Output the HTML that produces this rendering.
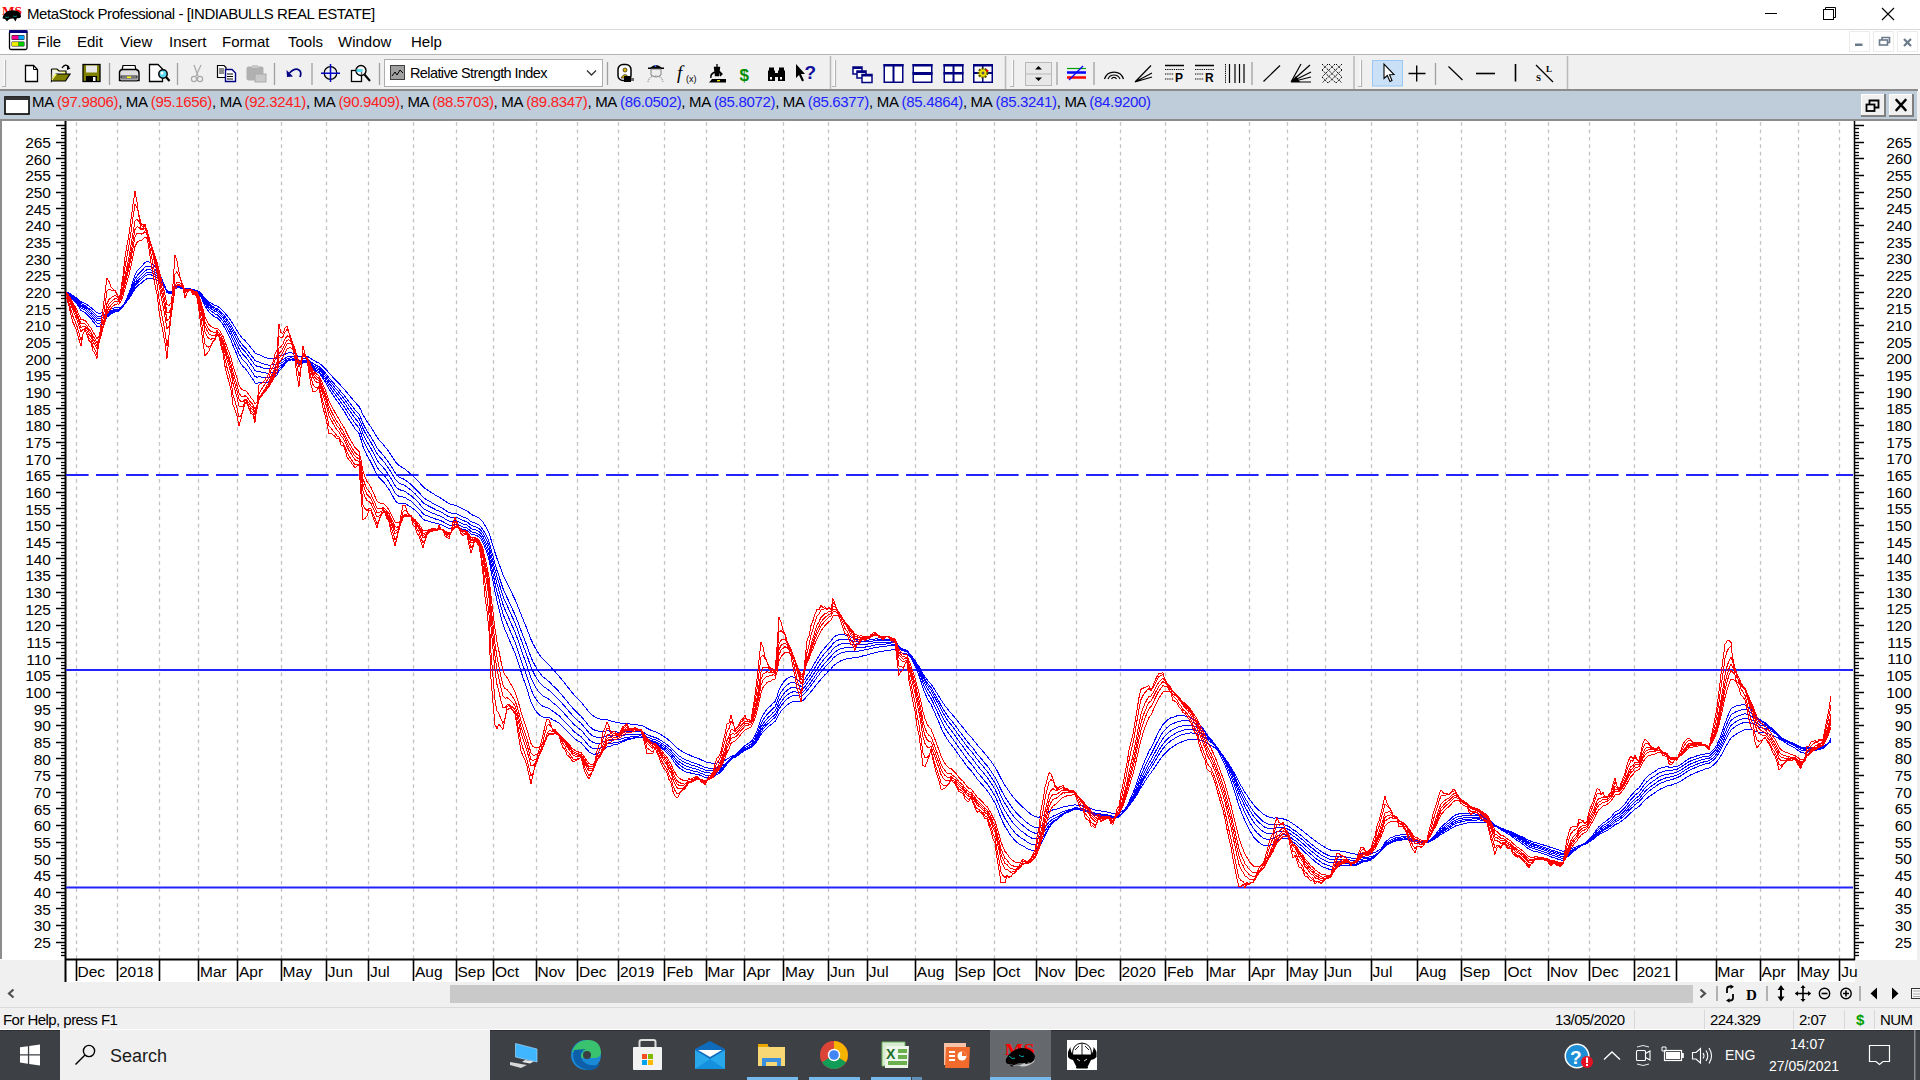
<!DOCTYPE html>
<html><head><meta charset="utf-8"><style>
*{margin:0;padding:0;box-sizing:border-box}
html,body{width:1920px;height:1080px;overflow:hidden;background:#fff;font-family:"Liberation Sans",sans-serif;position:relative}
.a{position:absolute}
svg{position:absolute;left:0;top:0}
.yl{font-size:15.5px;fill:#000;font-family:"Liberation Sans",sans-serif}
.ml{font-size:15.5px;fill:#000;font-family:"Liberation Sans",sans-serif}
.rsi{font-size:14.5px;fill:#000;font-family:"Liberation Sans",sans-serif;letter-spacing:-0.6px}
.menu span{position:absolute;top:33px;font-size:15px;color:#000}
.st{position:absolute;top:1011px;font-size:15px;letter-spacing:-0.55px;color:#000;white-space:nowrap}
</style></head><body>
<div class="a" style="left:0;top:0;width:1920px;height:29px;background:#fff"></div>
<div class="a" style="left:27px;top:5px;font-size:15px;letter-spacing:-0.45px;color:#000;white-space:nowrap">MetaStock Professional - [INDIABULLS REAL ESTATE]</div>
<div class="a" style="left:0;top:29px;width:1920px;height:1px;background:#d9d9d9"></div>
<div class="a" style="left:0;top:30px;width:1920px;height:24px;background:#fff"></div>
<div class="menu">
<span style="left:37px">File</span><span style="left:77px">Edit</span><span style="left:120px">View</span><span style="left:169px">Insert</span><span style="left:222px">Format</span><span style="left:288px">Tools</span><span style="left:338px">Window</span><span style="left:411px">Help</span>
</div>
<div class="a" style="left:0;top:54px;width:1920px;height:1px;background:#b4b4b4"></div>
<div class="a" style="left:0;top:55px;width:1920px;height:34px;background:#f0f0f0"></div>
<div class="a" style="left:0;top:89px;width:1918px;height:2px;background:#8c8c8c"></div>
<div class="a" style="left:0;top:91px;width:1917px;height:28px;background:#bfcddb"></div>
<div class="a" style="left:32px;top:93px;font-size:15px;letter-spacing:-0.325px;color:#000;white-space:nowrap">MA <span style="color:#ff2020">(97.9806)</span>, MA <span style="color:#ff2020">(95.1656)</span>, MA <span style="color:#ff2020">(92.3241)</span>, MA <span style="color:#ff2020">(90.9409)</span>, MA <span style="color:#ff2020">(88.5703)</span>, MA <span style="color:#ff2020">(89.8347)</span>, MA <span style="color:#2020ff">(86.0502)</span>, MA <span style="color:#2020ff">(85.8072)</span>, MA <span style="color:#2020ff">(85.6377)</span>, MA <span style="color:#2020ff">(85.4864)</span>, MA <span style="color:#2020ff">(85.3241)</span>, MA <span style="color:#2020ff">(84.9200)</span></div>
<div class="a" style="left:0;top:119px;width:1917px;height:2px;background:#8c8c8c"></div><div class="a" style="left:1917px;top:91px;width:3px;height:30px;background:#f0f0f0"></div>
<div class="a" style="left:0;top:121px;width:1920px;height:861px;background:#fff"></div>
<div class="a" style="left:0;top:121px;width:2px;height:838px;background:#8c8c8c"></div>
<div class="a" style="left:0;top:960px;width:65px;height:22px;background:#f0f0f0"></div>
<div class="a" style="left:1855px;top:960px;width:65px;height:22px;background:#f0f0f0"></div>
<div class="a" style="left:1917px;top:121px;width:3px;height:839px;background:#f0f0f0"></div>
<div class="a" style="left:0;top:982px;width:1920px;height:25px;background:#f0f0f0"></div>
<div class="a" style="left:450px;top:985px;width:1243px;height:18px;background:#c9c9c9"></div>
<div class="a" style="left:0;top:1007px;width:1920px;height:1px;background:#dadada"></div>
<div class="a" style="left:0;top:1008px;width:1920px;height:22px;background:#f0f0f0"></div>
<div class="st" style="left:3px">For Help, press F1</div>
<div class="st" style="left:1555px">13/05/2020</div>
<div class="st" style="left:1710px">224.329</div>
<div class="st" style="left:1799px">2:07</div>
<div class="st" style="left:1856px;color:#00a000;font-weight:bold;font-size:15px">$</div>
<div class="st" style="left:1880px">NUM</div>
<div class="a" style="left:0;top:1030px;width:1920px;height:50px;background:#3d4045"></div><div class="a" style="left:0;top:1029px;width:1920px;height:1px;background:#fff"></div><div class="a" style="left:0;top:1030px;width:1920px;height:1px;background:#2c2e32"></div>
<div class="a" style="left:60px;top:1030px;width:430px;height:50px;background:#f0f0f0"></div>
<div class="a" style="left:110px;top:1045.5px;font-size:18px;color:#1a1a1a">Search</div>
<div class="a" style="left:1725px;top:1047px;font-size:14px;color:#fff">ENG</div>
<div class="a" style="left:1790px;top:1036px;font-size:14px;color:#fff">14:07</div>
<div class="a" style="left:1769px;top:1058px;font-size:14px;color:#fff">27/05/2021</div>
<svg width="1920" height="1080" viewBox="0 0 1920 1080">
<defs><clipPath id="cp"><rect x="66" y="121" width="1787" height="838"/></clipPath></defs>
<line x1="76.5" y1="122" x2="76.5" y2="959" stroke="#c2c2c2" stroke-width="1.3" stroke-dasharray="3.72 3.72"/><line x1="117.5" y1="122" x2="117.5" y2="959" stroke="#c2c2c2" stroke-width="1.3" stroke-dasharray="3.72 3.72"/><line x1="159.5" y1="122" x2="159.5" y2="959" stroke="#c2c2c2" stroke-width="1.3" stroke-dasharray="3.72 3.72"/><line x1="198.5" y1="122" x2="198.5" y2="959" stroke="#c2c2c2" stroke-width="1.3" stroke-dasharray="3.72 3.72"/><line x1="237.5" y1="122" x2="237.5" y2="959" stroke="#c2c2c2" stroke-width="1.3" stroke-dasharray="3.72 3.72"/><line x1="281.5" y1="122" x2="281.5" y2="959" stroke="#c2c2c2" stroke-width="1.3" stroke-dasharray="3.72 3.72"/><line x1="326.5" y1="122" x2="326.5" y2="959" stroke="#c2c2c2" stroke-width="1.3" stroke-dasharray="3.72 3.72"/><line x1="368.5" y1="122" x2="368.5" y2="959" stroke="#c2c2c2" stroke-width="1.3" stroke-dasharray="3.72 3.72"/><line x1="413.5" y1="122" x2="413.5" y2="959" stroke="#c2c2c2" stroke-width="1.3" stroke-dasharray="3.72 3.72"/><line x1="456.5" y1="122" x2="456.5" y2="959" stroke="#c2c2c2" stroke-width="1.3" stroke-dasharray="3.72 3.72"/><line x1="493.5" y1="122" x2="493.5" y2="959" stroke="#c2c2c2" stroke-width="1.3" stroke-dasharray="3.72 3.72"/><line x1="536.5" y1="122" x2="536.5" y2="959" stroke="#c2c2c2" stroke-width="1.3" stroke-dasharray="3.72 3.72"/><line x1="577.5" y1="122" x2="577.5" y2="959" stroke="#c2c2c2" stroke-width="1.3" stroke-dasharray="3.72 3.72"/><line x1="618.5" y1="122" x2="618.5" y2="959" stroke="#c2c2c2" stroke-width="1.3" stroke-dasharray="3.72 3.72"/><line x1="664.5" y1="122" x2="664.5" y2="959" stroke="#c2c2c2" stroke-width="1.3" stroke-dasharray="3.72 3.72"/><line x1="706.5" y1="122" x2="706.5" y2="959" stroke="#c2c2c2" stroke-width="1.3" stroke-dasharray="3.72 3.72"/><line x1="744.5" y1="122" x2="744.5" y2="959" stroke="#c2c2c2" stroke-width="1.3" stroke-dasharray="3.72 3.72"/><line x1="783.5" y1="122" x2="783.5" y2="959" stroke="#c2c2c2" stroke-width="1.3" stroke-dasharray="3.72 3.72"/><line x1="828.5" y1="122" x2="828.5" y2="959" stroke="#c2c2c2" stroke-width="1.3" stroke-dasharray="3.72 3.72"/><line x1="867.5" y1="122" x2="867.5" y2="959" stroke="#c2c2c2" stroke-width="1.3" stroke-dasharray="3.72 3.72"/><line x1="915.5" y1="122" x2="915.5" y2="959" stroke="#c2c2c2" stroke-width="1.3" stroke-dasharray="3.72 3.72"/><line x1="956.5" y1="122" x2="956.5" y2="959" stroke="#c2c2c2" stroke-width="1.3" stroke-dasharray="3.72 3.72"/><line x1="994.5" y1="122" x2="994.5" y2="959" stroke="#c2c2c2" stroke-width="1.3" stroke-dasharray="3.72 3.72"/><line x1="1036.5" y1="122" x2="1036.5" y2="959" stroke="#c2c2c2" stroke-width="1.3" stroke-dasharray="3.72 3.72"/><line x1="1076.5" y1="122" x2="1076.5" y2="959" stroke="#c2c2c2" stroke-width="1.3" stroke-dasharray="3.72 3.72"/><line x1="1120.5" y1="122" x2="1120.5" y2="959" stroke="#c2c2c2" stroke-width="1.3" stroke-dasharray="3.72 3.72"/><line x1="1165.5" y1="122" x2="1165.5" y2="959" stroke="#c2c2c2" stroke-width="1.3" stroke-dasharray="3.72 3.72"/><line x1="1207.5" y1="122" x2="1207.5" y2="959" stroke="#c2c2c2" stroke-width="1.3" stroke-dasharray="3.72 3.72"/><line x1="1249.5" y1="122" x2="1249.5" y2="959" stroke="#c2c2c2" stroke-width="1.3" stroke-dasharray="3.72 3.72"/><line x1="1287.5" y1="122" x2="1287.5" y2="959" stroke="#c2c2c2" stroke-width="1.3" stroke-dasharray="3.72 3.72"/><line x1="1325.5" y1="122" x2="1325.5" y2="959" stroke="#c2c2c2" stroke-width="1.3" stroke-dasharray="3.72 3.72"/><line x1="1371.5" y1="122" x2="1371.5" y2="959" stroke="#c2c2c2" stroke-width="1.3" stroke-dasharray="3.72 3.72"/><line x1="1417.5" y1="122" x2="1417.5" y2="959" stroke="#c2c2c2" stroke-width="1.3" stroke-dasharray="3.72 3.72"/><line x1="1461.5" y1="122" x2="1461.5" y2="959" stroke="#c2c2c2" stroke-width="1.3" stroke-dasharray="3.72 3.72"/><line x1="1505.5" y1="122" x2="1505.5" y2="959" stroke="#c2c2c2" stroke-width="1.3" stroke-dasharray="3.72 3.72"/><line x1="1548.5" y1="122" x2="1548.5" y2="959" stroke="#c2c2c2" stroke-width="1.3" stroke-dasharray="3.72 3.72"/><line x1="1589.5" y1="122" x2="1589.5" y2="959" stroke="#c2c2c2" stroke-width="1.3" stroke-dasharray="3.72 3.72"/><line x1="1634.5" y1="122" x2="1634.5" y2="959" stroke="#c2c2c2" stroke-width="1.3" stroke-dasharray="3.72 3.72"/><line x1="1676.5" y1="122" x2="1676.5" y2="959" stroke="#c2c2c2" stroke-width="1.3" stroke-dasharray="3.72 3.72"/><line x1="1716.5" y1="122" x2="1716.5" y2="959" stroke="#c2c2c2" stroke-width="1.3" stroke-dasharray="3.72 3.72"/><line x1="1760.5" y1="122" x2="1760.5" y2="959" stroke="#c2c2c2" stroke-width="1.3" stroke-dasharray="3.72 3.72"/><line x1="1798.5" y1="122" x2="1798.5" y2="959" stroke="#c2c2c2" stroke-width="1.3" stroke-dasharray="3.72 3.72"/><line x1="1839.5" y1="122" x2="1839.5" y2="959" stroke="#c2c2c2" stroke-width="1.3" stroke-dasharray="3.72 3.72"/><line x1="61" y1="955.5" x2="65" y2="955.5" stroke="#000" stroke-width="1.3"/><line x1="1854" y1="955.5" x2="1859" y2="955.5" stroke="#000" stroke-width="1.3"/><line x1="61" y1="952.5" x2="65" y2="952.5" stroke="#000" stroke-width="1.3"/><line x1="1854" y1="952.5" x2="1859" y2="952.5" stroke="#000" stroke-width="1.3"/><line x1="61" y1="948.5" x2="65" y2="948.5" stroke="#000" stroke-width="1.3"/><line x1="1854" y1="948.5" x2="1859" y2="948.5" stroke="#000" stroke-width="1.3"/><line x1="61" y1="945.5" x2="65" y2="945.5" stroke="#000" stroke-width="1.3"/><line x1="1854" y1="945.5" x2="1859" y2="945.5" stroke="#000" stroke-width="1.3"/><line x1="56" y1="942.5" x2="65" y2="942.5" stroke="#000" stroke-width="1.5"/><line x1="1854" y1="942.5" x2="1864" y2="942.5" stroke="#000" stroke-width="1.5"/><line x1="61" y1="938.5" x2="65" y2="938.5" stroke="#000" stroke-width="1.3"/><line x1="1854" y1="938.5" x2="1859" y2="938.5" stroke="#000" stroke-width="1.3"/><line x1="61" y1="935.5" x2="65" y2="935.5" stroke="#000" stroke-width="1.3"/><line x1="1854" y1="935.5" x2="1859" y2="935.5" stroke="#000" stroke-width="1.3"/><line x1="61" y1="932.5" x2="65" y2="932.5" stroke="#000" stroke-width="1.3"/><line x1="1854" y1="932.5" x2="1859" y2="932.5" stroke="#000" stroke-width="1.3"/><line x1="61" y1="928.5" x2="65" y2="928.5" stroke="#000" stroke-width="1.3"/><line x1="1854" y1="928.5" x2="1859" y2="928.5" stroke="#000" stroke-width="1.3"/><line x1="56" y1="925.5" x2="65" y2="925.5" stroke="#000" stroke-width="1.5"/><line x1="1854" y1="925.5" x2="1864" y2="925.5" stroke="#000" stroke-width="1.5"/><line x1="61" y1="922.5" x2="65" y2="922.5" stroke="#000" stroke-width="1.3"/><line x1="1854" y1="922.5" x2="1859" y2="922.5" stroke="#000" stroke-width="1.3"/><line x1="61" y1="918.5" x2="65" y2="918.5" stroke="#000" stroke-width="1.3"/><line x1="1854" y1="918.5" x2="1859" y2="918.5" stroke="#000" stroke-width="1.3"/><line x1="61" y1="915.5" x2="65" y2="915.5" stroke="#000" stroke-width="1.3"/><line x1="1854" y1="915.5" x2="1859" y2="915.5" stroke="#000" stroke-width="1.3"/><line x1="61" y1="912.5" x2="65" y2="912.5" stroke="#000" stroke-width="1.3"/><line x1="1854" y1="912.5" x2="1859" y2="912.5" stroke="#000" stroke-width="1.3"/><line x1="56" y1="908.5" x2="65" y2="908.5" stroke="#000" stroke-width="1.5"/><line x1="1854" y1="908.5" x2="1864" y2="908.5" stroke="#000" stroke-width="1.5"/><line x1="61" y1="905.5" x2="65" y2="905.5" stroke="#000" stroke-width="1.3"/><line x1="1854" y1="905.5" x2="1859" y2="905.5" stroke="#000" stroke-width="1.3"/><line x1="61" y1="902.5" x2="65" y2="902.5" stroke="#000" stroke-width="1.3"/><line x1="1854" y1="902.5" x2="1859" y2="902.5" stroke="#000" stroke-width="1.3"/><line x1="61" y1="898.5" x2="65" y2="898.5" stroke="#000" stroke-width="1.3"/><line x1="1854" y1="898.5" x2="1859" y2="898.5" stroke="#000" stroke-width="1.3"/><line x1="61" y1="895.5" x2="65" y2="895.5" stroke="#000" stroke-width="1.3"/><line x1="1854" y1="895.5" x2="1859" y2="895.5" stroke="#000" stroke-width="1.3"/><line x1="56" y1="892.5" x2="65" y2="892.5" stroke="#000" stroke-width="1.5"/><line x1="1854" y1="892.5" x2="1864" y2="892.5" stroke="#000" stroke-width="1.5"/><line x1="61" y1="888.5" x2="65" y2="888.5" stroke="#000" stroke-width="1.3"/><line x1="1854" y1="888.5" x2="1859" y2="888.5" stroke="#000" stroke-width="1.3"/><line x1="61" y1="885.5" x2="65" y2="885.5" stroke="#000" stroke-width="1.3"/><line x1="1854" y1="885.5" x2="1859" y2="885.5" stroke="#000" stroke-width="1.3"/><line x1="61" y1="882.5" x2="65" y2="882.5" stroke="#000" stroke-width="1.3"/><line x1="1854" y1="882.5" x2="1859" y2="882.5" stroke="#000" stroke-width="1.3"/><line x1="61" y1="878.5" x2="65" y2="878.5" stroke="#000" stroke-width="1.3"/><line x1="1854" y1="878.5" x2="1859" y2="878.5" stroke="#000" stroke-width="1.3"/><line x1="56" y1="875.5" x2="65" y2="875.5" stroke="#000" stroke-width="1.5"/><line x1="1854" y1="875.5" x2="1864" y2="875.5" stroke="#000" stroke-width="1.5"/><line x1="61" y1="872.5" x2="65" y2="872.5" stroke="#000" stroke-width="1.3"/><line x1="1854" y1="872.5" x2="1859" y2="872.5" stroke="#000" stroke-width="1.3"/><line x1="61" y1="868.5" x2="65" y2="868.5" stroke="#000" stroke-width="1.3"/><line x1="1854" y1="868.5" x2="1859" y2="868.5" stroke="#000" stroke-width="1.3"/><line x1="61" y1="865.5" x2="65" y2="865.5" stroke="#000" stroke-width="1.3"/><line x1="1854" y1="865.5" x2="1859" y2="865.5" stroke="#000" stroke-width="1.3"/><line x1="61" y1="862.5" x2="65" y2="862.5" stroke="#000" stroke-width="1.3"/><line x1="1854" y1="862.5" x2="1859" y2="862.5" stroke="#000" stroke-width="1.3"/><line x1="56" y1="858.5" x2="65" y2="858.5" stroke="#000" stroke-width="1.5"/><line x1="1854" y1="858.5" x2="1864" y2="858.5" stroke="#000" stroke-width="1.5"/><line x1="61" y1="855.5" x2="65" y2="855.5" stroke="#000" stroke-width="1.3"/><line x1="1854" y1="855.5" x2="1859" y2="855.5" stroke="#000" stroke-width="1.3"/><line x1="61" y1="852.5" x2="65" y2="852.5" stroke="#000" stroke-width="1.3"/><line x1="1854" y1="852.5" x2="1859" y2="852.5" stroke="#000" stroke-width="1.3"/><line x1="61" y1="848.5" x2="65" y2="848.5" stroke="#000" stroke-width="1.3"/><line x1="1854" y1="848.5" x2="1859" y2="848.5" stroke="#000" stroke-width="1.3"/><line x1="61" y1="845.5" x2="65" y2="845.5" stroke="#000" stroke-width="1.3"/><line x1="1854" y1="845.5" x2="1859" y2="845.5" stroke="#000" stroke-width="1.3"/><line x1="56" y1="842.5" x2="65" y2="842.5" stroke="#000" stroke-width="1.5"/><line x1="1854" y1="842.5" x2="1864" y2="842.5" stroke="#000" stroke-width="1.5"/><line x1="61" y1="838.5" x2="65" y2="838.5" stroke="#000" stroke-width="1.3"/><line x1="1854" y1="838.5" x2="1859" y2="838.5" stroke="#000" stroke-width="1.3"/><line x1="61" y1="835.5" x2="65" y2="835.5" stroke="#000" stroke-width="1.3"/><line x1="1854" y1="835.5" x2="1859" y2="835.5" stroke="#000" stroke-width="1.3"/><line x1="61" y1="832.5" x2="65" y2="832.5" stroke="#000" stroke-width="1.3"/><line x1="1854" y1="832.5" x2="1859" y2="832.5" stroke="#000" stroke-width="1.3"/><line x1="61" y1="828.5" x2="65" y2="828.5" stroke="#000" stroke-width="1.3"/><line x1="1854" y1="828.5" x2="1859" y2="828.5" stroke="#000" stroke-width="1.3"/><line x1="56" y1="825.5" x2="65" y2="825.5" stroke="#000" stroke-width="1.5"/><line x1="1854" y1="825.5" x2="1864" y2="825.5" stroke="#000" stroke-width="1.5"/><line x1="61" y1="822.5" x2="65" y2="822.5" stroke="#000" stroke-width="1.3"/><line x1="1854" y1="822.5" x2="1859" y2="822.5" stroke="#000" stroke-width="1.3"/><line x1="61" y1="818.5" x2="65" y2="818.5" stroke="#000" stroke-width="1.3"/><line x1="1854" y1="818.5" x2="1859" y2="818.5" stroke="#000" stroke-width="1.3"/><line x1="61" y1="815.5" x2="65" y2="815.5" stroke="#000" stroke-width="1.3"/><line x1="1854" y1="815.5" x2="1859" y2="815.5" stroke="#000" stroke-width="1.3"/><line x1="61" y1="812.5" x2="65" y2="812.5" stroke="#000" stroke-width="1.3"/><line x1="1854" y1="812.5" x2="1859" y2="812.5" stroke="#000" stroke-width="1.3"/><line x1="56" y1="808.5" x2="65" y2="808.5" stroke="#000" stroke-width="1.5"/><line x1="1854" y1="808.5" x2="1864" y2="808.5" stroke="#000" stroke-width="1.5"/><line x1="61" y1="805.5" x2="65" y2="805.5" stroke="#000" stroke-width="1.3"/><line x1="1854" y1="805.5" x2="1859" y2="805.5" stroke="#000" stroke-width="1.3"/><line x1="61" y1="802.5" x2="65" y2="802.5" stroke="#000" stroke-width="1.3"/><line x1="1854" y1="802.5" x2="1859" y2="802.5" stroke="#000" stroke-width="1.3"/><line x1="61" y1="798.5" x2="65" y2="798.5" stroke="#000" stroke-width="1.3"/><line x1="1854" y1="798.5" x2="1859" y2="798.5" stroke="#000" stroke-width="1.3"/><line x1="61" y1="795.5" x2="65" y2="795.5" stroke="#000" stroke-width="1.3"/><line x1="1854" y1="795.5" x2="1859" y2="795.5" stroke="#000" stroke-width="1.3"/><line x1="56" y1="792.5" x2="65" y2="792.5" stroke="#000" stroke-width="1.5"/><line x1="1854" y1="792.5" x2="1864" y2="792.5" stroke="#000" stroke-width="1.5"/><line x1="61" y1="788.5" x2="65" y2="788.5" stroke="#000" stroke-width="1.3"/><line x1="1854" y1="788.5" x2="1859" y2="788.5" stroke="#000" stroke-width="1.3"/><line x1="61" y1="785.5" x2="65" y2="785.5" stroke="#000" stroke-width="1.3"/><line x1="1854" y1="785.5" x2="1859" y2="785.5" stroke="#000" stroke-width="1.3"/><line x1="61" y1="782.5" x2="65" y2="782.5" stroke="#000" stroke-width="1.3"/><line x1="1854" y1="782.5" x2="1859" y2="782.5" stroke="#000" stroke-width="1.3"/><line x1="61" y1="778.5" x2="65" y2="778.5" stroke="#000" stroke-width="1.3"/><line x1="1854" y1="778.5" x2="1859" y2="778.5" stroke="#000" stroke-width="1.3"/><line x1="56" y1="775.5" x2="65" y2="775.5" stroke="#000" stroke-width="1.5"/><line x1="1854" y1="775.5" x2="1864" y2="775.5" stroke="#000" stroke-width="1.5"/><line x1="61" y1="772.5" x2="65" y2="772.5" stroke="#000" stroke-width="1.3"/><line x1="1854" y1="772.5" x2="1859" y2="772.5" stroke="#000" stroke-width="1.3"/><line x1="61" y1="768.5" x2="65" y2="768.5" stroke="#000" stroke-width="1.3"/><line x1="1854" y1="768.5" x2="1859" y2="768.5" stroke="#000" stroke-width="1.3"/><line x1="61" y1="765.5" x2="65" y2="765.5" stroke="#000" stroke-width="1.3"/><line x1="1854" y1="765.5" x2="1859" y2="765.5" stroke="#000" stroke-width="1.3"/><line x1="61" y1="762.5" x2="65" y2="762.5" stroke="#000" stroke-width="1.3"/><line x1="1854" y1="762.5" x2="1859" y2="762.5" stroke="#000" stroke-width="1.3"/><line x1="56" y1="758.5" x2="65" y2="758.5" stroke="#000" stroke-width="1.5"/><line x1="1854" y1="758.5" x2="1864" y2="758.5" stroke="#000" stroke-width="1.5"/><line x1="61" y1="755.5" x2="65" y2="755.5" stroke="#000" stroke-width="1.3"/><line x1="1854" y1="755.5" x2="1859" y2="755.5" stroke="#000" stroke-width="1.3"/><line x1="61" y1="752.5" x2="65" y2="752.5" stroke="#000" stroke-width="1.3"/><line x1="1854" y1="752.5" x2="1859" y2="752.5" stroke="#000" stroke-width="1.3"/><line x1="61" y1="748.5" x2="65" y2="748.5" stroke="#000" stroke-width="1.3"/><line x1="1854" y1="748.5" x2="1859" y2="748.5" stroke="#000" stroke-width="1.3"/><line x1="61" y1="745.5" x2="65" y2="745.5" stroke="#000" stroke-width="1.3"/><line x1="1854" y1="745.5" x2="1859" y2="745.5" stroke="#000" stroke-width="1.3"/><line x1="56" y1="742.5" x2="65" y2="742.5" stroke="#000" stroke-width="1.5"/><line x1="1854" y1="742.5" x2="1864" y2="742.5" stroke="#000" stroke-width="1.5"/><line x1="61" y1="738.5" x2="65" y2="738.5" stroke="#000" stroke-width="1.3"/><line x1="1854" y1="738.5" x2="1859" y2="738.5" stroke="#000" stroke-width="1.3"/><line x1="61" y1="735.5" x2="65" y2="735.5" stroke="#000" stroke-width="1.3"/><line x1="1854" y1="735.5" x2="1859" y2="735.5" stroke="#000" stroke-width="1.3"/><line x1="61" y1="732.5" x2="65" y2="732.5" stroke="#000" stroke-width="1.3"/><line x1="1854" y1="732.5" x2="1859" y2="732.5" stroke="#000" stroke-width="1.3"/><line x1="61" y1="728.5" x2="65" y2="728.5" stroke="#000" stroke-width="1.3"/><line x1="1854" y1="728.5" x2="1859" y2="728.5" stroke="#000" stroke-width="1.3"/><line x1="56" y1="725.5" x2="65" y2="725.5" stroke="#000" stroke-width="1.5"/><line x1="1854" y1="725.5" x2="1864" y2="725.5" stroke="#000" stroke-width="1.5"/><line x1="61" y1="722.5" x2="65" y2="722.5" stroke="#000" stroke-width="1.3"/><line x1="1854" y1="722.5" x2="1859" y2="722.5" stroke="#000" stroke-width="1.3"/><line x1="61" y1="718.5" x2="65" y2="718.5" stroke="#000" stroke-width="1.3"/><line x1="1854" y1="718.5" x2="1859" y2="718.5" stroke="#000" stroke-width="1.3"/><line x1="61" y1="715.5" x2="65" y2="715.5" stroke="#000" stroke-width="1.3"/><line x1="1854" y1="715.5" x2="1859" y2="715.5" stroke="#000" stroke-width="1.3"/><line x1="61" y1="712.5" x2="65" y2="712.5" stroke="#000" stroke-width="1.3"/><line x1="1854" y1="712.5" x2="1859" y2="712.5" stroke="#000" stroke-width="1.3"/><line x1="56" y1="708.5" x2="65" y2="708.5" stroke="#000" stroke-width="1.5"/><line x1="1854" y1="708.5" x2="1864" y2="708.5" stroke="#000" stroke-width="1.5"/><line x1="61" y1="705.5" x2="65" y2="705.5" stroke="#000" stroke-width="1.3"/><line x1="1854" y1="705.5" x2="1859" y2="705.5" stroke="#000" stroke-width="1.3"/><line x1="61" y1="702.5" x2="65" y2="702.5" stroke="#000" stroke-width="1.3"/><line x1="1854" y1="702.5" x2="1859" y2="702.5" stroke="#000" stroke-width="1.3"/><line x1="61" y1="698.5" x2="65" y2="698.5" stroke="#000" stroke-width="1.3"/><line x1="1854" y1="698.5" x2="1859" y2="698.5" stroke="#000" stroke-width="1.3"/><line x1="61" y1="695.5" x2="65" y2="695.5" stroke="#000" stroke-width="1.3"/><line x1="1854" y1="695.5" x2="1859" y2="695.5" stroke="#000" stroke-width="1.3"/><line x1="56" y1="692.5" x2="65" y2="692.5" stroke="#000" stroke-width="1.5"/><line x1="1854" y1="692.5" x2="1864" y2="692.5" stroke="#000" stroke-width="1.5"/><line x1="61" y1="688.5" x2="65" y2="688.5" stroke="#000" stroke-width="1.3"/><line x1="1854" y1="688.5" x2="1859" y2="688.5" stroke="#000" stroke-width="1.3"/><line x1="61" y1="685.5" x2="65" y2="685.5" stroke="#000" stroke-width="1.3"/><line x1="1854" y1="685.5" x2="1859" y2="685.5" stroke="#000" stroke-width="1.3"/><line x1="61" y1="682.5" x2="65" y2="682.5" stroke="#000" stroke-width="1.3"/><line x1="1854" y1="682.5" x2="1859" y2="682.5" stroke="#000" stroke-width="1.3"/><line x1="61" y1="678.5" x2="65" y2="678.5" stroke="#000" stroke-width="1.3"/><line x1="1854" y1="678.5" x2="1859" y2="678.5" stroke="#000" stroke-width="1.3"/><line x1="56" y1="675.5" x2="65" y2="675.5" stroke="#000" stroke-width="1.5"/><line x1="1854" y1="675.5" x2="1864" y2="675.5" stroke="#000" stroke-width="1.5"/><line x1="61" y1="672.5" x2="65" y2="672.5" stroke="#000" stroke-width="1.3"/><line x1="1854" y1="672.5" x2="1859" y2="672.5" stroke="#000" stroke-width="1.3"/><line x1="61" y1="668.5" x2="65" y2="668.5" stroke="#000" stroke-width="1.3"/><line x1="1854" y1="668.5" x2="1859" y2="668.5" stroke="#000" stroke-width="1.3"/><line x1="61" y1="665.5" x2="65" y2="665.5" stroke="#000" stroke-width="1.3"/><line x1="1854" y1="665.5" x2="1859" y2="665.5" stroke="#000" stroke-width="1.3"/><line x1="61" y1="662.5" x2="65" y2="662.5" stroke="#000" stroke-width="1.3"/><line x1="1854" y1="662.5" x2="1859" y2="662.5" stroke="#000" stroke-width="1.3"/><line x1="56" y1="658.5" x2="65" y2="658.5" stroke="#000" stroke-width="1.5"/><line x1="1854" y1="658.5" x2="1864" y2="658.5" stroke="#000" stroke-width="1.5"/><line x1="61" y1="655.5" x2="65" y2="655.5" stroke="#000" stroke-width="1.3"/><line x1="1854" y1="655.5" x2="1859" y2="655.5" stroke="#000" stroke-width="1.3"/><line x1="61" y1="652.5" x2="65" y2="652.5" stroke="#000" stroke-width="1.3"/><line x1="1854" y1="652.5" x2="1859" y2="652.5" stroke="#000" stroke-width="1.3"/><line x1="61" y1="648.5" x2="65" y2="648.5" stroke="#000" stroke-width="1.3"/><line x1="1854" y1="648.5" x2="1859" y2="648.5" stroke="#000" stroke-width="1.3"/><line x1="61" y1="645.5" x2="65" y2="645.5" stroke="#000" stroke-width="1.3"/><line x1="1854" y1="645.5" x2="1859" y2="645.5" stroke="#000" stroke-width="1.3"/><line x1="56" y1="642.5" x2="65" y2="642.5" stroke="#000" stroke-width="1.5"/><line x1="1854" y1="642.5" x2="1864" y2="642.5" stroke="#000" stroke-width="1.5"/><line x1="61" y1="638.5" x2="65" y2="638.5" stroke="#000" stroke-width="1.3"/><line x1="1854" y1="638.5" x2="1859" y2="638.5" stroke="#000" stroke-width="1.3"/><line x1="61" y1="635.5" x2="65" y2="635.5" stroke="#000" stroke-width="1.3"/><line x1="1854" y1="635.5" x2="1859" y2="635.5" stroke="#000" stroke-width="1.3"/><line x1="61" y1="632.5" x2="65" y2="632.5" stroke="#000" stroke-width="1.3"/><line x1="1854" y1="632.5" x2="1859" y2="632.5" stroke="#000" stroke-width="1.3"/><line x1="61" y1="628.5" x2="65" y2="628.5" stroke="#000" stroke-width="1.3"/><line x1="1854" y1="628.5" x2="1859" y2="628.5" stroke="#000" stroke-width="1.3"/><line x1="56" y1="625.5" x2="65" y2="625.5" stroke="#000" stroke-width="1.5"/><line x1="1854" y1="625.5" x2="1864" y2="625.5" stroke="#000" stroke-width="1.5"/><line x1="61" y1="622.5" x2="65" y2="622.5" stroke="#000" stroke-width="1.3"/><line x1="1854" y1="622.5" x2="1859" y2="622.5" stroke="#000" stroke-width="1.3"/><line x1="61" y1="618.5" x2="65" y2="618.5" stroke="#000" stroke-width="1.3"/><line x1="1854" y1="618.5" x2="1859" y2="618.5" stroke="#000" stroke-width="1.3"/><line x1="61" y1="615.5" x2="65" y2="615.5" stroke="#000" stroke-width="1.3"/><line x1="1854" y1="615.5" x2="1859" y2="615.5" stroke="#000" stroke-width="1.3"/><line x1="61" y1="612.5" x2="65" y2="612.5" stroke="#000" stroke-width="1.3"/><line x1="1854" y1="612.5" x2="1859" y2="612.5" stroke="#000" stroke-width="1.3"/><line x1="56" y1="608.5" x2="65" y2="608.5" stroke="#000" stroke-width="1.5"/><line x1="1854" y1="608.5" x2="1864" y2="608.5" stroke="#000" stroke-width="1.5"/><line x1="61" y1="605.5" x2="65" y2="605.5" stroke="#000" stroke-width="1.3"/><line x1="1854" y1="605.5" x2="1859" y2="605.5" stroke="#000" stroke-width="1.3"/><line x1="61" y1="602.5" x2="65" y2="602.5" stroke="#000" stroke-width="1.3"/><line x1="1854" y1="602.5" x2="1859" y2="602.5" stroke="#000" stroke-width="1.3"/><line x1="61" y1="598.5" x2="65" y2="598.5" stroke="#000" stroke-width="1.3"/><line x1="1854" y1="598.5" x2="1859" y2="598.5" stroke="#000" stroke-width="1.3"/><line x1="61" y1="595.5" x2="65" y2="595.5" stroke="#000" stroke-width="1.3"/><line x1="1854" y1="595.5" x2="1859" y2="595.5" stroke="#000" stroke-width="1.3"/><line x1="56" y1="592.5" x2="65" y2="592.5" stroke="#000" stroke-width="1.5"/><line x1="1854" y1="592.5" x2="1864" y2="592.5" stroke="#000" stroke-width="1.5"/><line x1="61" y1="588.5" x2="65" y2="588.5" stroke="#000" stroke-width="1.3"/><line x1="1854" y1="588.5" x2="1859" y2="588.5" stroke="#000" stroke-width="1.3"/><line x1="61" y1="585.5" x2="65" y2="585.5" stroke="#000" stroke-width="1.3"/><line x1="1854" y1="585.5" x2="1859" y2="585.5" stroke="#000" stroke-width="1.3"/><line x1="61" y1="582.5" x2="65" y2="582.5" stroke="#000" stroke-width="1.3"/><line x1="1854" y1="582.5" x2="1859" y2="582.5" stroke="#000" stroke-width="1.3"/><line x1="61" y1="578.5" x2="65" y2="578.5" stroke="#000" stroke-width="1.3"/><line x1="1854" y1="578.5" x2="1859" y2="578.5" stroke="#000" stroke-width="1.3"/><line x1="56" y1="575.5" x2="65" y2="575.5" stroke="#000" stroke-width="1.5"/><line x1="1854" y1="575.5" x2="1864" y2="575.5" stroke="#000" stroke-width="1.5"/><line x1="61" y1="572.5" x2="65" y2="572.5" stroke="#000" stroke-width="1.3"/><line x1="1854" y1="572.5" x2="1859" y2="572.5" stroke="#000" stroke-width="1.3"/><line x1="61" y1="568.5" x2="65" y2="568.5" stroke="#000" stroke-width="1.3"/><line x1="1854" y1="568.5" x2="1859" y2="568.5" stroke="#000" stroke-width="1.3"/><line x1="61" y1="565.5" x2="65" y2="565.5" stroke="#000" stroke-width="1.3"/><line x1="1854" y1="565.5" x2="1859" y2="565.5" stroke="#000" stroke-width="1.3"/><line x1="61" y1="562.5" x2="65" y2="562.5" stroke="#000" stroke-width="1.3"/><line x1="1854" y1="562.5" x2="1859" y2="562.5" stroke="#000" stroke-width="1.3"/><line x1="56" y1="558.5" x2="65" y2="558.5" stroke="#000" stroke-width="1.5"/><line x1="1854" y1="558.5" x2="1864" y2="558.5" stroke="#000" stroke-width="1.5"/><line x1="61" y1="555.5" x2="65" y2="555.5" stroke="#000" stroke-width="1.3"/><line x1="1854" y1="555.5" x2="1859" y2="555.5" stroke="#000" stroke-width="1.3"/><line x1="61" y1="552.5" x2="65" y2="552.5" stroke="#000" stroke-width="1.3"/><line x1="1854" y1="552.5" x2="1859" y2="552.5" stroke="#000" stroke-width="1.3"/><line x1="61" y1="548.5" x2="65" y2="548.5" stroke="#000" stroke-width="1.3"/><line x1="1854" y1="548.5" x2="1859" y2="548.5" stroke="#000" stroke-width="1.3"/><line x1="61" y1="545.5" x2="65" y2="545.5" stroke="#000" stroke-width="1.3"/><line x1="1854" y1="545.5" x2="1859" y2="545.5" stroke="#000" stroke-width="1.3"/><line x1="56" y1="542.5" x2="65" y2="542.5" stroke="#000" stroke-width="1.5"/><line x1="1854" y1="542.5" x2="1864" y2="542.5" stroke="#000" stroke-width="1.5"/><line x1="61" y1="538.5" x2="65" y2="538.5" stroke="#000" stroke-width="1.3"/><line x1="1854" y1="538.5" x2="1859" y2="538.5" stroke="#000" stroke-width="1.3"/><line x1="61" y1="535.5" x2="65" y2="535.5" stroke="#000" stroke-width="1.3"/><line x1="1854" y1="535.5" x2="1859" y2="535.5" stroke="#000" stroke-width="1.3"/><line x1="61" y1="532.5" x2="65" y2="532.5" stroke="#000" stroke-width="1.3"/><line x1="1854" y1="532.5" x2="1859" y2="532.5" stroke="#000" stroke-width="1.3"/><line x1="61" y1="528.5" x2="65" y2="528.5" stroke="#000" stroke-width="1.3"/><line x1="1854" y1="528.5" x2="1859" y2="528.5" stroke="#000" stroke-width="1.3"/><line x1="56" y1="525.5" x2="65" y2="525.5" stroke="#000" stroke-width="1.5"/><line x1="1854" y1="525.5" x2="1864" y2="525.5" stroke="#000" stroke-width="1.5"/><line x1="61" y1="522.5" x2="65" y2="522.5" stroke="#000" stroke-width="1.3"/><line x1="1854" y1="522.5" x2="1859" y2="522.5" stroke="#000" stroke-width="1.3"/><line x1="61" y1="518.5" x2="65" y2="518.5" stroke="#000" stroke-width="1.3"/><line x1="1854" y1="518.5" x2="1859" y2="518.5" stroke="#000" stroke-width="1.3"/><line x1="61" y1="515.5" x2="65" y2="515.5" stroke="#000" stroke-width="1.3"/><line x1="1854" y1="515.5" x2="1859" y2="515.5" stroke="#000" stroke-width="1.3"/><line x1="61" y1="512.5" x2="65" y2="512.5" stroke="#000" stroke-width="1.3"/><line x1="1854" y1="512.5" x2="1859" y2="512.5" stroke="#000" stroke-width="1.3"/><line x1="56" y1="508.5" x2="65" y2="508.5" stroke="#000" stroke-width="1.5"/><line x1="1854" y1="508.5" x2="1864" y2="508.5" stroke="#000" stroke-width="1.5"/><line x1="61" y1="505.5" x2="65" y2="505.5" stroke="#000" stroke-width="1.3"/><line x1="1854" y1="505.5" x2="1859" y2="505.5" stroke="#000" stroke-width="1.3"/><line x1="61" y1="502.5" x2="65" y2="502.5" stroke="#000" stroke-width="1.3"/><line x1="1854" y1="502.5" x2="1859" y2="502.5" stroke="#000" stroke-width="1.3"/><line x1="61" y1="498.5" x2="65" y2="498.5" stroke="#000" stroke-width="1.3"/><line x1="1854" y1="498.5" x2="1859" y2="498.5" stroke="#000" stroke-width="1.3"/><line x1="61" y1="495.5" x2="65" y2="495.5" stroke="#000" stroke-width="1.3"/><line x1="1854" y1="495.5" x2="1859" y2="495.5" stroke="#000" stroke-width="1.3"/><line x1="56" y1="492.5" x2="65" y2="492.5" stroke="#000" stroke-width="1.5"/><line x1="1854" y1="492.5" x2="1864" y2="492.5" stroke="#000" stroke-width="1.5"/><line x1="61" y1="488.5" x2="65" y2="488.5" stroke="#000" stroke-width="1.3"/><line x1="1854" y1="488.5" x2="1859" y2="488.5" stroke="#000" stroke-width="1.3"/><line x1="61" y1="485.5" x2="65" y2="485.5" stroke="#000" stroke-width="1.3"/><line x1="1854" y1="485.5" x2="1859" y2="485.5" stroke="#000" stroke-width="1.3"/><line x1="61" y1="482.5" x2="65" y2="482.5" stroke="#000" stroke-width="1.3"/><line x1="1854" y1="482.5" x2="1859" y2="482.5" stroke="#000" stroke-width="1.3"/><line x1="61" y1="478.5" x2="65" y2="478.5" stroke="#000" stroke-width="1.3"/><line x1="1854" y1="478.5" x2="1859" y2="478.5" stroke="#000" stroke-width="1.3"/><line x1="56" y1="475.5" x2="65" y2="475.5" stroke="#000" stroke-width="1.5"/><line x1="1854" y1="475.5" x2="1864" y2="475.5" stroke="#000" stroke-width="1.5"/><line x1="61" y1="472.5" x2="65" y2="472.5" stroke="#000" stroke-width="1.3"/><line x1="1854" y1="472.5" x2="1859" y2="472.5" stroke="#000" stroke-width="1.3"/><line x1="61" y1="468.5" x2="65" y2="468.5" stroke="#000" stroke-width="1.3"/><line x1="1854" y1="468.5" x2="1859" y2="468.5" stroke="#000" stroke-width="1.3"/><line x1="61" y1="465.5" x2="65" y2="465.5" stroke="#000" stroke-width="1.3"/><line x1="1854" y1="465.5" x2="1859" y2="465.5" stroke="#000" stroke-width="1.3"/><line x1="61" y1="462.5" x2="65" y2="462.5" stroke="#000" stroke-width="1.3"/><line x1="1854" y1="462.5" x2="1859" y2="462.5" stroke="#000" stroke-width="1.3"/><line x1="56" y1="458.5" x2="65" y2="458.5" stroke="#000" stroke-width="1.5"/><line x1="1854" y1="458.5" x2="1864" y2="458.5" stroke="#000" stroke-width="1.5"/><line x1="61" y1="455.5" x2="65" y2="455.5" stroke="#000" stroke-width="1.3"/><line x1="1854" y1="455.5" x2="1859" y2="455.5" stroke="#000" stroke-width="1.3"/><line x1="61" y1="452.5" x2="65" y2="452.5" stroke="#000" stroke-width="1.3"/><line x1="1854" y1="452.5" x2="1859" y2="452.5" stroke="#000" stroke-width="1.3"/><line x1="61" y1="448.5" x2="65" y2="448.5" stroke="#000" stroke-width="1.3"/><line x1="1854" y1="448.5" x2="1859" y2="448.5" stroke="#000" stroke-width="1.3"/><line x1="61" y1="445.5" x2="65" y2="445.5" stroke="#000" stroke-width="1.3"/><line x1="1854" y1="445.5" x2="1859" y2="445.5" stroke="#000" stroke-width="1.3"/><line x1="56" y1="442.5" x2="65" y2="442.5" stroke="#000" stroke-width="1.5"/><line x1="1854" y1="442.5" x2="1864" y2="442.5" stroke="#000" stroke-width="1.5"/><line x1="61" y1="438.5" x2="65" y2="438.5" stroke="#000" stroke-width="1.3"/><line x1="1854" y1="438.5" x2="1859" y2="438.5" stroke="#000" stroke-width="1.3"/><line x1="61" y1="435.5" x2="65" y2="435.5" stroke="#000" stroke-width="1.3"/><line x1="1854" y1="435.5" x2="1859" y2="435.5" stroke="#000" stroke-width="1.3"/><line x1="61" y1="432.5" x2="65" y2="432.5" stroke="#000" stroke-width="1.3"/><line x1="1854" y1="432.5" x2="1859" y2="432.5" stroke="#000" stroke-width="1.3"/><line x1="61" y1="428.5" x2="65" y2="428.5" stroke="#000" stroke-width="1.3"/><line x1="1854" y1="428.5" x2="1859" y2="428.5" stroke="#000" stroke-width="1.3"/><line x1="56" y1="425.5" x2="65" y2="425.5" stroke="#000" stroke-width="1.5"/><line x1="1854" y1="425.5" x2="1864" y2="425.5" stroke="#000" stroke-width="1.5"/><line x1="61" y1="422.5" x2="65" y2="422.5" stroke="#000" stroke-width="1.3"/><line x1="1854" y1="422.5" x2="1859" y2="422.5" stroke="#000" stroke-width="1.3"/><line x1="61" y1="418.5" x2="65" y2="418.5" stroke="#000" stroke-width="1.3"/><line x1="1854" y1="418.5" x2="1859" y2="418.5" stroke="#000" stroke-width="1.3"/><line x1="61" y1="415.5" x2="65" y2="415.5" stroke="#000" stroke-width="1.3"/><line x1="1854" y1="415.5" x2="1859" y2="415.5" stroke="#000" stroke-width="1.3"/><line x1="61" y1="412.5" x2="65" y2="412.5" stroke="#000" stroke-width="1.3"/><line x1="1854" y1="412.5" x2="1859" y2="412.5" stroke="#000" stroke-width="1.3"/><line x1="56" y1="408.5" x2="65" y2="408.5" stroke="#000" stroke-width="1.5"/><line x1="1854" y1="408.5" x2="1864" y2="408.5" stroke="#000" stroke-width="1.5"/><line x1="61" y1="405.5" x2="65" y2="405.5" stroke="#000" stroke-width="1.3"/><line x1="1854" y1="405.5" x2="1859" y2="405.5" stroke="#000" stroke-width="1.3"/><line x1="61" y1="402.5" x2="65" y2="402.5" stroke="#000" stroke-width="1.3"/><line x1="1854" y1="402.5" x2="1859" y2="402.5" stroke="#000" stroke-width="1.3"/><line x1="61" y1="398.5" x2="65" y2="398.5" stroke="#000" stroke-width="1.3"/><line x1="1854" y1="398.5" x2="1859" y2="398.5" stroke="#000" stroke-width="1.3"/><line x1="61" y1="395.5" x2="65" y2="395.5" stroke="#000" stroke-width="1.3"/><line x1="1854" y1="395.5" x2="1859" y2="395.5" stroke="#000" stroke-width="1.3"/><line x1="56" y1="392.5" x2="65" y2="392.5" stroke="#000" stroke-width="1.5"/><line x1="1854" y1="392.5" x2="1864" y2="392.5" stroke="#000" stroke-width="1.5"/><line x1="61" y1="388.5" x2="65" y2="388.5" stroke="#000" stroke-width="1.3"/><line x1="1854" y1="388.5" x2="1859" y2="388.5" stroke="#000" stroke-width="1.3"/><line x1="61" y1="385.5" x2="65" y2="385.5" stroke="#000" stroke-width="1.3"/><line x1="1854" y1="385.5" x2="1859" y2="385.5" stroke="#000" stroke-width="1.3"/><line x1="61" y1="382.5" x2="65" y2="382.5" stroke="#000" stroke-width="1.3"/><line x1="1854" y1="382.5" x2="1859" y2="382.5" stroke="#000" stroke-width="1.3"/><line x1="61" y1="378.5" x2="65" y2="378.5" stroke="#000" stroke-width="1.3"/><line x1="1854" y1="378.5" x2="1859" y2="378.5" stroke="#000" stroke-width="1.3"/><line x1="56" y1="375.5" x2="65" y2="375.5" stroke="#000" stroke-width="1.5"/><line x1="1854" y1="375.5" x2="1864" y2="375.5" stroke="#000" stroke-width="1.5"/><line x1="61" y1="372.5" x2="65" y2="372.5" stroke="#000" stroke-width="1.3"/><line x1="1854" y1="372.5" x2="1859" y2="372.5" stroke="#000" stroke-width="1.3"/><line x1="61" y1="368.5" x2="65" y2="368.5" stroke="#000" stroke-width="1.3"/><line x1="1854" y1="368.5" x2="1859" y2="368.5" stroke="#000" stroke-width="1.3"/><line x1="61" y1="365.5" x2="65" y2="365.5" stroke="#000" stroke-width="1.3"/><line x1="1854" y1="365.5" x2="1859" y2="365.5" stroke="#000" stroke-width="1.3"/><line x1="61" y1="362.5" x2="65" y2="362.5" stroke="#000" stroke-width="1.3"/><line x1="1854" y1="362.5" x2="1859" y2="362.5" stroke="#000" stroke-width="1.3"/><line x1="56" y1="358.5" x2="65" y2="358.5" stroke="#000" stroke-width="1.5"/><line x1="1854" y1="358.5" x2="1864" y2="358.5" stroke="#000" stroke-width="1.5"/><line x1="61" y1="355.5" x2="65" y2="355.5" stroke="#000" stroke-width="1.3"/><line x1="1854" y1="355.5" x2="1859" y2="355.5" stroke="#000" stroke-width="1.3"/><line x1="61" y1="352.5" x2="65" y2="352.5" stroke="#000" stroke-width="1.3"/><line x1="1854" y1="352.5" x2="1859" y2="352.5" stroke="#000" stroke-width="1.3"/><line x1="61" y1="348.5" x2="65" y2="348.5" stroke="#000" stroke-width="1.3"/><line x1="1854" y1="348.5" x2="1859" y2="348.5" stroke="#000" stroke-width="1.3"/><line x1="61" y1="345.5" x2="65" y2="345.5" stroke="#000" stroke-width="1.3"/><line x1="1854" y1="345.5" x2="1859" y2="345.5" stroke="#000" stroke-width="1.3"/><line x1="56" y1="342.5" x2="65" y2="342.5" stroke="#000" stroke-width="1.5"/><line x1="1854" y1="342.5" x2="1864" y2="342.5" stroke="#000" stroke-width="1.5"/><line x1="61" y1="338.5" x2="65" y2="338.5" stroke="#000" stroke-width="1.3"/><line x1="1854" y1="338.5" x2="1859" y2="338.5" stroke="#000" stroke-width="1.3"/><line x1="61" y1="335.5" x2="65" y2="335.5" stroke="#000" stroke-width="1.3"/><line x1="1854" y1="335.5" x2="1859" y2="335.5" stroke="#000" stroke-width="1.3"/><line x1="61" y1="332.5" x2="65" y2="332.5" stroke="#000" stroke-width="1.3"/><line x1="1854" y1="332.5" x2="1859" y2="332.5" stroke="#000" stroke-width="1.3"/><line x1="61" y1="328.5" x2="65" y2="328.5" stroke="#000" stroke-width="1.3"/><line x1="1854" y1="328.5" x2="1859" y2="328.5" stroke="#000" stroke-width="1.3"/><line x1="56" y1="325.5" x2="65" y2="325.5" stroke="#000" stroke-width="1.5"/><line x1="1854" y1="325.5" x2="1864" y2="325.5" stroke="#000" stroke-width="1.5"/><line x1="61" y1="322.5" x2="65" y2="322.5" stroke="#000" stroke-width="1.3"/><line x1="1854" y1="322.5" x2="1859" y2="322.5" stroke="#000" stroke-width="1.3"/><line x1="61" y1="318.5" x2="65" y2="318.5" stroke="#000" stroke-width="1.3"/><line x1="1854" y1="318.5" x2="1859" y2="318.5" stroke="#000" stroke-width="1.3"/><line x1="61" y1="315.5" x2="65" y2="315.5" stroke="#000" stroke-width="1.3"/><line x1="1854" y1="315.5" x2="1859" y2="315.5" stroke="#000" stroke-width="1.3"/><line x1="61" y1="312.5" x2="65" y2="312.5" stroke="#000" stroke-width="1.3"/><line x1="1854" y1="312.5" x2="1859" y2="312.5" stroke="#000" stroke-width="1.3"/><line x1="56" y1="308.5" x2="65" y2="308.5" stroke="#000" stroke-width="1.5"/><line x1="1854" y1="308.5" x2="1864" y2="308.5" stroke="#000" stroke-width="1.5"/><line x1="61" y1="305.5" x2="65" y2="305.5" stroke="#000" stroke-width="1.3"/><line x1="1854" y1="305.5" x2="1859" y2="305.5" stroke="#000" stroke-width="1.3"/><line x1="61" y1="302.5" x2="65" y2="302.5" stroke="#000" stroke-width="1.3"/><line x1="1854" y1="302.5" x2="1859" y2="302.5" stroke="#000" stroke-width="1.3"/><line x1="61" y1="298.5" x2="65" y2="298.5" stroke="#000" stroke-width="1.3"/><line x1="1854" y1="298.5" x2="1859" y2="298.5" stroke="#000" stroke-width="1.3"/><line x1="61" y1="295.5" x2="65" y2="295.5" stroke="#000" stroke-width="1.3"/><line x1="1854" y1="295.5" x2="1859" y2="295.5" stroke="#000" stroke-width="1.3"/><line x1="56" y1="292.5" x2="65" y2="292.5" stroke="#000" stroke-width="1.5"/><line x1="1854" y1="292.5" x2="1864" y2="292.5" stroke="#000" stroke-width="1.5"/><line x1="61" y1="288.5" x2="65" y2="288.5" stroke="#000" stroke-width="1.3"/><line x1="1854" y1="288.5" x2="1859" y2="288.5" stroke="#000" stroke-width="1.3"/><line x1="61" y1="285.5" x2="65" y2="285.5" stroke="#000" stroke-width="1.3"/><line x1="1854" y1="285.5" x2="1859" y2="285.5" stroke="#000" stroke-width="1.3"/><line x1="61" y1="282.5" x2="65" y2="282.5" stroke="#000" stroke-width="1.3"/><line x1="1854" y1="282.5" x2="1859" y2="282.5" stroke="#000" stroke-width="1.3"/><line x1="61" y1="278.5" x2="65" y2="278.5" stroke="#000" stroke-width="1.3"/><line x1="1854" y1="278.5" x2="1859" y2="278.5" stroke="#000" stroke-width="1.3"/><line x1="56" y1="275.5" x2="65" y2="275.5" stroke="#000" stroke-width="1.5"/><line x1="1854" y1="275.5" x2="1864" y2="275.5" stroke="#000" stroke-width="1.5"/><line x1="61" y1="272.5" x2="65" y2="272.5" stroke="#000" stroke-width="1.3"/><line x1="1854" y1="272.5" x2="1859" y2="272.5" stroke="#000" stroke-width="1.3"/><line x1="61" y1="268.5" x2="65" y2="268.5" stroke="#000" stroke-width="1.3"/><line x1="1854" y1="268.5" x2="1859" y2="268.5" stroke="#000" stroke-width="1.3"/><line x1="61" y1="265.5" x2="65" y2="265.5" stroke="#000" stroke-width="1.3"/><line x1="1854" y1="265.5" x2="1859" y2="265.5" stroke="#000" stroke-width="1.3"/><line x1="61" y1="262.5" x2="65" y2="262.5" stroke="#000" stroke-width="1.3"/><line x1="1854" y1="262.5" x2="1859" y2="262.5" stroke="#000" stroke-width="1.3"/><line x1="56" y1="258.5" x2="65" y2="258.5" stroke="#000" stroke-width="1.5"/><line x1="1854" y1="258.5" x2="1864" y2="258.5" stroke="#000" stroke-width="1.5"/><line x1="61" y1="255.5" x2="65" y2="255.5" stroke="#000" stroke-width="1.3"/><line x1="1854" y1="255.5" x2="1859" y2="255.5" stroke="#000" stroke-width="1.3"/><line x1="61" y1="252.5" x2="65" y2="252.5" stroke="#000" stroke-width="1.3"/><line x1="1854" y1="252.5" x2="1859" y2="252.5" stroke="#000" stroke-width="1.3"/><line x1="61" y1="248.5" x2="65" y2="248.5" stroke="#000" stroke-width="1.3"/><line x1="1854" y1="248.5" x2="1859" y2="248.5" stroke="#000" stroke-width="1.3"/><line x1="61" y1="245.5" x2="65" y2="245.5" stroke="#000" stroke-width="1.3"/><line x1="1854" y1="245.5" x2="1859" y2="245.5" stroke="#000" stroke-width="1.3"/><line x1="56" y1="242.5" x2="65" y2="242.5" stroke="#000" stroke-width="1.5"/><line x1="1854" y1="242.5" x2="1864" y2="242.5" stroke="#000" stroke-width="1.5"/><line x1="61" y1="238.5" x2="65" y2="238.5" stroke="#000" stroke-width="1.3"/><line x1="1854" y1="238.5" x2="1859" y2="238.5" stroke="#000" stroke-width="1.3"/><line x1="61" y1="235.5" x2="65" y2="235.5" stroke="#000" stroke-width="1.3"/><line x1="1854" y1="235.5" x2="1859" y2="235.5" stroke="#000" stroke-width="1.3"/><line x1="61" y1="232.5" x2="65" y2="232.5" stroke="#000" stroke-width="1.3"/><line x1="1854" y1="232.5" x2="1859" y2="232.5" stroke="#000" stroke-width="1.3"/><line x1="61" y1="228.5" x2="65" y2="228.5" stroke="#000" stroke-width="1.3"/><line x1="1854" y1="228.5" x2="1859" y2="228.5" stroke="#000" stroke-width="1.3"/><line x1="56" y1="225.5" x2="65" y2="225.5" stroke="#000" stroke-width="1.5"/><line x1="1854" y1="225.5" x2="1864" y2="225.5" stroke="#000" stroke-width="1.5"/><line x1="61" y1="222.5" x2="65" y2="222.5" stroke="#000" stroke-width="1.3"/><line x1="1854" y1="222.5" x2="1859" y2="222.5" stroke="#000" stroke-width="1.3"/><line x1="61" y1="218.5" x2="65" y2="218.5" stroke="#000" stroke-width="1.3"/><line x1="1854" y1="218.5" x2="1859" y2="218.5" stroke="#000" stroke-width="1.3"/><line x1="61" y1="215.5" x2="65" y2="215.5" stroke="#000" stroke-width="1.3"/><line x1="1854" y1="215.5" x2="1859" y2="215.5" stroke="#000" stroke-width="1.3"/><line x1="61" y1="212.5" x2="65" y2="212.5" stroke="#000" stroke-width="1.3"/><line x1="1854" y1="212.5" x2="1859" y2="212.5" stroke="#000" stroke-width="1.3"/><line x1="56" y1="208.5" x2="65" y2="208.5" stroke="#000" stroke-width="1.5"/><line x1="1854" y1="208.5" x2="1864" y2="208.5" stroke="#000" stroke-width="1.5"/><line x1="61" y1="205.5" x2="65" y2="205.5" stroke="#000" stroke-width="1.3"/><line x1="1854" y1="205.5" x2="1859" y2="205.5" stroke="#000" stroke-width="1.3"/><line x1="61" y1="202.5" x2="65" y2="202.5" stroke="#000" stroke-width="1.3"/><line x1="1854" y1="202.5" x2="1859" y2="202.5" stroke="#000" stroke-width="1.3"/><line x1="61" y1="198.5" x2="65" y2="198.5" stroke="#000" stroke-width="1.3"/><line x1="1854" y1="198.5" x2="1859" y2="198.5" stroke="#000" stroke-width="1.3"/><line x1="61" y1="195.5" x2="65" y2="195.5" stroke="#000" stroke-width="1.3"/><line x1="1854" y1="195.5" x2="1859" y2="195.5" stroke="#000" stroke-width="1.3"/><line x1="56" y1="192.5" x2="65" y2="192.5" stroke="#000" stroke-width="1.5"/><line x1="1854" y1="192.5" x2="1864" y2="192.5" stroke="#000" stroke-width="1.5"/><line x1="61" y1="188.5" x2="65" y2="188.5" stroke="#000" stroke-width="1.3"/><line x1="1854" y1="188.5" x2="1859" y2="188.5" stroke="#000" stroke-width="1.3"/><line x1="61" y1="185.5" x2="65" y2="185.5" stroke="#000" stroke-width="1.3"/><line x1="1854" y1="185.5" x2="1859" y2="185.5" stroke="#000" stroke-width="1.3"/><line x1="61" y1="182.5" x2="65" y2="182.5" stroke="#000" stroke-width="1.3"/><line x1="1854" y1="182.5" x2="1859" y2="182.5" stroke="#000" stroke-width="1.3"/><line x1="61" y1="178.5" x2="65" y2="178.5" stroke="#000" stroke-width="1.3"/><line x1="1854" y1="178.5" x2="1859" y2="178.5" stroke="#000" stroke-width="1.3"/><line x1="56" y1="175.5" x2="65" y2="175.5" stroke="#000" stroke-width="1.5"/><line x1="1854" y1="175.5" x2="1864" y2="175.5" stroke="#000" stroke-width="1.5"/><line x1="61" y1="172.5" x2="65" y2="172.5" stroke="#000" stroke-width="1.3"/><line x1="1854" y1="172.5" x2="1859" y2="172.5" stroke="#000" stroke-width="1.3"/><line x1="61" y1="168.5" x2="65" y2="168.5" stroke="#000" stroke-width="1.3"/><line x1="1854" y1="168.5" x2="1859" y2="168.5" stroke="#000" stroke-width="1.3"/><line x1="61" y1="165.5" x2="65" y2="165.5" stroke="#000" stroke-width="1.3"/><line x1="1854" y1="165.5" x2="1859" y2="165.5" stroke="#000" stroke-width="1.3"/><line x1="61" y1="162.5" x2="65" y2="162.5" stroke="#000" stroke-width="1.3"/><line x1="1854" y1="162.5" x2="1859" y2="162.5" stroke="#000" stroke-width="1.3"/><line x1="56" y1="158.5" x2="65" y2="158.5" stroke="#000" stroke-width="1.5"/><line x1="1854" y1="158.5" x2="1864" y2="158.5" stroke="#000" stroke-width="1.5"/><line x1="61" y1="155.5" x2="65" y2="155.5" stroke="#000" stroke-width="1.3"/><line x1="1854" y1="155.5" x2="1859" y2="155.5" stroke="#000" stroke-width="1.3"/><line x1="61" y1="152.5" x2="65" y2="152.5" stroke="#000" stroke-width="1.3"/><line x1="1854" y1="152.5" x2="1859" y2="152.5" stroke="#000" stroke-width="1.3"/><line x1="61" y1="148.5" x2="65" y2="148.5" stroke="#000" stroke-width="1.3"/><line x1="1854" y1="148.5" x2="1859" y2="148.5" stroke="#000" stroke-width="1.3"/><line x1="61" y1="145.5" x2="65" y2="145.5" stroke="#000" stroke-width="1.3"/><line x1="1854" y1="145.5" x2="1859" y2="145.5" stroke="#000" stroke-width="1.3"/><line x1="56" y1="142.5" x2="65" y2="142.5" stroke="#000" stroke-width="1.5"/><line x1="1854" y1="142.5" x2="1864" y2="142.5" stroke="#000" stroke-width="1.5"/><line x1="61" y1="138.5" x2="65" y2="138.5" stroke="#000" stroke-width="1.3"/><line x1="1854" y1="138.5" x2="1859" y2="138.5" stroke="#000" stroke-width="1.3"/><line x1="61" y1="135.5" x2="65" y2="135.5" stroke="#000" stroke-width="1.3"/><line x1="1854" y1="135.5" x2="1859" y2="135.5" stroke="#000" stroke-width="1.3"/><line x1="61" y1="132.5" x2="65" y2="132.5" stroke="#000" stroke-width="1.3"/><line x1="1854" y1="132.5" x2="1859" y2="132.5" stroke="#000" stroke-width="1.3"/><line x1="61" y1="128.5" x2="65" y2="128.5" stroke="#000" stroke-width="1.3"/><line x1="1854" y1="128.5" x2="1859" y2="128.5" stroke="#000" stroke-width="1.3"/><line x1="56" y1="125.5" x2="65" y2="125.5" stroke="#000" stroke-width="1.5"/><line x1="1854" y1="125.5" x2="1864" y2="125.5" stroke="#000" stroke-width="1.5"/><text x="51" y="947.9" text-anchor="end" class="yl">25</text><text x="1912" y="947.7" text-anchor="end" class="yl">25</text><text x="51" y="931.2" text-anchor="end" class="yl">30</text><text x="1912" y="931.0" text-anchor="end" class="yl">30</text><text x="51" y="914.5" text-anchor="end" class="yl">35</text><text x="1912" y="914.3" text-anchor="end" class="yl">35</text><text x="51" y="897.9" text-anchor="end" class="yl">40</text><text x="1912" y="897.7" text-anchor="end" class="yl">40</text><text x="51" y="881.2" text-anchor="end" class="yl">45</text><text x="1912" y="881.0" text-anchor="end" class="yl">45</text><text x="51" y="864.5" text-anchor="end" class="yl">50</text><text x="1912" y="864.3" text-anchor="end" class="yl">50</text><text x="51" y="847.9" text-anchor="end" class="yl">55</text><text x="1912" y="847.7" text-anchor="end" class="yl">55</text><text x="51" y="831.2" text-anchor="end" class="yl">60</text><text x="1912" y="831.0" text-anchor="end" class="yl">60</text><text x="51" y="814.5" text-anchor="end" class="yl">65</text><text x="1912" y="814.3" text-anchor="end" class="yl">65</text><text x="51" y="797.9" text-anchor="end" class="yl">70</text><text x="1912" y="797.7" text-anchor="end" class="yl">70</text><text x="51" y="781.2" text-anchor="end" class="yl">75</text><text x="1912" y="781.0" text-anchor="end" class="yl">75</text><text x="51" y="764.5" text-anchor="end" class="yl">80</text><text x="1912" y="764.3" text-anchor="end" class="yl">80</text><text x="51" y="747.9" text-anchor="end" class="yl">85</text><text x="1912" y="747.7" text-anchor="end" class="yl">85</text><text x="51" y="731.2" text-anchor="end" class="yl">90</text><text x="1912" y="731.0" text-anchor="end" class="yl">90</text><text x="51" y="714.5" text-anchor="end" class="yl">95</text><text x="1912" y="714.3" text-anchor="end" class="yl">95</text><text x="51" y="697.9" text-anchor="end" class="yl">100</text><text x="1912" y="697.7" text-anchor="end" class="yl">100</text><text x="51" y="681.2" text-anchor="end" class="yl">105</text><text x="1912" y="681.0" text-anchor="end" class="yl">105</text><text x="51" y="664.5" text-anchor="end" class="yl">110</text><text x="1912" y="664.3" text-anchor="end" class="yl">110</text><text x="51" y="647.9" text-anchor="end" class="yl">115</text><text x="1912" y="647.7" text-anchor="end" class="yl">115</text><text x="51" y="631.2" text-anchor="end" class="yl">120</text><text x="1912" y="631.0" text-anchor="end" class="yl">120</text><text x="51" y="614.5" text-anchor="end" class="yl">125</text><text x="1912" y="614.3" text-anchor="end" class="yl">125</text><text x="51" y="597.9" text-anchor="end" class="yl">130</text><text x="1912" y="597.7" text-anchor="end" class="yl">130</text><text x="51" y="581.2" text-anchor="end" class="yl">135</text><text x="1912" y="581.0" text-anchor="end" class="yl">135</text><text x="51" y="564.5" text-anchor="end" class="yl">140</text><text x="1912" y="564.3" text-anchor="end" class="yl">140</text><text x="51" y="547.9" text-anchor="end" class="yl">145</text><text x="1912" y="547.7" text-anchor="end" class="yl">145</text><text x="51" y="531.2" text-anchor="end" class="yl">150</text><text x="1912" y="531.0" text-anchor="end" class="yl">150</text><text x="51" y="514.5" text-anchor="end" class="yl">155</text><text x="1912" y="514.3" text-anchor="end" class="yl">155</text><text x="51" y="497.9" text-anchor="end" class="yl">160</text><text x="1912" y="497.7" text-anchor="end" class="yl">160</text><text x="51" y="481.2" text-anchor="end" class="yl">165</text><text x="1912" y="481.0" text-anchor="end" class="yl">165</text><text x="51" y="464.5" text-anchor="end" class="yl">170</text><text x="1912" y="464.3" text-anchor="end" class="yl">170</text><text x="51" y="447.9" text-anchor="end" class="yl">175</text><text x="1912" y="447.7" text-anchor="end" class="yl">175</text><text x="51" y="431.2" text-anchor="end" class="yl">180</text><text x="1912" y="431.0" text-anchor="end" class="yl">180</text><text x="51" y="414.5" text-anchor="end" class="yl">185</text><text x="1912" y="414.3" text-anchor="end" class="yl">185</text><text x="51" y="397.9" text-anchor="end" class="yl">190</text><text x="1912" y="397.7" text-anchor="end" class="yl">190</text><text x="51" y="381.2" text-anchor="end" class="yl">195</text><text x="1912" y="381.0" text-anchor="end" class="yl">195</text><text x="51" y="364.5" text-anchor="end" class="yl">200</text><text x="1912" y="364.3" text-anchor="end" class="yl">200</text><text x="51" y="347.9" text-anchor="end" class="yl">205</text><text x="1912" y="347.7" text-anchor="end" class="yl">205</text><text x="51" y="331.2" text-anchor="end" class="yl">210</text><text x="1912" y="331.0" text-anchor="end" class="yl">210</text><text x="51" y="314.5" text-anchor="end" class="yl">215</text><text x="1912" y="314.3" text-anchor="end" class="yl">215</text><text x="51" y="297.9" text-anchor="end" class="yl">220</text><text x="1912" y="297.7" text-anchor="end" class="yl">220</text><text x="51" y="281.2" text-anchor="end" class="yl">225</text><text x="1912" y="281.0" text-anchor="end" class="yl">225</text><text x="51" y="264.5" text-anchor="end" class="yl">230</text><text x="1912" y="264.3" text-anchor="end" class="yl">230</text><text x="51" y="247.9" text-anchor="end" class="yl">235</text><text x="1912" y="247.7" text-anchor="end" class="yl">235</text><text x="51" y="231.2" text-anchor="end" class="yl">240</text><text x="1912" y="231.0" text-anchor="end" class="yl">240</text><text x="51" y="214.5" text-anchor="end" class="yl">245</text><text x="1912" y="214.3" text-anchor="end" class="yl">245</text><text x="51" y="197.9" text-anchor="end" class="yl">250</text><text x="1912" y="197.7" text-anchor="end" class="yl">250</text><text x="51" y="181.2" text-anchor="end" class="yl">255</text><text x="1912" y="181.0" text-anchor="end" class="yl">255</text><text x="51" y="164.5" text-anchor="end" class="yl">260</text><text x="1912" y="164.3" text-anchor="end" class="yl">260</text><text x="51" y="147.9" text-anchor="end" class="yl">265</text><text x="1912" y="147.7" text-anchor="end" class="yl">265</text><line x1="65.5" y1="121" x2="65.5" y2="982" stroke="#000" stroke-width="2"/><line x1="1854.5" y1="121" x2="1854.5" y2="960" stroke="#000" stroke-width="1.5"/><line x1="65" y1="959.5" x2="1855" y2="959.5" stroke="#000" stroke-width="2"/><line x1="66" y1="475" x2="1853" y2="475" stroke="#2222ff" stroke-width="2" stroke-dasharray="22.6 7.4"/><line x1="66" y1="670" x2="1853" y2="670" stroke="#2222ff" stroke-width="2"/><line x1="66" y1="887.5" x2="1853" y2="887.5" stroke="#2222ff" stroke-width="2"/><g fill="none" stroke-width="1" shape-rendering="crispEdges" clip-path="url(#cp)"><polyline stroke="#0000ff" points="65,293.3 67,293.9 69,295.4 71,297.4 73,299.7 75,301.9 77,304.3 79,307.3 81,310.4 83,311.3 85,312.4 87,314.3 89,316.6 91,318.6 93,321.4 95,323.9 97,326.6 99,326.5 101,325.5 103,323.6 105,320.8 107,317.3 109,315.4 111,314.1 113,312.8 115,311.7 117,311.1 119,311.0 121,309.0 123,306.2 125,302.0 127,297.8 129,293.2 131,287.7 133,281.5 135,275.0 137,271.3 139,268.8 141,267.2 143,264.9 145,262.4 147,261.5 149,261.8 151,263.0 153,264.5 155,266.8 157,269.3 159,273.2 161,277.4 163,281.7 165,286.6 167,292.4 169,293.9 171,293.4 173,291.4 175,287.4 177,286.2 179,286.3 181,286.7 183,287.4 185,289.0 187,289.1 189,289.2 191,289.5 193,290.4 195,290.7 197,291.6 199,293.8 201,297.3 203,301.4 205,306.0 207,309.0 209,311.8 211,313.8 213,315.5 215,317.1 217,317.6 219,319.4 221,321.8 223,324.6 225,328.3 227,332.1 229,335.9 231,340.1 233,345.4 235,350.1 237,354.9 239,360.3 241,363.8 243,366.5 245,368.1 247,370.7 249,373.8 251,376.8 253,379.5 255,383.0 257,383.5 259,382.5 261,382.6 263,382.8 265,382.6 267,382.2 269,381.6 271,380.3 273,379.1 275,377.2 277,375.3 279,370.6 281,368.9 283,366.8 285,364.2 287,361.8 289,360.5 291,359.9 293,360.1 295,360.8 297,363.1 299,365.5 301,364.6 303,362.2 305,362.4 307,362.8 309,364.4 311,366.7 313,369.0 315,370.6 317,372.0 319,373.0 321,375.5 323,378.4 325,381.4 327,384.9 329,388.9 331,391.9 333,395.0 335,398.0 337,400.9 339,403.6 341,406.8 343,409.5 345,412.6 347,416.1 349,419.4 351,422.4 353,425.6 355,428.7 357,431.1 359,433.5 361,439.4 363,446.5 365,451.2 367,455.5 369,458.8 371,462.4 373,466.5 375,470.6 377,474.9 379,477.6 381,479.7 383,481.4 385,483.8 387,486.7 389,489.4 391,493.0 393,496.5 395,500.3 397,502.4 399,503.6 401,503.7 403,503.3 405,503.6 407,504.7 409,505.9 411,506.8 413,508.7 415,510.2 417,512.2 419,514.1 421,516.6 423,519.2 425,520.2 427,520.8 429,521.4 431,522.0 433,522.6 435,523.1 437,523.9 439,523.9 441,524.7 443,525.4 445,526.6 447,527.6 449,528.5 451,528.5 453,527.7 455,526.9 457,527.1 459,527.8 461,528.7 463,529.4 465,529.8 467,530.3 469,532.2 471,534.2 473,534.8 475,534.9 477,535.8 479,536.8 481,539.2 483,542.7 485,547.8 487,553.0 489,559.4 491,570.5 493,580.7 495,591.6 497,600.9 499,608.7 501,616.8 503,624.4 505,630.0 507,634.3 509,639.1 511,643.8 513,648.5 515,653.2 517,658.9 519,665.1 521,671.5 523,677.6 525,683.3 527,689.2 529,695.6 531,702.0 533,706.3 535,709.7 537,712.5 539,714.6 541,716.2 543,717.1 545,717.3 547,717.1 549,717.5 551,718.6 553,719.9 555,720.7 557,722.1 559,723.2 561,725.1 563,727.1 565,728.8 567,731.1 569,733.0 571,735.0 573,737.1 575,738.8 577,740.3 579,741.6 581,742.6 583,744.8 585,747.2 587,749.5 589,751.8 591,753.2 593,754.1 595,754.2 597,753.5 599,752.8 601,752.2 603,750.4 605,748.9 607,747.0 609,746.1 611,746.0 613,745.0 615,744.5 617,744.2 619,743.6 621,742.7 623,741.7 625,740.7 627,739.7 629,739.6 631,739.1 633,738.6 635,738.0 637,737.6 639,737.5 641,737.2 643,737.8 645,739.0 647,740.7 649,741.6 651,742.7 653,743.5 655,743.6 657,744.7 659,746.0 661,747.6 663,749.4 665,751.0 667,752.8 669,755.1 671,757.3 673,760.3 675,763.1 677,765.7 679,767.6 681,769.1 683,770.4 685,771.7 687,772.2 689,772.5 691,773.2 693,773.6 695,774.0 697,774.3 699,774.8 701,775.8 703,776.4 705,777.3 707,777.4 709,777.2 711,777.2 713,776.9 715,775.6 717,774.4 719,773.3 721,771.8 723,769.4 725,766.9 727,763.6 729,761.2 731,757.8 733,756.2 735,755.2 737,753.4 739,751.6 741,749.5 743,747.6 745,745.5 747,744.3 749,742.9 751,741.8 753,739.0 755,735.5 757,731.1 759,725.4 761,719.1 763,715.0 765,712.0 767,709.3 769,707.2 771,705.4 773,703.2 775,701.7 777,696.7 779,689.8 781,685.9 783,683.0 785,680.3 787,678.7 789,677.4 791,676.7 793,677.0 795,677.7 797,679.3 799,680.9 801,682.9 803,681.6 805,679.1 807,675.6 809,672.9 811,669.3 813,666.1 815,662.5 817,658.9 819,656.0 821,652.6 823,650.1 825,647.4 827,645.3 829,642.9 831,641.1 833,637.8 835,636.2 837,635.3 839,634.6 841,634.3 843,634.5 845,635.0 847,635.2 849,636.0 851,637.1 853,637.9 855,639.2 857,639.3 859,639.8 861,639.7 863,639.7 865,640.0 867,640.0 869,640.0 871,639.6 873,639.3 875,639.0 877,638.9 879,639.3 881,639.4 883,639.7 885,639.6 887,639.6 889,639.7 891,640.1 893,640.5 895,640.9 897,643.4 899,646.7 901,648.2 903,649.7 905,650.4 907,651.1 909,654.6 911,657.7 913,661.5 915,665.5 917,670.5 919,675.5 921,681.5 923,688.1 925,693.4 927,697.8 929,701.4 931,704.2 933,708.7 935,713.3 937,717.9 939,722.5 941,727.5 943,731.7 945,735.5 947,738.8 949,741.7 951,743.9 953,746.8 955,749.5 957,752.4 959,755.3 961,758.0 963,760.5 965,763.5 967,766.3 969,768.7 971,770.6 973,773.2 975,775.9 977,778.7 979,781.0 981,783.3 983,785.6 985,788.2 987,790.3 989,793.2 991,796.2 993,799.7 995,803.0 997,807.7 999,812.7 1001,818.2 1003,822.5 1005,826.6 1007,829.6 1009,832.9 1011,835.9 1013,838.3 1015,840.6 1017,842.3 1019,844.0 1021,845.1 1023,845.9 1025,847.2 1027,848.5 1029,849.3 1031,850.0 1033,850.2 1035,850.1 1037,848.6 1039,846.9 1041,843.6 1043,840.4 1045,836.3 1047,832.4 1049,828.3 1051,825.1 1053,822.5 1055,820.9 1057,819.3 1059,817.3 1061,815.5 1063,813.6 1065,812.6 1067,811.2 1069,810.4 1071,809.5 1073,808.3 1075,807.7 1077,807.9 1079,808.1 1081,808.7 1083,809.0 1085,810.2 1087,811.1 1089,812.0 1091,813.4 1093,814.4 1095,815.6 1097,815.8 1099,815.6 1101,816.6 1103,816.9 1105,817.2 1107,817.2 1109,817.5 1111,818.5 1113,819.1 1115,818.6 1117,817.7 1119,816.9 1121,814.8 1123,812.4 1125,809.4 1127,805.9 1129,801.7 1131,797.5 1133,793.1 1135,788.0 1137,782.3 1139,776.3 1141,770.3 1143,765.1 1145,760.3 1147,755.7 1149,751.3 1151,747.9 1153,743.8 1155,739.6 1157,735.4 1159,731.4 1161,727.9 1163,724.4 1165,722.4 1167,720.4 1169,718.9 1171,717.7 1173,717.3 1175,716.4 1177,715.9 1179,715.8 1181,715.6 1183,715.8 1185,716.0 1187,716.3 1189,716.9 1191,717.7 1193,719.0 1195,720.3 1197,721.6 1199,723.9 1201,726.2 1203,728.6 1205,731.1 1207,734.4 1209,737.0 1211,739.5 1213,742.5 1215,745.6 1217,749.1 1219,752.9 1221,756.8 1223,760.8 1225,765.3 1227,770.3 1229,775.6 1231,780.9 1233,786.9 1235,793.0 1237,799.4 1239,805.8 1241,811.2 1243,816.0 1245,821.0 1247,824.9 1249,829.1 1251,832.6 1253,836.0 1255,838.7 1257,840.7 1259,842.3 1261,843.8 1263,845.2 1265,845.8 1267,845.9 1269,845.4 1271,844.7 1273,843.9 1275,842.1 1277,840.3 1279,839.7 1281,838.9 1283,838.0 1285,838.1 1287,838.3 1289,839.0 1291,840.5 1293,842.4 1295,843.2 1297,844.9 1299,847.0 1301,848.5 1303,850.3 1305,852.5 1307,854.2 1309,856.2 1311,858.1 1313,859.5 1315,861.6 1317,863.0 1319,864.4 1321,865.9 1323,867.0 1325,867.7 1327,868.5 1329,869.2 1331,869.5 1333,868.9 1335,868.2 1337,867.0 1339,866.3 1341,865.9 1343,865.5 1345,865.2 1347,865.2 1349,865.4 1351,865.8 1353,865.6 1355,865.5 1357,865.0 1359,864.0 1361,862.8 1363,862.0 1365,861.6 1367,861.3 1369,860.6 1371,860.0 1373,858.4 1375,856.9 1377,854.4 1379,852.1 1381,849.3 1383,846.0 1385,842.5 1387,840.6 1389,838.9 1391,837.5 1393,836.9 1395,835.9 1397,835.0 1399,835.2 1401,834.8 1403,834.5 1405,834.6 1407,835.1 1409,836.0 1411,837.2 1413,838.5 1415,839.7 1417,840.0 1419,840.6 1421,841.3 1423,841.7 1425,841.6 1427,841.6 1429,840.6 1431,839.2 1433,837.2 1435,835.0 1437,832.7 1439,830.0 1441,827.3 1443,825.5 1445,823.6 1447,821.9 1449,820.4 1451,818.6 1453,816.7 1455,815.2 1457,814.4 1459,813.9 1461,813.7 1463,813.5 1465,813.2 1467,813.0 1469,813.5 1471,813.9 1473,813.9 1475,814.0 1477,814.2 1479,814.5 1481,815.2 1483,815.8 1485,816.4 1487,817.1 1489,818.8 1491,820.8 1493,823.2 1495,825.9 1497,827.1 1499,828.4 1501,830.0 1503,830.7 1505,831.8 1507,833.3 1509,834.5 1511,835.7 1513,837.4 1515,838.8 1517,840.3 1519,841.5 1521,842.9 1523,844.4 1525,845.9 1527,847.6 1529,849.2 1531,850.1 1533,851.0 1535,851.2 1537,851.7 1539,852.6 1541,853.1 1543,853.7 1545,854.4 1547,855.0 1549,855.9 1551,856.9 1553,857.3 1555,858.0 1557,858.8 1559,859.5 1561,860.1 1563,860.3 1565,859.1 1567,857.3 1569,855.4 1571,853.4 1573,851.9 1575,850.5 1577,849.0 1579,846.9 1581,845.4 1583,844.0 1585,843.1 1587,841.7 1589,839.4 1591,837.1 1593,834.8 1595,831.9 1597,828.9 1599,826.6 1601,824.9 1603,823.0 1605,821.8 1607,820.5 1609,818.7 1611,817.1 1613,814.6 1615,812.0 1617,811.0 1619,810.1 1621,808.2 1623,806.1 1625,803.9 1627,801.0 1629,798.2 1631,795.4 1633,793.5 1635,790.9 1637,789.4 1639,787.9 1641,785.1 1643,782.0 1645,779.2 1647,777.0 1649,775.2 1651,773.9 1653,772.5 1655,771.4 1657,770.0 1659,768.5 1661,768.0 1663,767.6 1665,767.1 1667,766.7 1669,767.1 1671,767.2 1673,767.1 1675,766.5 1677,766.3 1679,765.4 1681,764.3 1683,762.8 1685,761.4 1687,760.0 1689,758.7 1691,757.8 1693,757.3 1695,756.6 1697,755.8 1699,755.2 1701,754.6 1703,754.5 1705,754.0 1707,753.9 1709,754.0 1711,752.3 1713,750.3 1715,747.8 1717,744.7 1719,740.3 1721,735.2 1723,729.6 1725,723.3 1727,718.0 1729,713.2 1731,708.9 1733,707.5 1735,706.4 1737,705.7 1739,705.0 1741,705.0 1743,704.9 1745,704.9 1747,705.9 1749,707.7 1751,709.6 1753,711.3 1755,714.3 1757,716.9 1759,718.8 1761,720.4 1763,721.6 1765,722.7 1767,724.3 1769,726.0 1771,727.8 1773,730.0 1775,732.0 1777,734.5 1779,737.5 1781,739.6 1783,741.2 1785,742.6 1787,743.8 1789,744.8 1791,746.2 1793,747.1 1795,748.1 1797,749.5 1799,751.0 1801,752.5 1803,752.9 1805,753.1 1807,752.1 1809,751.9 1811,751.2 1813,750.8 1815,750.2 1817,750.0 1819,749.3 1821,749.0 1823,748.5 1825,746.7 1827,744.5 1829,741.7 1831,738.2"/><polyline stroke="#0000ff" points="65,293.0 67,293.5 69,294.8 71,296.6 73,298.6 75,300.5 77,302.7 79,305.4 81,308.1 83,309.0 85,310.1 87,311.9 89,314.0 91,315.9 93,318.4 95,320.7 97,323.3 99,323.3 101,322.7 103,321.2 105,318.9 107,316.0 109,314.4 111,313.4 113,312.3 115,311.3 117,310.9 119,310.8 121,309.1 123,306.7 125,303.0 127,299.3 129,295.3 131,290.4 133,285.0 135,279.2 137,275.7 139,273.4 141,271.7 143,269.5 145,267.0 147,266.0 149,266.0 151,266.8 153,267.9 155,269.7 157,271.7 159,275.0 161,278.4 163,282.1 165,286.3 167,291.3 169,292.7 171,292.3 173,290.6 175,287.2 177,286.2 179,286.3 181,286.6 183,287.3 185,288.6 187,288.7 189,288.8 191,289.2 193,289.9 195,290.2 197,291.0 199,293.0 201,296.0 203,299.6 205,303.6 207,306.4 209,308.9 211,310.8 213,312.4 215,313.9 217,314.6 219,316.3 221,318.6 223,321.1 225,324.5 227,328.0 229,331.5 231,335.3 233,340.2 235,344.5 237,349.0 239,353.9 241,357.3 243,360.0 245,361.8 247,364.3 249,367.3 251,370.3 253,373.0 255,376.4 257,377.2 259,376.6 261,377.1 263,377.5 265,377.7 267,377.6 269,377.3 271,376.4 273,375.6 275,374.2 277,372.8 279,368.8 281,367.4 283,365.7 285,363.6 287,361.5 289,360.4 291,359.9 293,360.1 295,360.7 297,362.6 299,364.7 301,364.1 303,362.0 305,362.1 307,362.5 309,363.9 311,365.9 313,367.9 315,369.4 317,370.7 319,371.6 321,373.8 323,376.4 325,379.1 327,382.2 329,385.8 331,388.6 333,391.4 335,394.2 337,397.0 339,399.5 341,402.5 343,405.0 345,407.9 347,411.2 349,414.3 351,417.2 353,420.2 355,423.2 357,425.6 359,427.9 361,433.4 363,439.8 365,444.3 367,448.3 369,451.6 371,455.0 373,459.0 375,463.0 377,467.1 379,469.8 381,472.1 383,474.0 385,476.5 387,479.3 389,482.0 391,485.6 393,489.0 395,492.7 397,494.9 399,496.4 401,496.9 403,496.9 405,497.5 407,498.8 409,500.1 411,501.2 413,503.2 415,504.8 417,506.8 419,508.8 421,511.2 423,513.7 425,514.9 427,515.7 429,516.5 431,517.3 433,518.1 435,518.8 437,519.7 439,520.0 441,520.8 443,521.6 445,522.9 447,523.9 449,525.0 451,525.2 453,524.7 455,524.1 457,524.4 459,525.2 461,526.1 463,526.9 465,527.4 467,527.9 469,529.6 471,531.6 473,532.3 475,532.4 477,533.4 479,534.3 481,536.6 483,539.7 485,544.3 487,549.0 489,554.7 491,564.5 493,573.6 495,583.4 497,591.9 499,599.1 501,606.6 503,613.7 505,619.1 507,623.5 509,628.1 511,632.8 513,637.5 515,642.1 517,647.6 519,653.6 521,659.8 523,665.6 525,671.3 527,677.0 529,683.2 531,689.4 533,693.8 535,697.4 537,700.5 539,703.0 541,705.0 543,706.4 545,707.1 547,707.6 549,708.5 551,709.9 553,711.5 555,712.6 557,714.3 559,715.7 561,717.7 563,719.8 565,721.8 567,724.1 569,726.1 571,728.2 573,730.4 575,732.3 577,733.9 579,735.4 581,736.6 583,738.8 585,741.3 587,743.6 589,745.9 591,747.4 593,748.5 595,748.9 597,748.6 599,748.2 601,748.0 603,746.6 605,745.6 607,744.1 609,743.5 611,743.6 613,742.9 615,742.5 617,742.4 619,742.0 621,741.3 623,740.5 625,739.7 627,738.9 629,738.8 631,738.5 633,738.0 635,737.6 637,737.3 639,737.2 641,737.0 643,737.5 645,738.5 647,740.0 649,740.9 651,741.8 653,742.5 655,742.7 657,743.7 659,744.8 661,746.3 663,747.9 665,749.4 667,751.0 669,753.1 671,755.1 673,757.8 675,760.3 677,762.7 679,764.5 681,766.0 683,767.3 685,768.6 687,769.2 689,769.6 691,770.4 693,770.9 695,771.4 697,771.8 699,772.4 701,773.3 703,774.0 705,775.0 707,775.2 709,775.1 711,775.2 713,775.1 715,774.1 717,773.1 719,772.2 721,771.0 723,769.0 725,766.8 727,764.0 729,761.9 731,759.0 733,757.5 735,756.5 737,755.0 739,753.3 741,751.4 743,749.6 745,747.7 747,746.6 749,745.3 751,744.1 753,741.6 755,738.5 757,734.5 759,729.4 761,723.8 763,720.0 765,717.1 767,714.5 769,712.5 771,710.6 773,708.4 775,706.8 777,702.2 779,696.0 781,692.3 783,689.4 785,686.7 787,685.0 789,683.6 791,682.6 793,682.5 795,682.8 797,683.9 799,685.0 801,686.5 803,685.2 805,682.8 807,679.6 809,677.1 811,673.8 813,670.7 815,667.4 817,664.1 819,661.2 821,658.0 823,655.5 825,652.9 827,650.8 829,648.4 831,646.6 833,643.5 835,641.8 837,640.6 839,639.8 841,639.2 843,639.1 845,639.3 847,639.2 849,639.7 851,640.4 853,640.9 855,641.9 857,641.8 859,642.1 861,641.9 863,641.8 865,642.0 867,641.8 869,641.7 871,641.3 873,641.0 875,640.5 877,640.4 879,640.6 881,640.7 883,640.9 885,640.7 887,640.6 889,640.7 891,641.0 893,641.3 895,641.5 897,643.7 899,646.5 901,647.8 903,649.2 905,649.8 907,650.4 909,653.4 911,656.2 913,659.6 915,663.1 917,667.6 919,672.0 921,677.3 923,683.3 925,688.1 927,692.2 929,695.6 931,698.4 933,702.5 935,706.8 937,711.2 939,715.5 941,720.2 943,724.2 945,727.9 947,731.2 949,734.1 951,736.4 953,739.3 955,742.0 957,744.9 959,747.9 961,750.6 963,753.2 965,756.2 967,759.0 969,761.5 971,763.5 973,766.1 975,768.8 977,771.7 979,774.0 981,776.4 983,778.8 985,781.4 987,783.6 989,786.5 991,789.4 993,792.8 995,796.0 997,800.4 999,805.1 1001,810.3 1003,814.5 1005,818.4 1007,821.4 1009,824.8 1011,827.8 1013,830.3 1015,832.8 1017,834.7 1019,836.5 1021,837.9 1023,839.0 1025,840.5 1027,842.0 1029,843.0 1031,844.0 1033,844.5 1035,844.7 1037,843.8 1039,842.6 1041,839.9 1043,837.4 1045,834.0 1047,830.8 1049,827.3 1051,824.6 1053,822.5 1055,821.1 1057,819.7 1059,817.9 1061,816.3 1063,814.6 1065,813.7 1067,812.5 1069,811.7 1071,810.8 1073,809.7 1075,809.2 1077,809.2 1079,809.4 1081,809.8 1083,810.0 1085,810.9 1087,811.7 1089,812.4 1091,813.7 1093,814.5 1095,815.5 1097,815.7 1099,815.5 1101,816.3 1103,816.7 1105,816.9 1107,817.0 1109,817.2 1111,818.1 1113,818.6 1115,818.2 1117,817.5 1119,816.8 1121,815.0 1123,812.9 1125,810.3 1127,807.3 1129,803.5 1131,799.8 1133,795.9 1135,791.4 1137,786.3 1139,780.8 1141,775.5 1143,770.7 1145,766.2 1147,761.9 1149,757.8 1151,754.5 1153,750.6 1155,746.6 1157,742.6 1159,738.8 1161,735.3 1163,731.9 1165,729.8 1167,727.7 1169,726.0 1171,724.5 1173,723.8 1175,722.7 1177,721.9 1179,721.4 1181,721.0 1183,720.9 1185,720.7 1187,720.8 1189,721.0 1191,721.5 1193,722.4 1195,723.3 1197,724.3 1199,726.1 1201,727.9 1203,730.0 1205,732.0 1207,734.8 1209,737.0 1211,739.2 1213,741.8 1215,744.5 1217,747.6 1219,750.9 1221,754.4 1223,758.0 1225,762.0 1227,766.5 1229,771.3 1231,776.1 1233,781.5 1235,787.1 1237,792.9 1239,798.8 1241,803.8 1243,808.3 1245,813.1 1247,816.9 1249,821.0 1251,824.4 1253,827.8 1255,830.5 1257,832.8 1259,834.6 1261,836.3 1263,837.9 1265,838.8 1267,839.3 1269,839.3 1271,839.0 1273,838.6 1275,837.4 1277,836.1 1279,835.8 1281,835.3 1283,834.7 1285,835.0 1287,835.3 1289,836.1 1291,837.6 1293,839.4 1295,840.3 1297,841.8 1299,843.8 1301,845.3 1303,847.0 1305,849.1 1307,850.8 1309,852.7 1311,854.5 1313,855.9 1315,857.9 1317,859.3 1319,860.7 1321,862.2 1323,863.4 1325,864.2 1327,865.1 1329,865.8 1331,866.3 1333,866.0 1335,865.5 1337,864.6 1339,864.2 1341,864.0 1343,863.7 1345,863.5 1347,863.7 1349,863.9 1351,864.4 1353,864.2 1355,864.3 1357,863.9 1359,863.0 1361,862.1 1363,861.4 1365,861.1 1367,860.9 1369,860.3 1371,859.8 1373,858.4 1375,857.1 1377,854.9 1379,853.0 1381,850.5 1383,847.6 1385,844.5 1387,842.7 1389,841.1 1391,839.8 1393,839.2 1395,838.2 1397,837.3 1399,837.4 1401,836.9 1403,836.5 1405,836.5 1407,836.8 1409,837.5 1411,838.4 1413,839.5 1415,840.5 1417,840.7 1419,841.2 1421,841.8 1423,842.1 1425,842.0 1427,841.9 1429,841.0 1431,839.8 1433,838.0 1435,836.2 1437,834.1 1439,831.7 1441,829.2 1443,827.6 1445,825.9 1447,824.2 1449,822.8 1451,821.1 1453,819.4 1455,817.9 1457,817.1 1459,816.5 1461,816.2 1463,815.8 1465,815.5 1467,815.2 1469,815.5 1471,815.8 1473,815.7 1475,815.6 1477,815.7 1479,815.9 1481,816.4 1483,816.9 1485,817.3 1487,817.8 1489,819.3 1491,821.0 1493,823.1 1495,825.4 1497,826.4 1499,827.6 1501,829.0 1503,829.7 1505,830.7 1507,832.0 1509,833.2 1511,834.2 1513,835.8 1515,837.1 1517,838.5 1519,839.6 1521,841.0 1523,842.3 1525,843.7 1527,845.3 1529,846.8 1531,847.7 1533,848.6 1535,848.9 1537,849.5 1539,850.4 1541,851.0 1543,851.6 1545,852.3 1547,852.9 1549,853.8 1551,854.8 1553,855.3 1555,855.9 1557,856.7 1559,857.5 1561,858.1 1563,858.4 1565,857.5 1567,856.0 1569,854.4 1571,852.8 1573,851.5 1575,850.3 1577,849.1 1579,847.3 1581,845.9 1583,844.7 1585,843.9 1587,842.6 1589,840.6 1591,838.6 1593,836.5 1595,833.9 1597,831.2 1599,829.1 1601,827.5 1603,825.7 1605,824.5 1607,823.2 1609,821.6 1611,820.0 1613,817.7 1615,815.3 1617,814.3 1619,813.3 1621,811.5 1623,809.5 1625,807.4 1627,804.8 1629,802.1 1631,799.5 1633,797.6 1635,795.1 1637,793.6 1639,792.1 1641,789.5 1643,786.6 1645,783.9 1647,781.7 1649,779.9 1651,778.5 1653,777.0 1655,775.8 1657,774.4 1659,772.9 1661,772.2 1663,771.7 1665,771.0 1667,770.4 1669,770.5 1671,770.5 1673,770.1 1675,769.4 1677,769.2 1679,768.2 1681,767.1 1683,765.7 1685,764.3 1687,762.9 1689,761.7 1691,760.7 1693,760.1 1695,759.3 1697,758.5 1699,757.9 1701,757.1 1703,756.9 1705,756.3 1707,756.2 1709,756.1 1711,754.5 1713,752.7 1715,750.4 1717,747.6 1719,743.7 1721,739.1 1723,734.0 1725,728.4 1727,723.5 1729,719.0 1731,715.0 1733,713.5 1735,712.2 1737,711.3 1739,710.4 1741,710.1 1743,709.7 1745,709.4 1747,710.1 1749,711.4 1751,712.8 1753,714.1 1755,716.5 1757,718.7 1759,720.2 1761,721.5 1763,722.4 1765,723.4 1767,724.7 1769,726.1 1771,727.7 1773,729.6 1775,731.3 1777,733.6 1779,736.2 1781,738.0 1783,739.5 1785,740.8 1787,741.9 1789,742.9 1791,744.2 1793,745.1 1795,746.1 1797,747.4 1799,748.8 1801,750.2 1803,750.7 1805,751.0 1807,750.3 1809,750.2 1811,749.7 1813,749.4 1815,749.0 1817,748.9 1819,748.4 1821,748.1 1823,747.7 1825,746.3 1827,744.4 1829,742.0 1831,738.9"/><polyline stroke="#0000ff" points="65,292.7 67,293.2 69,294.4 71,295.9 73,297.7 75,299.5 77,301.5 79,303.8 81,306.4 83,307.2 85,308.3 87,309.9 89,311.9 91,313.6 93,316.0 95,318.1 97,320.5 99,320.6 101,320.2 103,319.0 105,317.1 107,314.6 109,313.3 111,312.5 113,311.6 115,310.8 117,310.4 119,310.3 121,308.9 123,306.8 125,303.6 127,300.3 129,296.7 131,292.4 133,287.5 135,282.3 137,279.1 139,276.9 141,275.2 143,273.1 145,270.8 147,269.7 149,269.5 151,270.0 153,270.9 155,272.3 157,273.9 159,276.7 161,279.6 163,282.8 165,286.4 167,290.8 169,292.0 171,291.7 173,290.3 175,287.3 177,286.5 179,286.5 181,286.8 183,287.3 185,288.5 187,288.6 189,288.7 191,289.0 193,289.7 195,290.0 197,290.7 199,292.4 201,295.1 203,298.3 205,301.9 207,304.4 209,306.8 211,308.5 213,310.0 215,311.5 217,312.1 219,313.8 221,315.9 223,318.3 225,321.4 227,324.6 229,327.8 231,331.4 233,335.8 235,339.8 237,344.0 239,348.6 241,351.8 243,354.4 245,356.3 247,358.8 249,361.7 251,364.6 253,367.2 255,370.5 257,371.4 259,371.3 261,371.9 263,372.6 265,372.9 267,373.1 269,373.1 271,372.5 273,372.0 275,370.9 277,369.8 279,366.5 281,365.4 283,364.0 285,362.2 287,360.4 289,359.5 291,359.1 293,359.3 295,359.9 297,361.6 299,363.5 301,363.0 303,361.2 305,361.4 307,361.8 309,363.0 311,364.8 313,366.6 315,368.0 317,369.2 319,370.0 321,372.1 323,374.5 325,376.9 327,379.8 329,383.1 331,385.6 333,388.2 335,390.8 337,393.4 339,395.8 341,398.6 343,401.0 345,403.8 347,406.9 349,409.8 351,412.6 353,415.5 355,418.3 357,420.6 359,422.9 361,427.9 363,433.9 365,438.1 367,441.9 369,445.1 371,448.4 373,452.3 375,456.1 377,460.0 379,462.7 381,465.1 383,467.1 385,469.6 387,472.4 389,475.2 391,478.6 393,482.0 395,485.6 397,487.9 399,489.5 401,490.2 403,490.6 405,491.5 407,492.9 409,494.3 411,495.6 413,497.6 415,499.2 417,501.3 419,503.3 421,505.7 423,508.2 425,509.5 427,510.5 429,511.4 431,512.4 433,513.3 435,514.1 437,515.2 439,515.6 441,516.6 443,517.5 445,518.8 447,519.9 449,521.0 451,521.4 453,521.1 455,520.8 457,521.3 459,522.1 461,523.0 463,523.9 465,524.5 467,525.1 469,526.7 471,528.6 473,529.3 475,529.6 477,530.6 479,531.6 481,533.6 483,536.5 485,540.7 487,545.0 489,550.3 491,559.0 493,567.3 495,576.2 497,584.0 499,590.7 501,597.7 503,604.4 505,609.6 507,613.9 509,618.5 511,623.1 513,627.6 515,632.1 517,637.5 519,643.2 521,649.2 523,654.8 525,660.3 527,665.9 529,671.8 531,677.8 533,682.3 535,686.0 537,689.3 539,692.0 541,694.3 543,696.1 545,697.2 547,698.1 549,699.3 551,701.0 553,702.9 555,704.3 557,706.1 559,707.8 561,710.0 563,712.2 565,714.3 567,716.6 569,718.8 571,721.0 573,723.3 575,725.3 577,727.0 579,728.7 581,730.1 583,732.3 585,734.8 587,737.1 589,739.5 591,741.1 593,742.4 595,743.0 597,743.0 599,743.0 601,743.0 603,742.1 605,741.4 607,740.3 609,740.0 611,740.2 613,739.7 615,739.6 617,739.6 619,739.4 621,738.9 623,738.3 625,737.8 627,737.1 629,737.2 631,736.9 633,736.6 635,736.3 637,736.1 639,736.0 641,735.9 643,736.4 645,737.4 647,738.7 649,739.6 651,740.4 653,741.2 655,741.4 657,742.3 659,743.4 661,744.7 663,746.2 665,747.6 667,749.1 669,751.1 671,752.9 673,755.4 675,757.7 677,760.0 679,761.7 681,763.1 683,764.4 685,765.6 687,766.3 689,766.9 691,767.7 693,768.3 695,768.8 697,769.3 699,769.9 701,770.9 703,771.6 705,772.5 707,772.8 709,772.9 711,773.1 713,773.1 715,772.3 717,771.5 719,770.8 721,769.8 723,768.1 725,766.3 727,763.8 729,762.0 731,759.4 733,758.1 735,757.2 737,755.8 739,754.3 741,752.6 743,751.0 745,749.2 747,748.2 749,746.9 751,745.9 753,743.5 755,740.7 757,737.1 759,732.5 761,727.4 763,723.9 765,721.2 767,718.7 769,716.7 771,714.8 773,712.7 775,711.1 777,706.8 779,701.2 781,697.7 783,694.9 785,692.3 787,690.5 789,688.9 791,687.8 793,687.5 795,687.5 797,688.3 799,689.0 801,690.1 803,688.8 805,686.6 807,683.5 809,681.1 811,678.0 813,675.1 815,672.0 817,668.8 819,666.1 821,663.1 823,660.6 825,658.1 827,656.0 829,653.7 831,651.8 833,648.8 835,647.0 837,645.8 839,644.8 841,644.1 843,643.7 845,643.6 847,643.4 849,643.6 851,644.0 853,644.3 855,645.0 857,644.8 859,644.9 861,644.5 863,644.3 865,644.4 867,644.1 869,643.9 871,643.4 873,643.0 875,642.6 877,642.4 879,642.5 881,642.4 883,642.5 885,642.3 887,642.1 889,642.1 891,642.3 893,642.5 895,642.7 897,644.5 899,646.9 901,648.1 903,649.2 905,649.8 907,650.3 909,653.0 911,655.4 913,658.4 915,661.6 917,665.6 919,669.6 921,674.4 923,679.7 925,684.2 927,687.9 929,691.1 931,693.8 933,697.6 935,701.6 937,705.7 939,709.8 941,714.2 943,718.0 945,721.6 947,724.7 949,727.6 951,730.0 953,732.9 955,735.5 957,738.4 959,741.3 961,744.0 963,746.6 965,749.6 967,752.3 969,754.9 971,756.9 973,759.6 975,762.3 977,765.1 979,767.5 981,769.9 983,772.3 985,774.9 987,777.1 989,780.0 991,782.9 993,786.2 995,789.3 997,793.5 999,798.0 1001,802.9 1003,806.9 1005,810.7 1007,813.8 1009,817.1 1011,820.1 1013,822.7 1015,825.2 1017,827.2 1019,829.2 1021,830.8 1023,832.1 1025,833.7 1027,835.4 1029,836.6 1031,837.8 1033,838.5 1035,839.0 1037,838.5 1039,837.7 1041,835.6 1043,833.6 1045,830.8 1047,828.1 1049,825.2 1051,822.9 1053,821.1 1055,820.0 1057,818.8 1059,817.3 1061,815.9 1063,814.5 1065,813.7 1067,812.6 1069,811.9 1071,811.1 1073,810.1 1075,809.6 1077,809.6 1079,809.8 1081,810.1 1083,810.2 1085,811.1 1087,811.8 1089,812.4 1091,813.5 1093,814.2 1095,815.1 1097,815.3 1099,815.2 1101,815.9 1103,816.2 1105,816.5 1107,816.5 1109,816.8 1111,817.5 1113,818.0 1115,817.7 1117,817.1 1119,816.5 1121,814.9 1123,813.1 1125,810.8 1127,808.1 1129,804.8 1131,801.5 1133,798.0 1135,793.9 1137,789.3 1139,784.4 1141,779.5 1143,775.1 1145,770.9 1147,766.9 1149,763.1 1151,759.9 1153,756.2 1155,752.5 1157,748.7 1159,745.0 1161,741.7 1163,738.4 1165,736.2 1167,734.0 1169,732.2 1171,730.6 1173,729.7 1175,728.5 1177,727.5 1179,726.8 1181,726.1 1183,725.8 1185,725.4 1187,725.2 1189,725.2 1191,725.4 1193,726.0 1195,726.7 1197,727.4 1199,728.8 1201,730.3 1203,731.9 1205,733.6 1207,736.0 1209,737.9 1211,739.8 1213,742.0 1215,744.4 1217,747.1 1219,750.0 1221,753.1 1223,756.3 1225,760.0 1227,764.0 1229,768.3 1231,772.7 1233,777.6 1235,782.7 1237,788.1 1239,793.4 1241,798.1 1243,802.3 1245,806.8 1247,810.5 1249,814.4 1251,817.7 1253,821.0 1255,823.7 1257,826.0 1259,828.0 1261,829.8 1263,831.5 1265,832.6 1267,833.4 1269,833.6 1271,833.6 1273,833.5 1275,832.7 1277,831.8 1279,831.8 1281,831.5 1283,831.2 1285,831.6 1287,832.1 1289,832.9 1291,834.4 1293,836.1 1295,837.0 1297,838.6 1299,840.5 1301,841.9 1303,843.6 1305,845.6 1307,847.2 1309,849.1 1311,850.8 1313,852.3 1315,854.2 1317,855.6 1319,857.1 1321,858.6 1323,859.7 1325,860.6 1327,861.6 1329,862.4 1331,863.0 1333,862.9 1335,862.6 1337,862.0 1339,861.7 1341,861.7 1343,861.6 1345,861.5 1347,861.7 1349,862.0 1351,862.5 1353,862.5 1355,862.6 1357,862.3 1359,861.7 1361,860.9 1363,860.4 1365,860.1 1367,860.0 1369,859.6 1371,859.1 1373,858.0 1375,856.8 1377,854.9 1379,853.2 1381,851.0 1383,848.5 1385,845.7 1387,844.1 1389,842.6 1391,841.4 1393,840.7 1395,839.8 1397,838.9 1399,838.9 1401,838.4 1403,838.0 1405,837.9 1407,838.1 1409,838.7 1411,839.4 1413,840.3 1415,841.2 1417,841.3 1419,841.7 1421,842.2 1423,842.4 1425,842.3 1427,842.3 1429,841.5 1431,840.4 1433,838.8 1435,837.1 1437,835.3 1439,833.1 1441,830.9 1443,829.3 1445,827.7 1447,826.2 1449,824.9 1451,823.3 1453,821.7 1455,820.3 1457,819.4 1459,818.8 1461,818.4 1463,818.0 1465,817.6 1467,817.2 1469,817.4 1471,817.5 1473,817.3 1475,817.2 1477,817.2 1479,817.3 1481,817.7 1483,818.0 1485,818.4 1487,818.8 1489,820.0 1491,821.5 1493,823.3 1495,825.3 1497,826.2 1499,827.3 1501,828.5 1503,829.1 1505,830.0 1507,831.2 1509,832.3 1511,833.2 1513,834.6 1515,835.9 1517,837.2 1519,838.2 1521,839.5 1523,840.7 1525,842.0 1527,843.5 1529,844.9 1531,845.8 1533,846.7 1535,847.1 1537,847.7 1539,848.5 1541,849.1 1543,849.7 1545,850.5 1547,851.1 1549,852.0 1551,852.9 1553,853.5 1555,854.1 1557,854.9 1559,855.6 1561,856.3 1563,856.6 1565,855.9 1567,854.7 1569,853.4 1571,852.0 1573,850.9 1575,849.9 1577,848.8 1579,847.2 1581,846.1 1583,845.0 1585,844.3 1587,843.1 1589,841.3 1591,839.5 1593,837.6 1595,835.3 1597,832.9 1599,830.9 1601,829.5 1603,827.8 1605,826.6 1607,825.4 1609,823.9 1611,822.3 1613,820.2 1615,818.0 1617,817.0 1619,816.0 1621,814.2 1623,812.4 1625,810.4 1627,807.9 1629,805.4 1631,803.0 1633,801.1 1635,798.8 1637,797.3 1639,795.8 1641,793.3 1643,790.6 1645,788.0 1647,785.9 1649,784.1 1651,782.7 1653,781.2 1655,779.9 1657,778.4 1659,777.0 1661,776.1 1663,775.5 1665,774.7 1667,774.0 1669,774.0 1671,773.7 1673,773.3 1675,772.5 1677,772.1 1679,771.1 1681,770.0 1683,768.6 1685,767.3 1687,765.9 1689,764.7 1691,763.7 1693,763.0 1695,762.2 1697,761.3 1699,760.6 1701,759.9 1703,759.5 1705,758.9 1707,758.6 1709,758.4 1711,756.9 1713,755.2 1715,753.1 1717,750.5 1719,746.9 1721,742.7 1723,738.1 1725,732.9 1727,728.4 1729,724.3 1731,720.5 1733,718.9 1735,717.5 1737,716.4 1739,715.4 1741,714.9 1743,714.3 1745,713.8 1747,714.2 1749,715.1 1751,716.2 1753,717.2 1755,719.1 1757,720.9 1759,722.1 1761,723.2 1763,723.9 1765,724.7 1767,725.7 1769,727.0 1771,728.3 1773,729.9 1775,731.5 1777,733.4 1779,735.7 1781,737.4 1783,738.7 1785,739.8 1787,740.9 1789,741.8 1791,743.0 1793,743.9 1795,744.8 1797,746.0 1799,747.3 1801,748.6 1803,749.1 1805,749.4 1807,748.9 1809,748.9 1811,748.5 1813,748.3 1815,748.0 1817,747.9 1819,747.5 1821,747.4 1823,747.0 1825,745.8 1827,744.2 1829,742.1 1831,739.4"/><polyline stroke="#0000ff" points="65,292.5 67,293.0 69,294.0 71,295.4 73,297.0 75,298.6 77,300.4 79,302.6 81,304.9 83,305.7 85,306.7 87,308.3 89,310.1 91,311.7 93,313.9 95,315.9 97,318.1 99,318.3 101,318.1 103,317.1 105,315.5 107,313.3 109,312.2 111,311.5 113,310.7 115,310.1 117,309.8 119,309.7 121,308.5 123,306.6 125,303.8 127,300.8 129,297.6 131,293.7 133,289.3 135,284.6 137,281.6 139,279.5 141,278.0 143,275.9 145,273.8 147,272.6 149,272.4 151,272.7 153,273.3 155,274.5 157,275.8 159,278.2 161,280.8 163,283.5 165,286.8 167,290.7 169,291.8 171,291.5 173,290.2 175,287.6 177,286.8 179,286.8 181,287.1 183,287.6 185,288.6 187,288.7 189,288.8 191,289.0 193,289.6 195,289.9 197,290.5 199,292.1 201,294.4 203,297.3 205,300.6 207,302.9 209,305.1 211,306.7 213,308.1 215,309.5 217,310.2 219,311.7 221,313.7 223,315.9 225,318.8 227,321.8 229,324.8 231,328.1 233,332.2 235,335.9 237,339.8 239,344.1 241,347.1 243,349.7 245,351.5 247,353.9 249,356.8 251,359.6 253,362.1 255,365.2 257,366.3 259,366.4 261,367.2 263,368.0 265,368.5 267,368.8 269,369.0 271,368.7 273,368.4 275,367.5 277,366.7 279,363.9 281,363.0 283,361.9 285,360.4 287,358.9 289,358.2 291,357.9 293,358.1 295,358.7 297,360.3 299,362.0 301,361.6 303,360.1 305,360.3 307,360.7 309,361.8 311,363.5 313,365.2 315,366.5 317,367.6 319,368.4 321,370.3 323,372.5 325,374.7 327,377.4 329,380.4 331,382.8 333,385.3 335,387.7 337,390.2 339,392.4 341,395.1 343,397.4 345,400.0 347,402.9 349,405.7 351,408.4 353,411.1 355,413.8 357,416.1 359,418.4 361,423.0 363,428.5 365,432.5 367,436.1 369,439.2 371,442.5 373,446.2 375,449.8 377,453.6 379,456.3 381,458.7 383,460.7 385,463.3 387,466.1 389,468.8 391,472.1 393,475.4 395,478.9 397,481.2 399,482.9 401,483.9 403,484.5 405,485.6 407,487.0 409,488.6 411,490.0 413,492.0 415,493.7 417,495.8 419,497.8 421,500.2 423,502.6 425,504.1 427,505.2 429,506.3 431,507.3 433,508.3 435,509.3 437,510.5 439,511.0 441,512.1 443,513.1 445,514.5 447,515.7 449,516.8 451,517.3 453,517.3 455,517.1 457,517.7 459,518.6 461,519.6 463,520.5 465,521.2 467,521.9 469,523.5 471,525.2 473,526.1 475,526.5 477,527.5 479,528.5 481,530.5 483,533.2 485,537.0 487,541.0 489,545.9 491,553.9 493,561.5 495,569.7 497,576.9 499,583.2 501,589.8 503,596.1 505,601.1 507,605.3 509,609.7 511,614.2 513,618.6 515,623.1 517,628.2 519,633.8 521,639.5 523,644.9 525,650.2 527,655.6 529,661.4 531,667.2 533,671.6 535,675.4 537,678.8 539,681.7 541,684.2 543,686.2 545,687.6 547,688.8 549,690.3 551,692.2 553,694.3 555,695.9 557,697.9 559,699.7 561,702.0 563,704.4 565,706.5 567,709.0 569,711.3 571,713.6 573,715.9 575,718.0 577,719.9 579,721.7 581,723.2 583,725.5 585,728.0 587,730.4 589,732.8 591,734.5 593,736.0 595,736.8 597,737.1 599,737.3 601,737.6 603,737.0 605,736.6 607,735.8 609,735.7 611,736.1 613,735.9 615,735.9 617,736.1 619,736.0 621,735.8 623,735.4 625,735.0 627,734.6 629,734.7 631,734.6 633,734.4 635,734.2 637,734.1 639,734.2 641,734.1 643,734.7 645,735.6 647,736.9 649,737.7 651,738.6 653,739.3 655,739.6 657,740.5 659,741.5 661,742.8 663,744.2 665,745.5 667,747.0 669,748.8 671,750.5 673,752.9 675,755.0 677,757.2 679,758.8 681,760.2 683,761.5 685,762.7 687,763.5 689,764.0 691,764.9 693,765.5 695,766.1 697,766.7 699,767.4 701,768.3 703,769.1 705,770.0 707,770.4 709,770.6 711,770.9 713,770.9 715,770.3 717,769.7 719,769.2 721,768.4 723,766.9 725,765.3 727,763.2 729,761.5 731,759.3 733,758.1 735,757.3 737,756.1 739,754.7 741,753.1 743,751.7 745,750.1 747,749.2 749,748.0 751,747.0 753,744.9 755,742.3 757,739.0 759,734.8 761,730.2 763,726.9 765,724.4 767,722.1 769,720.1 771,718.3 773,716.3 775,714.7 777,710.7 779,705.5 781,702.2 783,699.5 785,697.0 787,695.2 789,693.6 791,692.4 793,691.9 795,691.7 797,692.2 799,692.7 801,693.6 803,692.2 805,690.1 807,687.2 809,684.9 811,682.0 813,679.2 815,676.3 817,673.3 819,670.6 821,667.7 823,665.4 825,662.9 827,660.8 829,658.5 831,656.6 833,653.8 835,652.0 837,650.6 839,649.5 841,648.7 843,648.2 845,647.9 847,647.5 849,647.5 851,647.7 853,647.8 855,648.3 857,647.9 859,647.9 861,647.5 863,647.2 865,647.1 867,646.7 869,646.4 871,645.9 873,645.4 875,644.9 877,644.6 879,644.6 881,644.5 883,644.5 885,644.2 887,643.9 889,643.8 891,644.0 893,644.1 895,644.1 897,645.7 899,647.8 901,648.8 903,649.8 905,650.3 907,650.7 909,653.1 911,655.3 913,657.9 915,660.8 917,664.4 919,668.0 921,672.3 923,677.2 925,681.3 927,684.7 929,687.7 931,690.2 933,693.8 935,697.6 937,701.4 939,705.2 941,709.3 943,712.9 945,716.3 947,719.4 949,722.2 951,724.5 953,727.3 955,729.9 957,732.7 959,735.6 961,738.2 963,740.8 965,743.7 967,746.4 969,748.9 971,751.0 973,753.6 975,756.3 977,759.1 979,761.5 981,763.9 983,766.3 985,768.9 987,771.1 989,773.9 991,776.8 993,780.0 995,783.0 997,787.1 999,791.3 1001,796.0 1003,799.8 1005,803.6 1007,806.6 1009,809.9 1011,812.8 1013,815.5 1015,818.0 1017,820.2 1019,822.2 1021,823.9 1023,825.4 1025,827.2 1027,828.9 1029,830.3 1031,831.6 1033,832.5 1035,833.2 1037,833.0 1039,832.5 1041,830.9 1043,829.3 1045,827.0 1047,824.8 1049,822.3 1051,820.4 1053,818.9 1055,818.0 1057,817.0 1059,815.8 1061,814.6 1063,813.4 1065,812.7 1067,811.8 1069,811.2 1071,810.6 1073,809.7 1075,809.3 1077,809.3 1079,809.4 1081,809.7 1083,809.9 1085,810.6 1087,811.3 1089,811.8 1091,812.8 1093,813.5 1095,814.3 1097,814.6 1099,814.5 1101,815.2 1103,815.5 1105,815.7 1107,815.8 1109,816.0 1111,816.8 1113,817.3 1115,817.0 1117,816.5 1119,816.0 1121,814.6 1123,813.0 1125,811.0 1127,808.5 1129,805.6 1131,802.6 1133,799.4 1135,795.7 1137,791.5 1139,787.0 1141,782.6 1143,778.5 1145,774.7 1147,770.9 1149,767.3 1151,764.3 1153,760.9 1155,757.3 1157,753.7 1159,750.2 1161,747.0 1163,743.9 1165,741.6 1167,739.5 1169,737.6 1171,736.0 1173,734.9 1175,733.6 1177,732.5 1179,731.7 1181,730.9 1183,730.4 1185,729.8 1187,729.5 1189,729.3 1191,729.3 1193,729.6 1195,730.0 1197,730.5 1199,731.6 1201,732.9 1203,734.2 1205,735.7 1207,737.7 1209,739.3 1211,740.9 1213,742.8 1215,744.9 1217,747.3 1219,749.9 1221,752.7 1223,755.6 1225,758.8 1227,762.5 1229,766.4 1231,770.4 1233,774.8 1235,779.5 1237,784.4 1239,789.4 1241,793.7 1243,797.7 1245,801.9 1247,805.4 1249,809.0 1251,812.3 1253,815.4 1255,818.1 1257,820.4 1259,822.4 1261,824.2 1263,826.0 1265,827.3 1267,828.1 1269,828.6 1271,828.8 1273,828.9 1275,828.4 1277,827.8 1279,827.9 1281,827.9 1283,827.7 1285,828.3 1287,828.8 1289,829.7 1291,831.1 1293,832.8 1295,833.8 1297,835.3 1299,837.1 1301,838.6 1303,840.2 1305,842.2 1307,843.8 1309,845.6 1311,847.3 1313,848.7 1315,850.6 1317,852.0 1319,853.4 1321,854.9 1323,856.1 1325,857.1 1327,858.1 1329,859.0 1331,859.7 1333,859.7 1335,859.6 1337,859.2 1339,859.1 1341,859.1 1343,859.1 1345,859.2 1347,859.5 1349,859.8 1351,860.4 1353,860.4 1355,860.6 1357,860.5 1359,860.0 1361,859.4 1363,859.0 1365,858.8 1367,858.8 1369,858.4 1371,858.1 1373,857.1 1375,856.1 1377,854.5 1379,852.9 1381,851.0 1383,848.7 1385,846.2 1387,844.8 1389,843.4 1391,842.3 1393,841.7 1395,840.8 1397,840.0 1399,839.9 1401,839.5 1403,839.1 1405,838.9 1407,839.1 1409,839.5 1411,840.1 1413,840.9 1415,841.6 1417,841.7 1419,842.1 1421,842.5 1423,842.7 1425,842.6 1427,842.5 1429,841.8 1431,840.8 1433,839.4 1435,837.9 1437,836.2 1439,834.2 1441,832.2 1443,830.7 1445,829.3 1447,827.8 1449,826.6 1451,825.1 1453,823.6 1455,822.2 1457,821.4 1459,820.8 1461,820.3 1463,819.9 1465,819.4 1467,819.0 1469,819.1 1471,819.1 1473,818.9 1475,818.7 1477,818.6 1479,818.7 1481,819.0 1483,819.2 1485,819.5 1487,819.8 1489,820.8 1491,822.1 1493,823.7 1495,825.4 1497,826.3 1499,827.2 1501,828.3 1503,828.9 1505,829.7 1507,830.8 1509,831.7 1511,832.6 1513,833.9 1515,835.0 1517,836.2 1519,837.2 1521,838.3 1523,839.5 1525,840.7 1527,842.1 1529,843.4 1531,844.3 1533,845.1 1535,845.5 1537,846.1 1539,846.9 1541,847.6 1543,848.2 1545,848.9 1547,849.5 1549,850.4 1551,851.3 1553,851.8 1555,852.5 1557,853.3 1559,854.0 1561,854.6 1563,855.0 1565,854.5 1567,853.4 1569,852.3 1571,851.1 1573,850.2 1575,849.3 1577,848.4 1579,847.0 1581,846.0 1583,845.0 1585,844.4 1587,843.4 1589,841.7 1591,840.1 1593,838.4 1595,836.3 1597,834.1 1599,832.3 1601,830.9 1603,829.4 1605,828.3 1607,827.1 1609,825.6 1611,824.2 1613,822.3 1615,820.2 1617,819.2 1619,818.2 1621,816.5 1623,814.8 1625,812.9 1627,810.6 1629,808.3 1631,805.9 1633,804.2 1635,802.0 1637,800.5 1639,799.0 1641,796.6 1643,794.1 1645,791.6 1647,789.6 1649,787.9 1651,786.4 1653,784.9 1655,783.6 1657,782.1 1659,780.7 1661,779.8 1663,779.0 1665,778.2 1667,777.4 1669,777.2 1671,776.9 1673,776.3 1675,775.5 1677,775.0 1679,774.0 1681,772.9 1683,771.5 1685,770.2 1687,768.9 1689,767.6 1691,766.6 1693,765.9 1695,765.0 1697,764.2 1699,763.4 1701,762.6 1703,762.2 1705,761.5 1707,761.2 1709,760.9 1711,759.4 1713,757.8 1715,755.8 1717,753.3 1719,750.0 1721,746.2 1723,741.9 1725,737.1 1727,732.9 1729,729.0 1731,725.5 1733,723.8 1735,722.3 1737,721.2 1739,720.0 1741,719.4 1743,718.7 1745,718.1 1747,718.2 1749,718.9 1751,719.7 1753,720.4 1755,722.0 1757,723.5 1759,724.4 1761,725.3 1763,725.8 1765,726.4 1767,727.3 1769,728.3 1771,729.5 1773,730.9 1775,732.2 1777,733.9 1779,735.9 1781,737.4 1783,738.5 1785,739.6 1787,740.5 1789,741.4 1791,742.5 1793,743.3 1795,744.1 1797,745.2 1799,746.4 1801,747.6 1803,748.1 1805,748.4 1807,748.0 1809,748.0 1811,747.7 1813,747.6 1815,747.3 1817,747.3 1819,747.0 1821,746.8 1823,746.6 1825,745.5 1827,744.1 1829,742.2 1831,739.8"/><polyline stroke="#0000ff" points="65,292.4 67,292.8 69,293.7 71,295.0 73,296.5 75,297.9 77,299.6 79,301.6 81,303.7 83,304.5 85,305.4 87,306.9 89,308.6 91,310.1 93,312.1 95,314.0 97,316.0 99,316.4 101,316.2 103,315.4 105,314.0 107,312.1 109,311.2 111,310.6 113,309.9 115,309.3 117,309.1 119,309.1 121,308.0 123,306.3 125,303.8 127,301.1 129,298.2 131,294.7 133,290.6 135,286.3 137,283.6 139,281.6 141,280.1 143,278.2 145,276.2 147,275.1 149,274.7 151,274.9 153,275.4 155,276.4 157,277.5 159,279.6 161,281.9 163,284.3 165,287.2 167,290.7 169,291.7 171,291.4 173,290.3 175,287.9 177,287.2 179,287.2 181,287.4 183,287.8 185,288.7 187,288.8 189,288.9 191,289.1 193,289.6 195,289.9 197,290.4 199,291.9 201,294.0 203,296.6 205,299.6 207,301.7 209,303.7 211,305.3 213,306.6 215,307.9 217,308.6 219,310.0 221,311.9 223,313.9 225,316.6 227,319.4 229,322.2 231,325.3 233,329.1 235,332.6 237,336.2 239,340.2 241,343.1 243,345.5 245,347.4 247,349.7 249,352.5 251,355.1 253,357.6 255,360.6 257,361.8 259,362.0 261,362.9 263,363.8 265,364.4 267,364.9 269,365.2 271,365.0 273,364.9 275,364.3 277,363.7 279,361.3 281,360.6 283,359.7 285,358.4 287,357.1 289,356.5 291,356.3 293,356.6 295,357.2 297,358.7 299,360.3 301,360.0 303,358.7 305,358.9 307,359.3 309,360.4 311,362.0 313,363.5 315,364.8 317,365.8 319,366.7 321,368.4 323,370.5 325,372.6 327,375.1 329,377.9 331,380.2 333,382.5 335,384.8 337,387.1 339,389.3 341,391.8 343,394.0 345,396.5 347,399.3 349,401.9 351,404.5 353,407.1 355,409.7 357,411.9 359,414.1 361,418.5 363,423.6 365,427.4 367,430.9 369,433.9 371,437.0 373,440.5 375,444.1 377,447.7 379,450.4 381,452.7 383,454.8 385,457.4 387,460.1 389,462.8 391,466.0 393,469.2 395,472.6 397,475.0 399,476.8 401,477.9 403,478.7 405,479.8 407,481.4 409,483.0 411,484.5 413,486.5 415,488.3 417,490.4 419,492.4 421,494.7 423,497.2 425,498.7 427,499.9 429,501.1 431,502.2 433,503.4 435,504.4 437,505.7 439,506.4 441,507.5 443,508.6 445,510.0 447,511.3 449,512.5 451,513.1 453,513.2 455,513.3 457,513.9 459,514.9 461,515.9 463,516.9 465,517.6 467,518.4 469,520.0 471,521.7 473,522.6 475,523.1 477,524.1 479,525.2 481,527.1 483,529.7 485,533.3 487,537.0 489,541.6 491,549.0 493,556.1 495,563.6 497,570.4 499,576.3 501,582.5 503,588.5 505,593.3 507,597.4 509,601.7 511,606.0 513,610.4 515,614.7 517,619.7 519,625.0 521,630.5 523,635.8 525,640.9 527,646.2 529,651.7 531,657.3 533,661.7 535,665.5 537,669.0 539,671.9 541,674.6 543,676.8 545,678.4 547,679.9 549,681.6 551,683.6 553,685.8 555,687.6 557,689.7 559,691.7 561,694.1 563,696.5 565,698.8 567,701.3 569,703.7 571,706.0 573,708.5 575,710.6 577,712.6 579,714.5 581,716.2 583,718.5 585,721.1 587,723.5 589,725.9 591,727.7 593,729.3 595,730.3 597,730.8 599,731.3 601,731.8 603,731.5 605,731.3 607,730.8 609,730.9 611,731.5 613,731.4 615,731.6 617,732.0 619,732.1 621,732.0 623,731.8 625,731.6 627,731.3 629,731.6 631,731.6 633,731.6 635,731.5 637,731.5 639,731.7 641,731.7 643,732.3 645,733.2 647,734.5 649,735.3 651,736.2 653,736.9 655,737.3 657,738.2 659,739.2 661,740.5 663,741.8 665,743.1 667,744.5 669,746.3 671,747.9 673,750.1 675,752.2 677,754.2 679,755.8 681,757.2 683,758.5 685,759.7 687,760.5 689,761.1 691,762.0 693,762.7 695,763.4 697,764.0 699,764.7 701,765.7 703,766.4 705,767.4 707,767.8 709,768.1 711,768.5 713,768.6 715,768.2 717,767.7 719,767.3 721,766.6 723,765.4 725,764.0 727,762.1 729,760.7 731,758.7 733,757.7 735,757.0 737,755.8 739,754.6 741,753.2 743,751.9 745,750.5 747,749.6 749,748.5 751,747.6 753,745.7 755,743.3 757,740.3 759,736.5 761,732.3 763,729.2 765,726.8 767,724.6 769,722.8 771,721.0 773,719.1 775,717.6 777,713.9 779,709.0 781,705.9 783,703.4 785,700.9 787,699.1 789,697.6 791,696.3 793,695.7 795,695.4 797,695.7 799,696.0 801,696.7 803,695.3 805,693.3 807,690.6 809,688.3 811,685.6 813,683.0 815,680.1 817,677.3 819,674.7 821,672.0 823,669.7 825,667.3 827,665.2 829,663.0 831,661.1 833,658.3 835,656.5 837,655.2 839,654.0 841,653.0 843,652.4 845,652.0 847,651.5 849,651.4 851,651.4 853,651.3 855,651.6 857,651.2 859,651.0 861,650.5 863,650.1 865,649.9 867,649.4 869,649.1 871,648.5 873,648.0 875,647.4 877,647.1 879,647.0 881,646.7 883,646.7 885,646.3 887,646.0 889,645.8 891,645.9 893,645.9 895,645.9 897,647.2 899,649.1 901,649.9 903,650.8 905,651.2 907,651.5 909,653.6 911,655.6 913,658.0 915,660.5 917,663.8 919,667.1 921,671.0 923,675.5 925,679.2 927,682.4 929,685.2 931,687.6 933,690.9 935,694.4 937,697.9 939,701.6 941,705.4 943,708.8 945,712.0 947,715.0 949,717.7 951,719.9 953,722.6 955,725.2 957,727.9 959,730.7 961,733.2 963,735.8 965,738.6 967,741.2 969,743.7 971,745.8 973,748.3 975,751.0 977,753.7 979,756.0 981,758.4 983,760.8 985,763.4 987,765.6 989,768.3 991,771.1 993,774.3 995,777.2 997,781.1 999,785.2 1001,789.6 1003,793.3 1005,797.0 1007,799.9 1009,803.2 1011,806.1 1013,808.7 1015,811.3 1017,813.5 1019,815.6 1021,817.4 1023,819.0 1025,820.8 1027,822.7 1029,824.2 1031,825.6 1033,826.6 1035,827.5 1037,827.5 1039,827.3 1041,826.1 1043,824.8 1045,822.9 1047,821.1 1049,819.0 1051,817.4 1053,816.2 1055,815.4 1057,814.7 1059,813.6 1061,812.7 1063,811.6 1065,811.1 1067,810.3 1069,809.8 1071,809.3 1073,808.6 1075,808.3 1077,808.3 1079,808.5 1081,808.8 1083,809.0 1085,809.7 1087,810.3 1089,810.8 1091,811.8 1093,812.4 1095,813.2 1097,813.5 1099,813.4 1101,814.1 1103,814.4 1105,814.7 1107,814.8 1109,815.1 1111,815.8 1113,816.2 1115,816.0 1117,815.6 1119,815.2 1121,814.0 1123,812.5 1125,810.7 1127,808.6 1129,805.9 1131,803.2 1133,800.3 1135,796.9 1137,793.1 1139,789.0 1141,784.9 1143,781.1 1145,777.6 1147,774.1 1149,770.7 1151,767.9 1153,764.6 1155,761.2 1157,757.8 1159,754.5 1161,751.5 1163,748.4 1165,746.3 1167,744.2 1169,742.3 1171,740.6 1173,739.5 1175,738.1 1177,736.9 1179,736.0 1181,735.1 1183,734.5 1185,733.9 1187,733.4 1189,733.1 1191,732.9 1193,733.1 1195,733.3 1197,733.6 1199,734.5 1201,735.5 1203,736.6 1205,737.8 1207,739.5 1209,740.9 1211,742.3 1213,744.0 1215,745.8 1217,748.0 1219,750.3 1221,752.8 1223,755.4 1225,758.3 1227,761.7 1229,765.2 1231,768.8 1233,772.9 1235,777.2 1237,781.7 1239,786.3 1241,790.3 1243,794.1 1245,798.0 1247,801.3 1249,804.7 1251,807.8 1253,810.8 1255,813.5 1257,815.7 1259,817.7 1261,819.5 1263,821.3 1265,822.6 1267,823.6 1269,824.2 1271,824.6 1273,824.8 1275,824.5 1277,824.1 1279,824.4 1281,824.5 1283,824.5 1285,825.1 1287,825.7 1289,826.7 1291,828.1 1293,829.7 1295,830.7 1297,832.2 1299,834.0 1301,835.4 1303,837.0 1305,838.9 1307,840.4 1309,842.2 1311,843.9 1313,845.3 1315,847.1 1317,848.5 1319,850.0 1321,851.4 1323,852.7 1325,853.7 1327,854.7 1329,855.7 1331,856.4 1333,856.6 1335,856.6 1337,856.3 1339,856.3 1341,856.5 1343,856.6 1345,856.8 1347,857.1 1349,857.5 1351,858.1 1353,858.2 1355,858.5 1357,858.5 1359,858.1 1361,857.6 1363,857.3 1365,857.2 1367,857.3 1369,857.0 1371,856.7 1373,855.9 1375,855.1 1377,853.6 1379,852.3 1381,850.6 1383,848.5 1385,846.3 1387,845.0 1389,843.8 1391,842.7 1393,842.1 1395,841.4 1397,840.6 1399,840.5 1401,840.1 1403,839.7 1405,839.5 1407,839.6 1409,840.0 1411,840.6 1413,841.2 1415,841.9 1417,842.0 1419,842.2 1421,842.6 1423,842.8 1425,842.7 1427,842.7 1429,842.0 1431,841.1 1433,839.8 1435,838.4 1437,836.8 1439,835.0 1441,833.2 1443,831.8 1445,830.5 1447,829.1 1449,827.9 1451,826.6 1453,825.1 1455,823.9 1457,823.1 1459,822.4 1461,821.9 1463,821.5 1465,821.0 1467,820.6 1469,820.6 1471,820.6 1473,820.3 1475,820.1 1477,820.0 1479,819.9 1481,820.1 1483,820.3 1485,820.5 1487,820.8 1489,821.6 1491,822.8 1493,824.2 1495,825.7 1497,826.5 1499,827.3 1501,828.3 1503,828.8 1505,829.5 1507,830.5 1509,831.4 1511,832.2 1513,833.4 1515,834.4 1517,835.5 1519,836.4 1521,837.5 1523,838.6 1525,839.7 1527,841.0 1529,842.2 1531,843.1 1533,843.9 1535,844.3 1537,844.9 1539,845.7 1541,846.3 1543,846.9 1545,847.6 1547,848.2 1549,849.0 1551,849.9 1553,850.4 1555,851.1 1557,851.8 1559,852.5 1561,853.2 1563,853.6 1565,853.1 1567,852.3 1569,851.3 1571,850.3 1573,849.5 1575,848.7 1577,847.9 1579,846.6 1581,845.7 1583,844.9 1585,844.3 1587,843.4 1589,841.9 1591,840.4 1593,838.9 1595,837.0 1597,835.0 1599,833.3 1601,832.0 1603,830.6 1605,829.5 1607,828.4 1609,827.1 1611,825.7 1613,823.9 1615,822.0 1617,821.0 1619,820.0 1621,818.5 1623,816.8 1625,815.0 1627,812.9 1629,810.7 1631,808.5 1633,806.8 1635,804.7 1637,803.2 1639,801.8 1641,799.6 1643,797.1 1645,794.8 1647,792.9 1649,791.2 1651,789.7 1653,788.2 1655,787.0 1657,785.5 1659,784.0 1661,783.1 1663,782.3 1665,781.4 1667,780.5 1669,780.3 1671,779.8 1673,779.2 1675,778.4 1677,777.8 1679,776.8 1681,775.7 1683,774.4 1685,773.0 1687,771.7 1689,770.5 1691,769.5 1693,768.7 1695,767.8 1697,766.9 1699,766.1 1701,765.3 1703,764.8 1705,764.1 1707,763.7 1709,763.3 1711,761.9 1713,760.4 1715,758.4 1717,756.1 1719,753.0 1721,749.4 1723,745.4 1725,741.0 1727,737.1 1729,733.4 1731,730.0 1733,728.3 1735,726.8 1737,725.6 1739,724.4 1741,723.7 1743,722.8 1745,722.1 1747,722.1 1749,722.5 1751,723.1 1753,723.6 1755,724.9 1757,726.2 1759,726.9 1761,727.6 1763,728.0 1765,728.4 1767,729.2 1769,730.0 1771,731.0 1773,732.2 1775,733.3 1777,734.8 1779,736.6 1781,737.9 1783,738.9 1785,739.9 1787,740.7 1789,741.4 1791,742.4 1793,743.1 1795,743.9 1797,744.9 1799,746.0 1801,747.1 1803,747.6 1805,747.9 1807,747.5 1809,747.6 1811,747.3 1813,747.2 1815,747.0 1817,747.0 1819,746.7 1821,746.6 1823,746.4 1825,745.4 1827,744.1 1829,742.4 1831,740.2"/><polyline stroke="#0000ff" points="65,292.1 67,292.5 69,293.2 71,294.3 73,295.6 75,296.9 77,298.3 79,300.0 81,301.8 83,302.5 85,303.4 87,304.6 89,306.1 91,307.5 93,309.3 95,310.9 97,312.8 99,313.1 101,313.1 103,312.5 105,311.5 107,310.0 109,309.2 111,308.8 113,308.3 115,307.9 117,307.7 119,307.8 121,306.9 123,305.5 125,303.4 127,301.2 129,298.8 131,295.8 133,292.4 135,288.7 137,286.4 139,284.6 141,283.3 143,281.6 145,279.8 147,278.7 149,278.3 151,278.4 153,278.7 155,279.4 157,280.2 159,281.9 161,283.7 163,285.7 165,288.0 167,290.9 169,291.7 171,291.6 173,290.6 175,288.6 177,288.0 179,287.9 181,288.1 183,288.4 185,289.2 187,289.2 189,289.3 191,289.4 193,289.9 195,290.1 197,290.5 199,291.7 201,293.5 203,295.7 205,298.2 207,300.1 209,301.8 211,303.1 213,304.3 215,305.5 217,306.1 219,307.4 221,309.1 223,310.9 225,313.2 227,315.6 229,318.1 231,320.8 233,324.1 235,327.2 237,330.4 239,334.0 241,336.6 243,338.8 245,340.6 247,342.8 249,345.3 251,347.8 253,350.1 255,352.8 257,354.1 259,354.5 261,355.5 263,356.5 265,357.3 267,357.9 269,358.4 271,358.4 273,358.6 275,358.3 277,358.0 279,356.1 281,355.7 283,355.1 285,354.2 287,353.3 289,352.9 291,352.9 293,353.2 295,353.8 297,355.1 299,356.6 301,356.5 303,355.5 305,355.8 307,356.2 309,357.3 311,358.7 313,360.1 315,361.2 317,362.2 319,363.0 321,364.6 323,366.5 325,368.4 327,370.6 329,373.1 331,375.1 333,377.3 335,379.4 337,381.5 339,383.5 341,385.8 343,387.8 345,390.1 347,392.6 349,395.0 351,397.4 353,399.8 355,402.2 357,404.4 359,406.4 361,410.3 363,414.9 365,418.3 367,421.6 369,424.4 371,427.3 373,430.6 375,433.8 377,437.2 379,439.8 381,442.1 383,444.2 385,446.7 387,449.3 389,451.9 391,455.0 393,458.0 395,461.2 397,463.6 399,465.4 401,466.7 403,467.8 405,469.1 407,470.8 409,472.5 411,474.0 413,476.1 415,477.9 417,480.0 419,482.0 421,484.3 423,486.7 425,488.3 427,489.6 429,491.0 431,492.3 433,493.5 435,494.8 437,496.1 439,497.0 441,498.3 443,499.5 445,501.0 447,502.3 449,503.6 451,504.4 453,504.8 455,505.1 457,506.0 459,507.0 461,508.1 463,509.2 465,510.1 467,511.0 469,512.5 471,514.2 473,515.2 475,515.9 477,517.0 479,518.1 481,519.9 483,522.3 485,525.6 487,529.0 489,533.0 491,539.5 493,545.7 495,552.4 497,558.4 499,563.8 501,569.3 503,574.8 505,579.2 507,583.1 509,587.2 511,591.3 513,595.4 515,599.5 517,604.2 519,609.1 521,614.2 523,619.2 525,624.0 527,629.0 529,634.2 531,639.4 533,643.7 535,647.5 537,650.9 539,654.0 541,656.8 543,659.2 545,661.2 547,663.0 549,664.9 551,667.2 553,669.6 555,671.6 557,673.9 559,676.1 561,678.6 563,681.1 565,683.5 567,686.1 569,688.6 571,691.1 573,693.6 575,695.9 577,698.0 579,700.1 581,702.0 583,704.4 585,707.0 587,709.5 589,711.9 591,713.9 593,715.7 595,717.0 597,717.9 599,718.7 601,719.5 603,719.6 605,719.9 607,719.9 609,720.3 611,721.1 613,721.4 615,721.9 617,722.5 619,722.9 621,723.2 623,723.3 625,723.4 627,723.4 629,723.9 631,724.2 633,724.4 635,724.6 637,724.8 639,725.2 641,725.4 643,726.1 645,727.1 647,728.3 649,729.2 651,730.2 653,731.0 655,731.5 657,732.4 659,733.5 661,734.7 663,736.0 665,737.3 667,738.7 669,740.3 671,741.9 673,743.9 675,745.9 677,747.8 679,749.3 681,750.7 683,751.9 685,753.2 687,754.1 689,754.8 691,755.8 693,756.6 695,757.3 697,758.0 699,758.8 701,759.8 703,760.6 705,761.6 707,762.2 709,762.6 711,763.1 713,763.4 715,763.2 717,763.0 719,762.8 721,762.4 723,761.5 725,760.4 727,759.0 729,757.9 731,756.3 733,755.5 735,755.0 737,754.1 739,753.2 741,752.0 743,751.0 745,749.8 747,749.1 749,748.2 751,747.5 753,745.9 755,743.9 757,741.4 759,738.1 761,734.5 763,731.9 765,729.8 767,727.9 769,726.2 771,724.7 773,722.9 775,721.5 777,718.3 779,714.1 781,711.3 783,709.0 785,706.8 787,705.1 789,703.6 791,702.4 793,701.7 795,701.2 797,701.3 799,701.3 801,701.7 803,700.4 805,698.5 807,696.1 809,694.1 811,691.6 813,689.2 815,686.6 817,684.0 819,681.7 821,679.1 823,677.0 825,674.7 827,672.8 829,670.6 831,668.8 833,666.3 835,664.5 837,663.1 839,661.8 841,660.8 843,660.0 845,659.4 847,658.7 849,658.4 851,658.2 853,657.9 855,657.9 857,657.4 859,657.0 861,656.4 863,655.9 865,655.5 867,655.0 869,654.5 871,653.8 873,653.2 875,652.6 877,652.1 879,651.8 881,651.5 883,651.3 885,650.8 887,650.4 889,650.1 891,650.0 893,649.9 895,649.8 897,650.8 899,652.2 901,652.8 903,653.4 905,653.7 907,653.9 909,655.6 911,657.1 913,659.1 915,661.2 917,663.9 919,666.6 921,669.9 923,673.7 925,676.9 927,679.6 929,682.0 931,684.1 933,687.0 935,690.1 937,693.2 939,696.4 941,699.8 943,702.8 945,705.7 947,708.3 949,710.8 951,712.9 953,715.4 955,717.8 957,720.3 959,722.9 961,725.3 963,727.6 965,730.2 967,732.7 969,735.1 971,737.1 973,739.5 975,742.0 977,744.6 979,746.9 981,749.1 983,751.4 985,753.9 987,756.1 989,758.7 991,761.3 993,764.3 995,767.1 997,770.6 999,774.4 1001,778.4 1003,781.9 1005,785.4 1007,788.2 1009,791.3 1011,794.1 1013,796.7 1015,799.3 1017,801.5 1019,803.7 1021,805.6 1023,807.3 1025,809.2 1027,811.1 1029,812.7 1031,814.3 1033,815.6 1035,816.6 1037,817.0 1039,817.2 1041,816.5 1043,815.7 1045,814.5 1047,813.2 1049,811.7 1051,810.6 1053,809.8 1055,809.4 1057,809.0 1059,808.3 1061,807.6 1063,807.0 1065,806.7 1067,806.2 1069,805.9 1071,805.6 1073,805.1 1075,804.9 1077,805.1 1079,805.3 1081,805.7 1083,805.9 1085,806.6 1087,807.3 1089,807.8 1091,808.7 1093,809.3 1095,810.1 1097,810.4 1099,810.5 1101,811.1 1103,811.5 1105,811.8 1107,812.0 1109,812.3 1111,813.0 1113,813.5 1115,813.4 1117,813.1 1119,812.9 1121,811.9 1123,810.8 1125,809.3 1127,807.6 1129,805.4 1131,803.1 1133,800.7 1135,797.8 1137,794.6 1139,791.1 1141,787.6 1143,784.4 1145,781.3 1147,778.3 1149,775.3 1151,772.8 1153,769.9 1155,766.9 1157,763.9 1159,760.9 1161,758.2 1163,755.4 1165,753.4 1167,751.4 1169,749.6 1171,747.9 1173,746.7 1175,745.4 1177,744.1 1179,743.1 1181,742.2 1183,741.4 1185,740.6 1187,740.0 1189,739.5 1191,739.2 1193,739.1 1195,739.1 1197,739.2 1199,739.8 1201,740.4 1203,741.2 1205,742.0 1207,743.3 1209,744.4 1211,745.4 1213,746.7 1215,748.2 1217,749.9 1219,751.8 1221,753.8 1223,755.9 1225,758.4 1227,761.2 1229,764.1 1231,767.2 1233,770.7 1235,774.4 1237,778.2 1239,782.1 1241,785.7 1243,788.9 1245,792.4 1247,795.3 1249,798.4 1251,801.2 1253,803.9 1255,806.3 1257,808.5 1259,810.3 1261,812.1 1263,813.9 1265,815.2 1267,816.3 1269,817.0 1271,817.5 1273,818.0 1275,818.0 1277,817.9 1279,818.3 1281,818.6 1283,818.8 1285,819.5 1287,820.2 1289,821.1 1291,822.5 1293,824.0 1295,825.1 1297,826.5 1299,828.1 1301,829.5 1303,831.1 1305,832.8 1307,834.3 1309,836.0 1311,837.6 1313,839.0 1315,840.7 1317,842.1 1319,843.5 1321,845.0 1323,846.2 1325,847.3 1327,848.4 1329,849.3 1331,850.2 1333,850.5 1335,850.7 1337,850.7 1339,850.9 1341,851.2 1343,851.5 1345,851.8 1347,852.2 1349,852.7 1351,853.4 1353,853.6 1355,854.0 1357,854.1 1359,854.0 1361,853.7 1363,853.6 1365,853.6 1367,853.8 1369,853.7 1371,853.6 1373,853.0 1375,852.4 1377,851.3 1379,850.2 1381,848.8 1383,847.2 1385,845.3 1387,844.3 1389,843.3 1391,842.4 1393,842.0 1395,841.3 1397,840.7 1399,840.6 1401,840.2 1403,839.9 1405,839.8 1407,839.8 1409,840.2 1411,840.6 1413,841.2 1415,841.7 1417,841.8 1419,842.0 1421,842.3 1423,842.5 1425,842.4 1427,842.4 1429,841.8 1431,841.1 1433,840.0 1435,838.8 1437,837.5 1439,836.0 1441,834.4 1443,833.3 1445,832.1 1447,830.9 1449,829.8 1451,828.6 1453,827.4 1455,826.2 1457,825.5 1459,824.9 1461,824.4 1463,823.9 1465,823.5 1467,823.0 1469,822.9 1471,822.8 1473,822.5 1475,822.3 1477,822.1 1479,822.0 1481,822.1 1483,822.2 1485,822.3 1487,822.5 1489,823.1 1491,824.0 1493,825.1 1495,826.4 1497,827.0 1499,827.7 1501,828.5 1503,829.0 1505,829.5 1507,830.4 1509,831.1 1511,831.8 1513,832.8 1515,833.7 1517,834.6 1519,835.4 1521,836.3 1523,837.3 1525,838.3 1527,839.4 1529,840.5 1531,841.2 1533,842.0 1535,842.4 1537,842.9 1539,843.6 1541,844.2 1543,844.8 1545,845.5 1547,846.0 1549,846.8 1551,847.6 1553,848.1 1555,848.7 1557,849.5 1559,850.1 1561,850.7 1563,851.2 1565,850.9 1567,850.2 1569,849.5 1571,848.7 1573,848.0 1575,847.4 1577,846.8 1579,845.8 1581,845.1 1583,844.4 1585,843.9 1587,843.2 1589,842.0 1591,840.7 1593,839.4 1595,837.8 1597,836.1 1599,834.7 1601,833.6 1603,832.3 1605,831.4 1607,830.4 1609,829.2 1611,828.0 1613,826.4 1615,824.7 1617,823.8 1619,822.9 1621,821.5 1623,820.0 1625,818.4 1627,816.5 1629,814.5 1631,812.6 1633,811.0 1635,809.2 1637,807.8 1639,806.4 1641,804.4 1643,802.2 1645,800.1 1647,798.3 1649,796.7 1651,795.3 1653,793.9 1655,792.6 1657,791.2 1659,789.8 1661,788.8 1663,788.0 1665,787.0 1667,786.1 1669,785.7 1671,785.2 1673,784.5 1675,783.6 1677,783.0 1679,782.0 1681,780.9 1683,779.6 1685,778.3 1687,777.0 1689,775.8 1691,774.8 1693,774.0 1695,773.1 1697,772.2 1699,771.3 1701,770.4 1703,769.9 1705,769.1 1707,768.6 1709,768.2 1711,766.8 1713,765.4 1715,763.6 1717,761.5 1719,758.7 1721,755.5 1723,752.0 1725,748.1 1727,744.5 1729,741.2 1731,738.1 1733,736.4 1735,734.9 1737,733.7 1739,732.4 1741,731.5 1743,730.6 1745,729.7 1747,729.4 1749,729.6 1751,729.8 1753,730.0 1755,730.9 1757,731.7 1759,732.2 1761,732.6 1763,732.8 1765,733.0 1767,733.4 1769,734.0 1771,734.7 1773,735.5 1775,736.4 1777,737.5 1779,738.9 1781,740.0 1783,740.7 1785,741.5 1787,742.1 1789,742.7 1791,743.5 1793,744.0 1795,744.6 1797,745.5 1799,746.4 1801,747.2 1803,747.6 1805,747.9 1807,747.6 1809,747.6 1811,747.4 1813,747.3 1815,747.1 1817,747.1 1819,746.9 1821,746.8 1823,746.6 1825,745.8 1827,744.7 1829,743.3 1831,741.4"/><polyline stroke="#ff0000" points="65,298.0 67,298.9 69,306.1 71,314.7 73,322.4 75,326.6 77,331.8 79,339.5 81,345.9 83,333.7 85,329.6 87,334.4 89,340.6 91,342.5 93,350.8 95,353.7 97,358.7 99,339.7 101,324.6 103,308.7 105,292.7 107,277.8 109,281.5 111,287.1 113,288.9 115,290.6 117,295.2 119,300.8 121,289.2 123,275.8 125,257.0 127,245.2 129,234.5 131,219.6 133,204.2 135,191.3 137,202.4 139,216.5 141,228.4 143,228.5 145,225.5 147,235.4 149,249.4 151,263.3 153,273.6 155,285.4 157,293.8 159,310.8 161,322.6 163,331.7 165,343.3 167,358.5 169,335.5 171,309.2 173,284.1 175,255.2 177,261.1 179,272.4 181,281.1 183,288.2 185,298.3 187,293.0 189,290.4 191,291.0 193,295.1 195,294.1 197,297.5 199,310.5 201,327.2 203,342.7 205,355.9 207,353.4 209,351.2 211,345.7 213,340.8 215,339.0 217,330.5 219,336.6 221,345.6 223,353.3 225,366.5 227,375.3 229,381.6 231,389.5 233,404.7 235,409.6 237,416.0 239,425.6 241,418.7 243,410.3 245,399.7 247,402.3 249,409.1 251,413.4 253,414.4 255,422.6 257,405.2 259,385.1 261,383.2 263,382.6 265,379.9 267,376.7 269,373.4 271,365.4 273,362.3 275,354.3 277,350.1 279,324.4 281,332.8 283,333.4 285,328.3 287,326.1 289,332.6 291,340.5 293,350.1 295,359.2 297,375.9 299,386.5 301,368.0 303,345.7 305,354.0 307,359.9 309,372.5 311,384.7 313,391.6 315,391.9 317,390.2 319,387.0 321,397.9 323,408.2 325,414.7 327,423.5 329,433.9 331,433.2 333,434.8 335,436.6 337,439.0 339,438.8 341,445.0 343,445.0 345,449.7 347,456.7 349,460.3 351,462.3 353,465.2 355,467.8 357,465.9 359,465.2 361,493.9 363,520.1 365,518.4 367,516.1 369,510.4 371,510.4 373,517.2 375,522.3 377,527.8 379,520.6 381,514.1 383,508.6 385,512.3 387,518.5 389,522.1 391,532.1 393,538.4 395,545.6 397,537.7 399,527.5 401,514.9 403,505.0 405,505.1 407,511.0 409,515.4 411,516.3 413,524.7 415,526.9 417,532.9 419,535.8 421,542.2 423,548.1 425,540.6 427,533.3 429,530.4 431,528.8 433,528.4 435,528.1 437,530.5 439,525.6 441,529.2 443,530.6 445,535.8 447,537.4 449,538.6 451,531.9 453,522.5 455,516.9 457,522.3 459,528.4 461,533.6 463,535.6 465,534.1 467,534.1 469,545.0 471,553.1 473,547.0 475,539.7 477,543.3 479,545.4 481,558.3 483,574.1 485,596.6 487,611.1 489,630.5 491,679.0 493,702.6 495,724.7 497,728.5 499,723.9 501,727.2 503,729.4 505,719.0 507,706.5 509,705.7 511,707.6 513,710.6 515,714.1 517,726.4 519,739.3 521,750.7 523,756.3 525,760.2 527,766.0 529,775.3 531,783.7 533,775.1 535,765.0 537,757.8 539,749.7 541,743.3 543,735.3 545,725.9 547,718.9 549,719.6 551,725.4 553,730.6 555,729.9 557,734.3 559,735.9 561,742.6 563,747.5 565,749.6 567,754.9 569,756.5 571,758.8 573,761.9 575,761.1 577,759.6 579,759.1 581,756.6 583,764.8 585,772.3 587,776.0 589,779.0 591,774.6 593,769.6 595,760.9 597,750.7 599,745.1 601,742.7 603,731.9 605,728.4 607,722.3 609,726.4 611,734.0 613,730.8 615,732.2 617,734.6 619,733.3 621,730.2 623,726.6 625,725.5 627,723.6 629,729.2 631,729.4 633,728.3 635,727.7 637,728.2 639,730.3 641,730.4 643,737.0 645,744.8 647,753.6 649,753.0 651,753.9 653,752.9 655,747.7 657,752.6 659,757.2 661,762.7 663,767.3 665,769.7 667,772.6 669,779.4 671,782.5 673,791.5 675,795.9 677,798.3 679,795.2 681,791.6 683,788.9 685,788.0 687,782.6 689,778.2 691,779.4 693,778.1 695,777.2 697,776.3 699,778.1 701,782.2 703,782.1 705,785.2 707,780.4 709,775.8 711,775.2 713,772.1 715,763.3 717,758.3 719,756.4 721,751.6 723,741.9 725,734.2 727,724.1 729,723.1 731,714.7 733,722.5 735,729.6 737,727.5 739,724.6 741,720.1 743,718.7 745,715.5 747,720.1 749,719.6 751,721.0 753,708.1 755,695.5 757,679.6 759,659.9 761,642.5 763,646.9 765,656.6 767,662.0 769,668.0 771,671.7 773,670.2 775,673.5 777,647.0 779,617.4 781,622.0 783,629.7 785,633.8 787,643.4 789,649.5 791,656.3 793,667.0 795,676.2 797,688.2 799,694.0 801,701.8 803,681.0 805,660.1 807,640.8 809,635.8 811,625.5 813,620.5 815,614.1 817,609.3 819,609.5 821,605.4 823,607.6 825,606.7 827,609.2 829,607.2 831,609.9 833,598.6 835,604.1 837,611.3 839,616.7 841,621.8 843,627.9 845,633.6 847,634.4 849,639.8 851,644.5 853,645.8 855,650.4 857,643.9 859,644.3 861,639.4 863,638.4 865,640.1 867,637.9 869,638.0 871,634.4 873,633.2 875,631.8 877,633.7 879,637.4 881,637.9 883,639.7 885,637.1 887,636.6 889,637.6 891,640.5 893,642.0 895,642.4 897,659.9 899,675.4 901,671.4 903,670.2 905,663.9 907,660.5 909,681.4 911,690.9 913,702.4 915,711.0 917,725.9 919,735.3 921,750.2 923,765.7 925,766.5 927,762.2 929,756.6 931,749.5 933,759.7 935,768.4 937,775.2 939,781.1 941,789.0 943,789.1 945,788.2 947,786.2 949,783.5 951,777.8 953,782.2 955,783.4 957,787.4 959,791.4 961,792.4 963,793.3 965,798.7 967,801.0 969,801.2 971,797.6 973,802.7 975,807.6 977,812.1 979,811.7 981,812.5 983,814.4 985,818.9 987,818.1 989,825.5 991,830.9 993,839.3 995,843.2 997,858.1 999,869.9 1001,882.5 1003,882.4 1005,882.6 1007,876.2 1009,877.5 1011,876.4 1013,873.2 1015,872.6 1017,868.2 1019,866.5 1021,862.2 1023,858.9 1025,860.7 1027,862.8 1029,860.1 1031,858.5 1033,854.3 1035,849.8 1037,837.5 1039,828.2 1041,810.4 1043,800.5 1045,787.5 1047,780.0 1049,772.6 1051,774.1 1053,778.6 1055,786.4 1057,789.7 1059,787.5 1061,786.6 1063,785.1 1065,790.2 1067,789.1 1069,792.0 1071,792.9 1073,790.2 1075,793.7 1077,800.2 1079,804.5 1081,809.0 1083,809.6 1085,817.2 1087,819.7 1089,820.3 1091,826.1 1093,825.9 1095,827.6 1097,822.1 1099,815.9 1101,821.4 1103,820.4 1105,819.2 1107,817.1 1109,817.7 1111,823.8 1113,824.2 1115,816.3 1117,809.0 1119,806.1 1121,793.3 1123,784.1 1125,773.5 1127,763.0 1129,750.2 1131,741.7 1133,734.5 1135,722.5 1137,709.7 1139,697.5 1141,689.3 1143,688.2 1145,687.4 1147,686.6 1149,685.6 1151,690.5 1153,686.1 1155,680.8 1157,676.4 1159,673.1 1161,673.5 1163,672.6 1165,681.3 1167,685.3 1169,689.6 1171,693.0 1173,700.7 1175,701.1 1177,703.2 1179,706.9 1181,708.7 1183,712.4 1185,713.6 1187,716.0 1189,719.3 1191,722.7 1193,728.6 1195,732.4 1197,735.4 1199,744.2 1201,750.5 1203,755.9 1205,759.9 1207,769.2 1209,770.9 1211,771.8 1213,777.3 1215,782.5 1217,789.6 1219,797.3 1221,803.6 1223,810.0 1225,818.8 1227,829.5 1229,839.3 1231,847.0 1233,858.6 1235,869.2 1237,879.2 1239,887.1 1241,886.5 1243,884.6 1245,887.6 1247,883.5 1249,885.2 1251,882.6 1253,882.1 1255,878.5 1257,873.1 1259,867.8 1261,865.0 1263,863.6 1265,857.7 1267,851.0 1269,843.3 1271,837.0 1273,833.0 1275,823.4 1277,817.6 1279,822.4 1281,823.3 1283,822.4 1285,829.7 1287,833.6 1289,840.2 1291,849.7 1293,858.3 1295,855.5 1297,860.6 1299,867.2 1301,867.2 1303,870.5 1305,876.3 1307,876.0 1309,878.9 1311,880.6 1313,879.0 1315,883.9 1317,881.9 1319,882.1 1321,883.4 1323,881.6 1325,878.2 1327,877.8 1329,876.7 1331,874.1 1333,865.8 1335,860.1 1337,853.5 1339,853.4 1341,855.5 1343,856.0 1345,856.7 1347,859.7 1349,862.0 1351,865.9 1353,862.2 1355,862.2 1357,858.3 1359,852.1 1361,847.6 1363,847.1 1365,850.0 1367,852.4 1369,849.8 1371,848.6 1373,840.7 1375,836.1 1377,825.6 1379,821.0 1381,813.0 1383,804.6 1385,796.3 1387,803.2 1389,807.2 1391,810.5 1393,817.9 1395,818.5 1397,818.5 1399,827.1 1401,826.5 1403,826.9 1405,829.8 1407,834.5 1409,840.7 1411,845.8 1413,850.0 1415,852.5 1417,846.9 1419,846.5 1421,847.5 1423,846.0 1425,841.6 1427,840.1 1429,831.1 1431,823.8 1433,814.2 1435,807.8 1437,801.9 1439,794.9 1441,789.7 1443,792.9 1445,793.3 1447,793.6 1449,794.4 1451,792.1 1453,789.6 1455,789.7 1457,795.1 1459,799.3 1461,803.4 1463,805.1 1465,806.2 1467,806.3 1469,812.1 1471,814.5 1473,812.7 1475,812.5 1477,812.9 1479,814.7 1481,818.4 1483,820.0 1485,821.3 1487,822.3 1489,831.3 1491,839.4 1493,847.2 1495,854.4 1497,847.8 1499,846.4 1501,848.3 1503,843.3 1505,843.5 1507,847.7 1509,848.8 1511,849.0 1513,854.0 1515,855.4 1517,857.2 1519,856.3 1521,858.7 1523,860.4 1525,862.8 1527,865.6 1529,867.7 1531,864.1 1533,862.4 1535,856.9 1537,856.8 1539,859.1 1541,858.8 1543,858.6 1545,860.6 1547,860.0 1549,863.5 1551,865.8 1553,863.2 1555,863.5 1557,865.4 1559,866.1 1561,866.0 1563,863.3 1565,851.2 1567,839.6 1569,832.0 1571,827.1 1573,826.9 1575,826.9 1577,826.1 1579,819.6 1581,820.1 1583,820.2 1585,823.9 1587,821.0 1589,812.2 1591,806.5 1593,802.0 1595,795.0 1597,788.6 1599,789.3 1601,793.4 1603,792.6 1605,796.9 1607,797.6 1609,794.3 1611,791.9 1613,784.1 1615,777.7 1617,785.7 1619,790.0 1621,783.5 1623,778.4 1625,773.4 1627,765.0 1629,759.6 1631,755.7 1633,759.2 1635,754.8 1637,759.5 1639,761.4 1641,751.7 1643,742.9 1645,739.1 1647,740.7 1649,743.6 1651,747.5 1653,748.0 1655,750.3 1657,748.3 1659,746.7 1661,751.8 1663,755.7 1665,756.0 1667,756.7 1669,763.6 1671,764.9 1673,763.2 1675,758.9 1677,760.2 1679,754.2 1681,750.0 1683,744.2 1685,741.1 1687,738.8 1689,738.1 1691,739.8 1693,743.1 1695,743.2 1697,742.6 1699,743.2 1701,742.5 1703,746.2 1705,744.9 1707,747.9 1709,749.8 1711,737.0 1713,728.3 1715,718.2 1717,707.1 1719,690.9 1721,674.5 1723,659.6 1725,644.4 1727,641.0 1729,640.7 1731,642.4 1733,663.0 1735,675.4 1737,684.2 1739,687.8 1741,695.3 1743,697.3 1745,699.7 1747,708.8 1749,719.7 1751,727.1 1753,730.2 1755,742.0 1757,747.4 1759,745.3 1761,742.8 1763,739.2 1765,737.6 1767,740.7 1769,744.1 1771,748.1 1773,753.1 1775,755.7 1777,762.0 1779,769.8 1781,768.4 1783,764.6 1785,762.2 1787,760.1 1789,758.5 1791,761.3 1793,759.3 1795,759.2 1797,763.3 1799,766.3 1801,768.4 1803,762.4 1805,757.6 1807,746.5 1809,746.2 1811,742.0 1813,741.6 1815,740.4 1817,742.2 1819,739.4 1821,740.1 1823,739.0 1825,728.8 1827,719.1 1829,708.7 1831,696.2"/><polyline stroke="#ff0000" points="65,296.2 67,297.4 69,302.7 71,309.6 73,316.4 75,321.2 77,326.5 79,333.4 81,339.7 83,333.6 85,330.9 87,333.6 89,338.1 91,340.2 93,346.5 95,349.9 97,354.4 99,343.2 101,332.0 103,318.9 105,304.9 107,290.9 109,289.0 111,290.2 113,290.4 115,291.0 117,294.0 119,298.1 121,291.3 123,281.6 125,267.2 127,255.9 129,245.2 131,231.7 133,217.4 135,204.4 137,207.5 139,215.2 141,223.6 143,225.2 145,224.3 147,231.3 149,242.0 151,253.8 153,263.8 155,274.9 157,284.0 159,298.6 161,310.5 163,320.6 165,332.1 167,346.0 169,334.8 171,317.5 173,298.0 175,274.1 177,271.7 179,275.7 181,280.4 183,285.4 185,293.0 187,291.3 189,290.1 191,290.6 193,293.5 195,293.3 197,295.8 199,305.1 201,318.0 203,331.4 205,344.0 207,346.3 209,347.2 211,344.9 213,341.9 215,340.3 217,334.2 219,337.0 221,342.9 223,348.9 225,359.2 227,367.5 229,374.3 231,382.0 233,394.6 235,401.3 237,408.3 239,417.3 241,415.4 243,410.9 245,403.7 247,404.0 249,408.0 251,411.2 253,412.6 255,418.7 257,408.4 259,393.9 261,389.7 263,387.1 265,383.8 267,380.4 269,377.0 271,370.4 273,366.7 275,359.9 277,355.2 279,336.4 281,338.0 283,336.6 285,332.2 287,329.4 289,332.6 291,337.9 293,345.1 295,352.9 297,366.1 299,376.4 301,367.5 303,352.8 305,355.9 307,359.2 309,367.8 311,377.5 313,384.6 315,387.1 317,387.6 319,386.3 321,393.8 323,402.1 325,408.4 327,416.4 329,425.7 331,428.0 333,430.8 335,433.3 337,436.0 339,436.8 341,441.6 343,442.7 345,446.7 347,452.3 349,456.2 351,458.9 353,462.0 355,464.8 357,464.5 359,464.5 361,483.9 363,504.7 365,508.7 367,510.4 369,508.5 371,509.1 373,514.1 375,518.5 377,523.4 379,520.1 381,516.0 383,511.7 385,513.1 387,517.0 389,519.9 391,527.3 393,533.1 395,539.7 397,536.4 399,530.0 401,520.8 403,512.2 405,509.9 407,512.2 409,514.8 411,515.5 413,521.4 415,524.0 417,529.0 419,532.2 421,537.7 423,543.1 425,539.7 427,535.2 429,532.6 431,530.8 433,529.9 435,529.2 437,530.4 439,527.2 441,529.0 443,530.1 445,533.7 447,535.5 449,536.9 451,533.0 453,526.4 455,521.4 457,523.4 459,527.1 461,531.0 463,533.2 465,533.0 467,533.4 469,540.9 471,547.7 473,545.4 475,541.0 477,543.0 479,544.5 481,553.4 483,565.6 485,583.4 487,597.5 489,614.9 491,652.5 493,677.0 495,700.3 497,710.9 499,713.7 501,719.3 503,723.4 505,718.5 507,710.3 509,708.5 511,708.8 513,710.4 515,712.8 517,721.4 519,731.7 521,741.8 523,748.5 525,753.7 527,759.7 529,768.0 531,776.1 533,772.8 535,766.8 537,761.5 539,754.8 541,748.8 543,741.7 545,733.3 547,726.2 549,724.2 551,726.6 553,729.6 555,729.5 557,732.6 559,734.2 561,739.3 563,743.6 565,746.3 567,750.9 569,753.3 571,755.9 573,758.9 575,759.4 577,759.0 579,758.8 581,757.3 583,762.5 585,768.3 587,772.1 589,775.4 591,773.6 593,770.6 595,764.5 597,756.5 599,750.8 601,747.3 603,738.6 605,734.0 607,728.1 609,728.9 611,733.1 613,731.3 615,732.0 617,733.7 619,733.1 621,731.1 623,728.4 625,727.1 627,725.3 629,728.5 631,728.8 633,728.3 635,727.9 637,728.2 639,729.6 641,729.9 643,734.5 645,740.5 647,747.8 649,749.3 651,751.1 653,751.4 655,748.5 657,751.4 659,754.9 661,759.3 663,763.5 665,766.4 667,769.4 669,775.0 671,778.5 673,785.9 675,790.6 677,794.0 679,793.4 681,791.6 683,789.8 685,788.9 687,785.0 689,781.2 691,781.0 693,779.6 695,778.5 697,777.5 699,778.3 701,781.0 703,781.3 705,783.7 707,781.0 709,777.7 711,776.7 713,774.1 715,767.6 717,762.8 719,760.1 721,755.6 723,747.8 725,740.7 727,731.8 729,728.6 731,721.1 733,724.2 735,728.3 737,727.4 739,725.5 741,722.2 743,720.6 745,717.8 747,720.1 749,719.7 751,720.6 753,712.1 755,702.4 757,689.5 759,673.0 761,657.1 763,655.2 765,658.8 767,661.7 769,665.8 771,669.0 773,668.9 775,671.5 777,654.6 779,632.3 781,630.4 783,632.7 785,634.4 787,640.6 789,645.6 791,651.5 793,660.2 795,668.6 797,679.1 799,686.0 801,693.9 803,682.7 805,668.2 807,652.6 809,645.3 811,635.3 813,628.7 815,621.7 817,616.0 819,613.9 821,609.7 823,609.7 825,608.4 827,609.5 829,608.1 831,609.6 833,602.1 835,604.7 837,609.2 839,613.6 841,618.0 843,623.3 845,628.6 847,630.9 849,635.6 851,640.2 853,642.4 855,646.6 857,643.5 859,644.0 861,640.8 863,639.6 865,640.3 867,638.8 869,638.6 871,636.0 873,634.7 875,633.3 877,634.1 879,636.4 881,637.1 883,638.6 885,637.2 887,636.8 889,637.4 891,639.4 893,640.8 895,641.4 897,653.4 899,665.9 901,666.4 903,667.3 905,664.1 907,661.7 909,675.3 911,683.7 913,693.7 915,702.3 917,715.2 919,725.0 921,738.4 923,752.7 925,757.5 927,757.6 929,755.4 931,751.1 933,757.3 935,763.9 937,770.0 939,775.6 941,782.7 943,784.9 945,785.7 947,785.2 949,783.7 951,779.9 953,782.1 955,782.9 957,785.7 959,789.0 961,790.4 963,791.7 965,795.8 967,798.3 969,799.4 971,797.6 973,801.0 975,804.8 977,808.7 979,809.6 981,810.9 983,812.6 985,816.2 987,816.6 989,822.0 991,826.8 993,833.8 995,838.2 997,849.8 999,860.4 1001,872.0 1003,875.4 1005,877.9 1007,875.2 1009,876.4 1011,876.0 1013,874.0 1015,873.3 1017,870.1 1019,868.4 1021,864.9 1023,861.8 1025,862.0 1027,863.0 1029,861.1 1031,859.7 1033,856.5 1035,852.8 1037,843.5 1039,835.4 1041,821.1 1043,810.9 1045,798.8 1047,790.0 1049,781.8 1051,779.7 1053,780.8 1055,785.3 1057,787.8 1059,787.0 1061,786.6 1063,785.6 1065,788.8 1067,788.6 1069,790.7 1071,791.7 1073,790.3 1075,792.6 1077,797.3 1079,801.1 1081,805.3 1083,806.9 1085,812.9 1087,816.0 1089,817.6 1091,822.4 1093,823.5 1095,825.5 1097,822.5 1099,818.2 1101,821.1 1103,820.6 1105,819.7 1107,818.1 1109,818.2 1111,822.1 1113,822.9 1115,818.1 1117,812.6 1119,809.5 1121,799.8 1123,791.5 1125,782.0 1127,772.1 1129,760.6 1131,751.4 1133,743.4 1135,732.4 1137,720.6 1139,708.8 1141,699.6 1143,695.4 1145,692.5 1147,690.3 1149,688.4 1151,690.7 1153,687.7 1155,683.7 1157,679.8 1159,676.4 1161,675.6 1163,674.3 1165,679.5 1167,682.8 1169,686.5 1171,689.8 1173,696.0 1175,697.8 1177,700.3 1179,703.8 1181,706.0 1183,709.4 1185,711.2 1187,713.6 1189,716.6 1191,719.7 1193,724.7 1195,728.5 1197,731.8 1199,738.8 1201,744.8 1203,750.3 1205,754.9 1207,762.8 1209,766.0 1211,768.2 1213,773.1 1215,778.0 1217,784.2 1219,791.1 1221,797.4 1223,803.7 1225,811.7 1227,821.2 1229,830.5 1231,838.6 1233,849.1 1235,859.3 1237,869.3 1239,877.8 1241,880.6 1243,881.2 1245,884.4 1247,882.7 1249,884.1 1251,882.8 1253,882.4 1255,879.9 1257,875.8 1259,871.4 1261,868.3 1263,866.2 1265,861.5 1267,855.7 1269,849.0 1271,842.9 1273,838.3 1275,830.1 1277,824.0 1279,825.1 1281,824.8 1283,823.7 1285,828.1 1287,831.3 1289,836.5 1291,844.0 1293,851.6 1295,852.0 1297,856.5 1299,862.3 1301,864.0 1303,867.2 1305,872.2 1307,873.3 1309,876.2 1311,878.2 1313,877.9 1315,881.6 1317,881.0 1319,881.4 1321,882.5 1323,881.6 1325,879.4 1327,878.7 1329,877.7 1331,875.6 1333,869.6 1335,864.5 1337,858.6 1339,856.9 1341,857.1 1343,856.9 1345,857.1 1347,858.9 1349,860.7 1351,863.7 1353,862.0 1355,862.1 1357,859.5 1359,855.0 1361,851.0 1363,849.5 1365,850.6 1367,852.1 1369,850.5 1371,849.4 1373,843.9 1375,839.7 1377,831.5 1379,826.5 1381,819.3 1383,811.6 1385,803.7 1387,805.9 1389,807.6 1391,809.7 1393,814.9 1395,816.3 1397,817.0 1399,823.3 1401,824.2 1403,825.2 1405,827.7 1407,831.5 1409,836.6 1411,841.4 1413,845.7 1415,848.8 1417,846.3 1419,846.2 1421,847.0 1423,846.1 1425,843.1 1427,841.6 1429,835.2 1431,828.9 1433,820.8 1435,814.3 1437,808.3 1439,801.4 1441,795.8 1443,795.9 1445,795.2 1447,794.7 1449,794.9 1451,793.2 1453,791.2 1455,790.7 1457,794.0 1459,797.2 1461,800.6 1463,802.7 1465,804.2 1467,804.9 1469,809.3 1471,811.8 1473,811.5 1475,811.8 1477,812.3 1479,813.7 1481,816.5 1483,818.2 1485,819.7 1487,820.9 1489,827.3 1491,834.1 1493,841.1 1495,847.9 1497,845.7 1499,845.5 1501,847.0 1503,844.1 1505,844.0 1507,846.6 1509,847.7 1511,848.2 1513,851.8 1515,853.5 1517,855.3 1519,855.3 1521,857.3 1523,858.9 1525,861.0 1527,863.4 1529,865.5 1531,863.9 1533,862.8 1535,859.0 1537,858.2 1539,859.3 1541,859.1 1543,858.8 1545,860.1 1547,859.9 1549,862.2 1551,864.2 1553,863.0 1555,863.3 1557,864.6 1559,865.3 1561,865.5 1563,863.9 1565,855.6 1567,846.4 1569,839.1 1571,833.5 1573,831.2 1575,829.7 1577,828.3 1579,823.2 1581,822.3 1583,821.6 1585,823.6 1587,821.8 1589,815.6 1591,810.7 1593,806.3 1595,800.2 1597,794.2 1599,792.8 1601,794.4 1603,793.5 1605,796.1 1607,796.8 1609,794.9 1611,793.1 1613,787.5 1615,782.1 1617,786.0 1619,788.8 1621,784.8 1623,781.0 1625,776.8 1627,770.1 1629,764.8 1631,760.5 1633,761.2 1635,757.6 1637,759.8 1639,761.0 1641,754.7 1643,747.8 1645,743.7 1647,743.2 1649,744.3 1651,746.7 1653,747.3 1655,749.1 1657,748.2 1659,747.1 1661,750.4 1663,753.4 1665,754.4 1667,755.4 1669,760.4 1671,762.4 1673,762.0 1675,759.6 1677,760.2 1679,756.2 1681,752.7 1683,748.0 1685,744.6 1687,741.9 1689,740.4 1691,740.8 1693,742.6 1695,742.9 1697,742.6 1699,743.0 1701,742.6 1703,745.0 1705,744.6 1707,746.7 1709,748.3 1711,740.3 1713,733.4 1715,725.0 1717,715.3 1719,701.8 1721,687.2 1723,673.1 1725,658.4 1727,651.5 1729,647.8 1731,646.6 1733,658.9 1735,668.5 1737,676.7 1739,681.6 1741,688.7 1743,692.2 1745,695.5 1747,702.9 1749,712.2 1751,719.6 1753,724.2 1755,734.0 1757,740.3 1759,741.2 1761,740.9 1763,739.2 1765,738.1 1767,740.0 1769,742.5 1771,745.7 1773,749.9 1775,752.7 1777,757.9 1779,764.5 1781,765.3 1783,763.8 1785,762.5 1787,761.0 1789,759.6 1791,761.1 1793,759.9 1795,759.6 1797,762.2 1799,764.5 1801,766.5 1803,763.2 1805,759.7 1807,751.6 1809,749.7 1811,745.8 1813,744.2 1815,742.6 1817,743.1 1819,740.9 1821,740.9 1823,739.9 1825,732.8 1827,725.0 1829,716.1 1831,705.3"/><polyline stroke="#ff0000" points="65,294.4 67,295.6 69,299.5 71,304.8 73,310.4 75,315.0 77,319.9 79,325.9 81,331.8 83,329.5 85,328.6 87,330.9 89,334.5 91,336.7 93,341.7 95,345.0 97,349.1 99,342.8 101,335.4 103,326.0 105,315.0 107,303.5 109,299.4 111,297.9 113,296.3 115,295.4 117,296.4 119,298.6 121,293.9 123,286.9 125,276.1 127,266.6 129,257.1 131,245.5 133,232.9 135,220.8 137,219.2 139,221.7 141,225.8 143,226.4 145,225.6 147,230.0 149,237.4 151,246.3 153,254.6 155,264.1 157,272.5 159,284.8 161,295.8 163,305.8 165,316.7 167,329.4 169,325.7 171,316.2 173,303.4 175,286.3 177,282.0 179,282.4 181,284.0 183,286.5 185,291.4 187,290.6 189,290.0 191,290.3 193,292.3 195,292.5 197,294.3 199,300.8 201,310.4 203,321.0 205,331.7 207,336.0 209,338.9 211,339.2 213,338.4 215,338.2 217,334.6 219,336.4 221,340.4 223,345.0 225,352.7 227,359.7 229,365.9 231,372.9 233,383.4 235,390.3 237,397.4 239,405.8 241,407.1 243,406.0 245,402.2 247,402.8 249,405.7 251,408.4 253,409.9 255,414.6 257,408.6 259,398.9 261,395.0 263,392.1 265,388.8 267,385.4 269,382.0 271,376.5 273,372.7 275,366.8 277,362.2 279,348.1 281,346.5 283,343.7 285,339.2 287,335.8 289,336.5 291,339.2 293,343.7 295,349.2 297,358.8 299,367.3 301,363.4 303,354.5 305,356.2 307,358.3 309,364.3 311,371.5 313,377.5 315,380.8 317,382.5 319,382.8 321,388.6 323,395.2 325,401.0 327,407.9 329,416.0 331,419.7 333,423.4 335,426.7 337,430.0 339,431.9 341,436.2 343,438.1 345,441.8 347,446.6 349,450.5 351,453.5 353,456.8 355,459.8 357,460.7 359,461.6 361,475.1 363,491.0 365,496.7 367,500.5 369,501.4 371,503.4 373,508.0 375,512.3 377,517.0 379,516.2 381,514.3 383,511.8 385,512.7 387,515.4 389,517.7 391,523.1 393,527.9 395,533.5 397,532.6 399,529.2 401,523.2 403,517.0 405,514.4 407,514.9 409,516.0 411,516.3 413,520.0 415,522.0 417,525.8 419,528.7 421,533.1 423,537.7 425,536.7 427,534.3 429,532.8 431,531.6 433,530.8 435,530.1 437,530.7 439,528.5 441,529.5 443,530.0 445,532.5 447,533.9 449,535.2 451,533.0 453,528.6 455,524.7 457,525.4 459,527.4 461,529.9 463,531.6 465,531.9 467,532.4 469,537.6 471,542.9 473,542.4 475,540.2 477,541.7 479,543.0 481,549.3 483,558.3 485,571.8 487,583.8 489,598.4 491,627.1 493,649.1 495,670.8 497,684.5 499,692.2 501,700.7 503,707.6 505,707.8 507,704.8 509,704.8 511,705.8 513,707.5 515,709.8 517,716.2 519,724.2 521,732.6 523,739.1 525,744.7 527,750.7 529,758.2 531,765.8 533,765.9 535,763.4 537,760.6 539,756.4 541,752.0 543,746.5 545,739.9 547,733.7 549,730.7 551,730.8 553,731.9 555,731.3 557,733.0 559,734.0 561,737.4 563,740.7 565,743.1 567,746.9 569,749.4 571,752.0 573,754.9 575,756.1 577,756.5 579,757.0 581,756.4 583,760.0 585,764.4 587,767.8 589,771.0 591,770.8 593,769.4 595,765.6 597,760.0 599,755.4 601,752.1 603,745.2 605,740.7 607,735.2 609,734.2 611,735.8 613,734.0 615,733.9 617,734.6 619,734.0 621,732.5 623,730.4 625,729.1 627,727.4 629,729.1 631,729.2 633,728.7 635,728.4 637,728.4 639,729.3 641,729.6 643,732.7 645,737.1 647,742.8 649,744.9 651,747.1 653,748.2 655,746.9 657,749.2 659,752.0 661,755.6 663,759.3 665,762.1 667,765.1 669,769.8 671,773.3 673,779.4 675,784.0 677,787.7 679,788.7 681,788.5 683,788.0 685,787.8 687,785.5 689,782.8 691,782.4 693,781.1 695,780.0 697,779.0 699,779.2 701,780.8 703,781.1 705,782.7 707,781.1 709,778.9 711,778.0 713,776.0 715,771.2 717,767.2 719,764.4 721,760.5 723,754.2 725,748.1 727,740.5 729,736.4 731,729.7 733,729.8 735,731.3 737,730.1 739,728.2 741,725.4 743,723.6 745,721.1 747,721.9 749,721.3 751,721.5 753,715.7 755,708.4 757,698.4 759,685.5 761,672.1 763,667.5 765,667.2 767,667.2 769,668.8 771,670.2 773,669.9 775,671.4 777,660.1 779,644.1 781,640.2 783,639.5 785,639.2 787,642.3 789,645.2 791,649.2 793,655.6 795,662.2 797,670.6 799,677.1 801,684.3 803,679.0 805,670.1 807,659.3 809,653.0 811,644.6 813,638.1 815,631.4 817,625.4 819,621.9 821,617.3 823,615.7 825,613.4 827,613.0 829,611.3 831,611.6 833,606.2 835,607.0 837,609.5 839,612.3 841,615.6 843,619.7 845,624.0 847,626.5 849,630.7 851,634.8 853,637.5 855,641.4 857,640.5 859,641.4 861,639.9 863,639.3 865,639.9 867,639.0 869,638.8 871,637.0 873,635.9 875,634.7 877,634.9 879,636.3 881,636.8 883,637.8 885,637.1 887,636.8 889,637.2 891,638.6 893,639.7 895,640.4 897,648.6 899,658.0 901,660.1 903,662.1 905,661.1 907,660.2 909,669.6 911,676.4 913,684.7 915,692.5 917,703.2 919,712.4 921,724.1 923,736.8 925,743.6 927,746.8 929,747.7 931,746.5 933,751.7 935,757.3 937,762.8 939,768.2 941,774.6 943,777.8 945,779.9 947,780.9 949,780.9 951,778.9 953,780.6 955,781.5 957,783.7 959,786.3 961,787.9 963,789.3 965,792.6 967,795.0 969,796.4 971,795.9 973,798.5 975,801.6 977,804.9 979,806.3 981,807.9 983,809.8 985,812.8 987,813.8 989,818.0 991,822.1 993,827.8 995,832.1 997,841.2 999,850.2 1001,860.2 1003,865.1 1005,869.0 1007,869.2 1009,871.3 1011,872.2 1013,871.7 1015,871.8 1017,870.0 1019,868.8 1021,866.4 1023,864.0 1025,863.7 1027,863.9 1029,862.5 1031,861.3 1033,858.8 1035,855.8 1037,849.0 1039,842.3 1041,831.2 1043,822.2 1045,811.6 1047,802.9 1049,794.5 1051,790.3 1053,788.7 1055,790.0 1057,790.6 1059,789.4 1061,788.6 1063,787.5 1065,789.2 1067,789.0 1069,790.3 1071,791.1 1073,790.3 1075,791.8 1077,795.1 1079,798.2 1081,801.6 1083,803.5 1085,808.2 1087,811.3 1089,813.5 1091,817.6 1093,819.4 1095,821.6 1097,820.5 1099,818.1 1101,820.1 1103,819.9 1105,819.5 1107,818.5 1109,818.4 1111,821.0 1113,821.8 1115,818.8 1117,815.0 1119,812.4 1121,805.3 1123,798.5 1125,790.6 1127,782.1 1129,772.2 1131,763.5 1133,755.5 1135,745.5 1137,734.7 1139,723.7 1141,714.3 1143,708.2 1145,703.4 1147,699.5 1149,696.2 1151,696.0 1153,692.8 1155,689.0 1157,685.2 1159,681.8 1161,680.0 1163,678.2 1165,680.8 1167,682.7 1169,685.2 1171,687.7 1173,692.3 1175,694.3 1177,696.8 1179,699.8 1181,702.2 1183,705.3 1185,707.4 1187,709.8 1189,712.7 1191,715.6 1193,719.9 1195,723.5 1197,726.8 1199,732.6 1201,738.0 1203,743.2 1205,747.8 1207,754.6 1209,758.6 1211,761.7 1213,766.4 1215,771.1 1217,776.8 1219,783.1 1221,789.0 1223,795.1 1225,802.3 1227,810.7 1229,819.3 1231,827.1 1233,836.7 1235,846.3 1237,855.8 1239,864.5 1241,869.3 1243,872.2 1245,876.3 1247,877.0 1249,879.2 1251,879.4 1253,879.9 1255,878.8 1257,876.3 1259,873.3 1261,870.8 1263,868.9 1265,865.1 1267,860.4 1269,854.9 1271,849.6 1273,845.0 1275,838.1 1277,832.2 1279,831.1 1281,829.6 1283,827.8 1285,829.8 1287,831.6 1289,834.9 1291,840.3 1293,846.2 1295,847.7 1297,851.7 1299,856.6 1301,859.0 1303,862.3 1305,866.6 1307,868.6 1309,871.6 1311,874.0 1313,874.7 1315,877.9 1317,878.3 1319,879.2 1321,880.4 1323,880.3 1325,879.1 1327,878.7 1329,878.0 1331,876.6 1333,872.3 1335,868.4 1337,863.6 1339,861.3 1341,860.5 1343,859.6 1345,859.1 1347,859.9 1349,860.9 1351,862.8 1353,861.9 1355,862.0 1357,860.3 1359,857.1 1361,854.0 1363,852.3 1365,852.4 1367,853.0 1369,851.7 1371,850.8 1373,846.8 1375,843.4 1377,837.1 1379,832.5 1381,826.4 1383,819.7 1385,812.6 1387,812.1 1389,811.9 1391,812.3 1393,815.2 1395,816.0 1397,816.6 1399,820.9 1401,822.0 1403,823.1 1405,825.3 1407,828.3 1409,832.5 1411,836.6 1413,840.5 1415,843.7 1417,843.2 1419,843.8 1421,844.9 1423,844.8 1425,843.1 1427,842.1 1429,837.7 1431,833.0 1433,826.7 1435,821.0 1437,815.5 1439,809.3 1441,803.8 1443,802.1 1445,800.3 1447,798.8 1449,798.0 1451,796.2 1453,794.2 1455,793.2 1457,794.8 1459,796.8 1461,799.2 1463,800.8 1465,802.3 1467,803.2 1469,806.5 1471,808.8 1473,809.2 1475,810.0 1477,810.7 1479,812.0 1481,814.2 1483,815.9 1485,817.4 1487,818.7 1489,823.5 1491,828.8 1493,834.7 1495,840.6 1497,840.8 1499,841.7 1501,843.6 1503,842.4 1505,842.7 1507,844.8 1509,845.9 1511,846.6 1513,849.4 1515,851.0 1517,852.8 1519,853.4 1521,855.1 1523,856.7 1525,858.6 1527,860.7 1529,862.7 1531,862.2 1533,861.9 1535,859.6 1537,858.9 1539,859.5 1541,859.3 1543,859.1 1545,859.9 1547,859.8 1549,861.4 1551,862.9 1553,862.4 1555,862.7 1557,863.7 1559,864.4 1561,864.7 1563,863.8 1565,858.3 1567,851.6 1569,845.5 1571,840.4 1573,837.3 1575,835.0 1577,832.8 1579,828.4 1581,826.7 1583,825.3 1585,825.8 1587,824.1 1589,819.5 1591,815.3 1593,811.4 1595,806.2 1597,800.9 1599,798.4 1601,798.2 1603,796.8 1605,797.8 1607,797.9 1609,796.3 1611,794.8 1613,790.7 1615,786.4 1617,788.0 1619,789.4 1621,786.7 1623,783.7 1625,780.3 1627,775.1 1629,770.4 1631,766.3 1633,765.5 1635,762.1 1637,762.6 1639,762.7 1641,758.1 1643,752.8 1645,748.9 1647,747.5 1649,747.3 1651,748.2 1653,748.3 1655,749.2 1657,748.6 1659,747.8 1661,749.8 1663,752.0 1665,753.0 1667,753.9 1669,757.6 1671,759.5 1673,759.9 1675,758.8 1677,759.4 1679,756.9 1681,754.4 1683,750.9 1685,748.0 1687,745.4 1689,743.6 1691,743.2 1693,743.9 1695,743.8 1697,743.4 1699,743.5 1701,743.1 1703,744.6 1705,744.4 1707,745.8 1709,747.1 1711,742.0 1713,737.0 1715,730.6 1717,722.9 1719,712.2 1721,700.2 1723,687.9 1725,674.8 1727,666.5 1729,660.7 1731,657.0 1733,663.0 1735,668.5 1737,673.9 1739,677.8 1741,683.4 1743,686.9 1745,690.3 1747,696.4 1749,704.0 1751,710.8 1753,715.8 1755,724.2 1757,730.6 1759,733.4 1761,734.9 1763,735.1 1765,735.3 1767,737.2 1769,739.5 1771,742.3 1773,745.8 1775,748.6 1777,753.0 1779,758.4 1781,760.3 1783,760.4 1785,760.3 1787,759.8 1789,759.1 1791,760.2 1793,759.6 1795,759.5 1797,761.2 1799,763.0 1801,764.7 1803,762.9 1805,760.6 1807,755.0 1809,753.0 1811,749.6 1813,747.7 1815,745.9 1817,745.5 1819,743.5 1821,742.9 1823,741.8 1825,736.6 1827,730.6 1829,723.4 1831,714.6"/><polyline stroke="#ff0000" points="65,293.6 67,294.7 69,298.1 71,302.7 73,307.6 75,311.9 77,316.4 79,322.0 81,327.5 83,326.4 85,326.3 87,328.6 89,331.9 91,334.2 93,338.7 95,342.0 97,345.9 99,341.3 101,335.5 103,327.8 105,318.5 107,308.4 109,304.2 111,302.1 113,300.0 115,298.6 117,298.8 119,300.2 121,296.1 123,290.0 125,280.6 127,272.0 129,263.2 131,252.6 133,241.0 135,229.6 137,226.7 139,227.4 141,229.7 143,229.5 145,228.3 147,231.4 149,237.2 151,244.5 153,251.6 155,259.9 157,267.6 159,278.5 161,288.7 163,298.2 165,308.5 167,320.4 169,318.9 171,312.4 173,302.7 175,288.8 177,284.8 179,284.6 181,285.5 183,287.3 185,291.2 187,290.5 189,290.0 191,290.3 193,291.9 195,292.1 197,293.7 199,299.2 201,307.3 203,316.6 205,326.1 207,330.6 209,334.0 211,335.1 213,335.2 215,335.6 217,333.1 219,334.9 221,338.4 223,342.5 225,349.3 227,355.6 229,361.5 231,368.0 233,377.4 235,384.2 237,391.1 239,399.2 241,401.4 243,401.5 245,399.3 247,400.3 249,403.1 251,405.8 253,407.5 255,411.8 257,407.4 259,399.7 261,396.3 263,393.7 265,390.7 267,387.6 269,384.4 271,379.5 273,375.8 275,370.4 277,366.0 279,353.7 281,351.5 283,348.3 285,343.7 287,340.1 289,339.9 291,341.5 293,344.8 295,349.1 297,357.0 299,364.3 301,361.6 303,354.7 305,356.0 307,357.8 309,362.8 311,369.0 313,374.4 315,377.6 317,379.6 319,380.4 321,385.5 323,391.5 325,396.9 327,403.3 329,410.8 331,414.8 333,418.7 335,422.3 337,425.7 339,428.1 341,432.3 343,434.6 345,438.2 347,442.8 349,446.7 351,449.9 353,453.2 355,456.3 357,457.7 359,458.9 361,470.5 363,484.3 365,490.2 367,494.5 369,496.3 371,498.9 373,503.5 375,507.8 377,512.4 379,512.6 381,511.7 383,510.2 385,511.2 387,513.7 389,515.8 391,520.6 393,525.0 395,530.1 397,530.0 399,527.7 401,523.1 403,518.0 405,515.7 407,515.9 409,516.6 411,516.7 413,519.7 415,521.4 417,524.6 419,527.2 421,531.1 423,535.2 425,534.8 427,533.2 429,532.2 431,531.3 433,530.7 435,530.2 437,530.7 439,528.9 441,529.6 443,530.0 445,532.0 447,533.3 449,534.5 451,532.8 453,529.2 455,526.0 457,526.3 459,527.8 461,529.8 463,531.2 465,531.4 467,531.9 469,536.3 471,540.8 473,540.8 475,539.3 477,540.7 479,541.9 481,547.2 483,555.0 485,566.6 487,577.4 489,590.5 491,615.5 493,635.6 495,655.8 497,669.7 499,678.7 501,688.1 503,696.0 505,698.3 507,697.6 509,698.9 511,700.8 513,703.1 515,705.7 517,711.7 519,719.1 521,726.9 523,733.3 525,738.9 527,744.9 529,752.1 531,759.4 533,760.6 535,759.6 537,758.0 539,755.0 541,751.7 543,747.3 545,741.7 547,736.3 549,733.4 551,733.0 553,733.5 555,732.7 557,733.8 559,734.5 561,737.2 563,739.9 565,742.1 567,745.4 569,747.7 571,750.1 573,752.8 575,754.2 577,754.9 579,755.6 581,755.3 583,758.5 585,762.4 587,765.5 589,768.5 591,768.8 593,768.0 595,765.2 597,760.7 599,756.8 601,753.8 603,747.9 605,743.7 607,738.7 609,737.2 611,738.0 613,736.1 615,735.6 617,735.9 619,735.2 621,733.7 623,731.8 625,730.4 627,728.8 629,729.9 631,729.9 633,729.4 635,729.0 637,728.9 639,729.6 641,729.7 643,732.2 645,735.9 647,740.8 649,742.9 651,745.0 653,746.3 655,745.6 657,747.8 659,750.3 661,753.6 663,756.9 665,759.7 667,762.5 669,766.8 671,770.2 673,775.8 675,780.2 677,783.9 679,785.4 681,785.9 683,785.9 685,786.2 687,784.5 689,782.6 691,782.2 693,781.2 695,780.3 697,779.4 699,779.5 701,780.8 703,781.0 705,782.3 707,781.1 709,779.3 711,778.5 713,776.7 715,772.7 717,769.2 719,766.5 721,762.9 723,757.3 725,751.7 727,744.9 729,740.7 731,734.5 733,733.7 735,734.2 737,732.7 739,730.7 741,727.9 743,726.0 745,723.5 747,723.7 749,722.9 751,722.8 753,717.8 755,711.4 757,702.7 759,691.4 761,679.3 763,674.2 765,672.8 767,671.8 769,672.2 771,672.8 773,672.1 775,672.9 777,663.4 779,649.7 781,645.5 783,644.0 785,642.9 787,644.7 789,646.7 791,649.7 793,654.8 795,660.4 797,667.6 799,673.5 801,680.0 803,676.4 805,669.7 807,660.9 809,655.4 811,648.1 813,642.2 815,635.9 817,630.2 819,626.5 821,621.9 823,619.7 825,617.2 827,616.2 829,614.2 831,613.9 833,609.0 835,609.2 837,610.8 839,612.9 841,615.4 843,618.8 845,622.5 847,624.9 849,628.6 851,632.3 853,635.0 855,638.6 857,638.4 859,639.6 861,638.6 863,638.4 865,639.0 867,638.4 869,638.4 871,637.0 873,636.1 875,635.1 877,635.2 879,636.3 881,636.6 883,637.5 885,637.0 887,636.8 889,637.1 891,638.3 893,639.2 895,639.9 897,646.7 899,654.7 901,657.0 903,659.2 905,658.9 907,658.6 909,666.5 911,672.7 913,680.2 915,687.3 917,697.1 919,705.7 921,716.5 923,728.3 925,735.4 927,739.5 929,741.5 931,741.7 933,746.8 935,752.3 937,757.7 939,763.1 941,769.2 943,772.8 945,775.5 947,777.0 949,777.7 951,776.7 953,778.5 955,779.6 957,781.7 959,784.2 961,785.9 963,787.4 965,790.4 967,792.8 969,794.4 971,794.3 973,796.8 975,799.6 977,802.7 979,804.3 981,805.9 983,807.8 985,810.6 987,811.8 989,815.7 991,819.4 993,824.6 995,828.7 997,836.7 999,844.9 1001,854.0 1003,859.2 1005,863.5 1007,864.6 1009,867.2 1011,868.7 1013,868.9 1015,869.5 1017,868.4 1019,867.8 1021,866.0 1023,864.1 1025,863.8 1027,864.0 1029,862.8 1031,861.7 1033,859.6 1035,857.0 1037,851.2 1039,845.4 1041,835.8 1043,827.5 1045,817.9 1047,809.6 1049,801.6 1051,796.8 1053,794.3 1055,794.3 1057,794.1 1059,792.5 1061,791.2 1063,789.8 1065,790.8 1067,790.3 1069,791.2 1071,791.7 1073,790.9 1075,792.0 1077,794.7 1079,797.3 1081,800.2 1083,802.0 1085,806.2 1087,809.1 1089,811.2 1091,815.0 1093,816.9 1095,819.2 1097,818.7 1099,817.1 1101,818.9 1103,819.0 1105,818.8 1107,818.1 1109,818.1 1111,820.3 1113,821.1 1115,818.7 1117,815.6 1119,813.4 1121,807.4 1123,801.5 1125,794.5 1127,786.8 1129,777.9 1131,769.7 1133,762.0 1135,752.6 1137,742.5 1139,732.1 1141,722.8 1143,716.3 1145,710.9 1147,706.4 1149,702.4 1151,701.1 1153,697.6 1155,693.6 1157,689.7 1159,686.1 1161,683.8 1163,681.6 1165,683.1 1167,684.3 1169,686.0 1171,687.9 1173,691.6 1175,693.4 1177,695.6 1179,698.3 1181,700.5 1183,703.4 1185,705.4 1187,707.8 1189,710.5 1191,713.3 1193,717.2 1195,720.6 1197,723.8 1199,729.1 1201,734.2 1203,739.1 1205,743.6 1207,750.0 1209,754.1 1211,757.4 1213,762.1 1215,766.7 1217,772.2 1219,778.1 1221,783.9 1223,789.8 1225,796.7 1227,804.6 1229,812.7 1231,820.3 1233,829.4 1235,838.5 1237,847.8 1239,856.3 1241,861.7 1243,865.5 1245,870.1 1247,871.8 1249,874.5 1251,875.5 1253,876.6 1255,876.3 1257,874.7 1259,872.5 1261,870.6 1263,869.1 1265,866.0 1267,862.0 1269,857.2 1271,852.4 1273,848.1 1275,841.9 1277,836.4 1279,834.8 1281,832.8 1283,830.8 1285,831.9 1287,832.9 1289,835.5 1291,839.8 1293,844.7 1295,846.2 1297,849.7 1299,854.1 1301,856.5 1303,859.6 1305,863.7 1307,865.9 1309,868.8 1311,871.2 1313,872.3 1315,875.3 1317,876.2 1319,877.3 1321,878.6 1323,878.8 1325,878.1 1327,878.0 1329,877.6 1331,876.5 1333,873.0 1335,869.6 1337,865.5 1339,863.3 1341,862.2 1343,861.2 1345,860.5 1347,860.9 1349,861.5 1351,863.0 1353,862.2 1355,862.2 1357,860.8 1359,858.1 1361,855.4 1363,853.8 1365,853.6 1367,853.8 1369,852.6 1371,851.7 1373,848.3 1375,845.2 1377,839.7 1379,835.5 1381,829.9 1383,823.8 1385,817.3 1387,816.0 1389,815.1 1391,814.9 1393,816.8 1395,817.2 1397,817.4 1399,820.8 1401,821.7 1403,822.7 1405,824.5 1407,827.2 1409,830.8 1411,834.4 1413,838.0 1415,841.1 1417,841.1 1419,842.0 1421,843.2 1423,843.4 1425,842.3 1427,841.6 1429,838.1 1431,834.2 1433,828.8 1435,823.8 1437,818.8 1439,813.1 1441,807.9 1443,805.8 1445,803.6 1447,801.8 1449,800.6 1451,798.6 1453,796.5 1455,795.3 1457,796.3 1459,797.6 1461,799.4 1463,800.7 1465,801.9 1467,802.7 1469,805.5 1471,807.6 1473,808.2 1475,808.9 1477,809.7 1479,811.0 1481,813.0 1483,814.6 1485,816.0 1487,817.3 1489,821.5 1491,826.2 1493,831.5 1495,837.0 1497,837.7 1499,839.1 1501,841.1 1503,840.6 1505,841.1 1507,843.1 1509,844.3 1511,845.2 1513,847.7 1515,849.4 1517,851.1 1519,851.9 1521,853.6 1523,855.1 1525,857.0 1527,859.0 1529,861.0 1531,860.9 1533,860.9 1535,859.1 1537,858.7 1539,859.2 1541,859.1 1543,859.0 1545,859.6 1547,859.6 1549,860.9 1551,862.2 1553,861.9 1555,862.3 1557,863.2 1559,863.8 1561,864.2 1563,863.5 1565,859.1 1567,853.5 1569,848.2 1571,843.4 1573,840.4 1575,837.9 1577,835.6 1579,831.5 1581,829.5 1583,827.9 1585,827.8 1587,826.0 1589,821.9 1591,818.1 1593,814.4 1595,809.6 1597,804.6 1599,801.9 1601,801.1 1603,799.4 1605,799.8 1607,799.5 1609,797.9 1611,796.4 1613,792.8 1615,788.9 1617,789.7 1619,790.6 1621,788.1 1623,785.4 1625,782.3 1627,777.7 1629,773.4 1631,769.5 1633,768.2 1635,765.0 1637,764.8 1639,764.6 1641,760.5 1643,755.7 1645,752.0 1647,750.2 1649,749.6 1651,749.9 1653,749.6 1655,750.2 1657,749.5 1659,748.7 1661,750.2 1663,751.9 1665,752.7 1667,753.5 1669,756.6 1671,758.4 1673,758.9 1675,758.1 1677,758.7 1679,756.8 1681,754.8 1683,751.9 1685,749.3 1687,747.0 1689,745.2 1691,744.6 1693,744.9 1695,744.6 1697,744.1 1699,744.1 1701,743.7 1703,744.8 1705,744.6 1707,745.7 1709,746.8 1711,742.7 1713,738.5 1715,733.0 1717,726.2 1719,716.9 1721,706.2 1723,695.0 1725,683.0 1727,674.8 1729,668.5 1731,664.1 1733,667.6 1735,671.3 1737,675.2 1739,678.2 1741,682.7 1743,685.7 1745,688.7 1747,694.0 1749,700.6 1751,706.8 1753,711.6 1755,719.3 1757,725.4 1759,728.6 1761,730.7 1763,731.6 1765,732.4 1767,734.5 1769,736.9 1771,739.6 1773,743.0 1775,745.8 1777,749.9 1779,754.9 1781,757.1 1783,757.8 1785,758.1 1787,758.1 1789,757.9 1791,759.0 1793,758.7 1795,758.8 1797,760.4 1799,762.0 1801,763.5 1803,762.2 1805,760.5 1807,755.9 1809,754.1 1811,751.2 1813,749.3 1815,747.5 1817,746.9 1819,745.0 1821,744.2 1823,743.1 1825,738.6 1827,733.3 1829,726.9 1831,719.1"/><polyline stroke="#ff0000" points="65,292.9 67,294.0 69,297.0 71,301.0 73,305.5 75,309.4 77,313.6 79,318.8 81,324.0 83,323.6 85,323.9 87,326.2 89,329.4 91,331.7 93,335.9 95,339.1 97,342.9 99,339.5 101,334.9 103,328.4 105,320.5 107,311.6 109,307.5 111,305.3 113,303.0 115,301.4 117,301.1 119,301.9 121,298.2 123,292.7 125,284.3 127,276.5 129,268.4 131,258.6 133,247.8 135,237.2 137,233.5 139,233.1 141,234.2 143,233.3 145,231.7 147,233.8 149,238.3 151,244.3 153,250.4 155,257.6 157,264.5 159,274.2 161,283.4 163,292.3 165,301.9 167,313.0 169,312.9 171,308.3 173,300.7 175,289.2 177,285.8 179,285.5 181,286.2 183,287.6 185,290.8 187,290.3 189,289.9 191,290.2 193,291.6 195,291.8 197,293.2 199,297.9 201,304.9 203,313.1 205,321.8 207,326.2 209,329.7 211,331.3 213,332.0 215,332.8 217,331.2 219,332.9 221,336.3 223,340.1 225,346.2 227,352.0 229,357.5 231,363.7 233,372.3 235,378.8 237,385.5 239,393.2 241,396.0 243,396.9 245,395.7 247,397.1 249,400.0 251,402.7 253,404.7 255,408.7 257,405.5 259,399.2 261,396.5 263,394.3 265,391.6 267,388.8 269,386.0 271,381.6 273,378.1 275,373.2 277,369.0 279,358.2 281,355.6 283,352.2 285,347.8 287,344.1 289,343.3 291,344.1 293,346.5 295,349.9 297,356.4 299,362.7 301,360.7 303,354.9 305,356.1 307,357.6 309,361.8 311,367.2 313,372.0 315,375.1 317,377.2 319,378.2 321,382.9 323,388.4 325,393.4 327,399.4 329,406.3 331,410.4 333,414.4 335,418.1 337,421.6 339,424.2 341,428.4 343,430.9 345,434.6 347,439.0 349,442.9 351,446.2 353,449.5 355,452.7 357,454.5 359,456.0 361,466.3 363,478.6 365,484.5 367,489.0 369,491.4 371,494.3 373,498.9 375,503.3 377,507.9 379,508.7 381,508.6 383,507.7 385,509.0 387,511.4 389,513.6 391,518.0 393,522.1 395,526.8 397,527.3 399,525.8 401,522.1 403,518.0 405,516.0 407,516.1 409,516.7 411,516.8 413,519.3 415,520.8 417,523.6 419,525.9 421,529.4 423,533.2 425,533.2 427,532.1 429,531.4 431,530.7 433,530.3 435,529.9 437,530.4 439,528.9 441,529.5 443,529.9 445,531.6 447,532.7 449,533.8 451,532.5 453,529.5 455,526.7 457,526.9 459,528.0 461,529.7 463,530.9 465,531.2 467,531.6 469,535.4 471,539.3 473,539.6 475,538.5 477,539.7 479,540.9 481,545.6 483,552.4 485,562.7 487,572.4 489,584.3 491,606.3 493,624.8 495,643.5 497,657.2 499,666.7 501,676.6 503,685.0 505,688.6 507,689.5 509,691.9 511,694.6 513,697.5 515,700.6 517,706.4 519,713.5 521,721.0 523,727.3 525,732.9 527,738.9 529,745.9 531,753.0 533,755.1 535,755.1 537,754.4 539,752.4 541,750.0 543,746.5 545,741.9 547,737.3 549,734.7 551,734.2 553,734.4 555,733.6 557,734.4 559,734.9 561,737.1 563,739.5 565,741.3 567,744.2 569,746.4 571,748.6 573,751.1 575,752.5 577,753.4 579,754.2 581,754.2 583,757.1 585,760.6 587,763.5 589,766.4 591,766.9 593,766.6 595,764.4 597,760.7 599,757.4 601,754.8 603,749.6 605,745.8 607,741.2 609,739.6 611,739.9 613,738.0 615,737.3 617,737.3 619,736.5 621,735.0 623,733.2 625,731.8 627,730.3 629,731.0 631,730.8 633,730.2 635,729.7 637,729.6 639,730.0 641,730.1 643,732.2 645,735.3 647,739.5 649,741.5 651,743.5 653,744.8 655,744.5 657,746.5 659,748.8 661,751.8 663,754.9 665,757.5 667,760.3 669,764.3 671,767.6 673,772.6 675,776.9 677,780.5 679,782.3 681,783.2 683,783.7 685,784.2 687,783.1 689,781.7 691,781.5 693,780.8 695,780.1 697,779.4 699,779.5 701,780.5 703,780.7 705,781.9 707,780.9 709,779.4 711,778.7 713,777.2 715,773.7 717,770.6 719,768.1 721,764.8 723,759.8 725,754.7 727,748.4 729,744.4 731,738.5 733,737.2 735,737.2 737,735.4 739,733.3 741,730.5 743,728.5 745,726.0 747,725.8 749,724.8 751,724.4 753,719.9 755,714.2 757,706.4 759,696.2 761,685.3 763,680.1 765,677.9 767,676.3 769,676.0 771,675.9 773,674.8 775,675.1 777,666.7 779,654.6 781,650.3 783,648.3 785,646.7 787,647.7 789,648.9 791,651.1 793,655.2 795,659.8 797,666.0 799,671.2 801,677.1 803,674.5 805,669.1 807,661.8 809,657.0 811,650.6 813,645.2 815,639.4 817,634.0 819,630.3 821,625.8 823,623.4 825,620.7 827,619.3 829,617.1 831,616.4 833,611.9 835,611.6 837,612.6 839,614.1 841,616.1 843,618.8 845,622.0 847,624.0 849,627.3 851,630.7 853,633.2 855,636.5 857,636.7 859,637.9 861,637.4 863,637.4 865,638.0 867,637.7 869,637.7 871,636.7 873,636.0 875,635.1 877,635.2 879,636.1 881,636.5 883,637.2 885,636.8 887,636.7 889,637.0 891,638.0 893,638.8 895,639.4 897,645.3 899,652.3 901,654.6 903,656.8 905,657.0 907,657.0 909,664.0 911,669.6 913,676.4 915,683.0 917,691.9 919,700.0 921,710.0 923,721.0 925,728.1 927,732.7 929,735.5 931,736.6 933,741.7 935,747.1 937,752.5 939,757.8 941,763.8 943,767.7 945,770.7 947,772.8 949,774.0 951,773.7 953,775.7 955,777.1 957,779.3 959,781.8 961,783.5 963,785.2 965,788.1 967,790.4 969,792.1 971,792.4 973,794.8 975,797.5 977,800.4 979,802.1 981,803.8 983,805.8 985,808.5 987,809.8 989,813.4 991,816.9 993,821.7 995,825.6 997,832.9 999,840.4 1001,848.8 1003,853.9 1005,858.4 1007,860.1 1009,863.0 1011,864.9 1013,865.7 1015,866.7 1017,866.2 1019,866.0 1021,864.8 1023,863.3 1025,863.2 1027,863.5 1029,862.5 1031,861.7 1033,859.9 1035,857.6 1037,852.6 1039,847.5 1041,839.0 1043,831.6 1045,822.8 1047,815.0 1049,807.4 1051,802.5 1053,799.5 1055,798.7 1057,797.8 1059,795.9 1061,794.3 1063,792.7 1065,793.1 1067,792.3 1069,792.7 1071,792.9 1073,792.0 1075,792.8 1077,795.0 1079,797.1 1081,799.6 1083,801.3 1085,804.9 1087,807.5 1089,809.6 1091,813.0 1093,815.0 1095,817.2 1097,817.1 1099,815.9 1101,817.6 1103,817.9 1105,817.9 1107,817.5 1109,817.6 1111,819.5 1113,820.3 1115,818.4 1117,815.9 1119,813.9 1121,808.8 1123,803.5 1125,797.3 1127,790.4 1129,782.3 1131,774.7 1133,767.4 1135,758.6 1137,749.2 1139,739.3 1141,730.4 1143,723.7 1145,718.0 1147,713.1 1149,708.7 1151,706.6 1153,702.8 1155,698.6 1157,694.5 1159,690.7 1161,688.1 1163,685.6 1165,686.3 1167,686.7 1169,687.8 1171,689.1 1173,692.1 1175,693.6 1177,695.4 1179,697.7 1181,699.7 1183,702.2 1185,704.1 1187,706.3 1189,708.8 1191,711.5 1193,715.0 1195,718.3 1197,721.4 1199,726.2 1201,730.9 1203,735.6 1205,740.0 1207,745.9 1209,750.0 1211,753.5 1213,758.0 1215,762.6 1217,767.8 1219,773.5 1221,779.1 1223,784.9 1225,791.4 1227,798.9 1229,806.7 1231,814.0 1233,822.7 1235,831.5 1237,840.3 1239,848.7 1241,854.5 1243,858.8 1245,863.7 1247,866.1 1249,869.3 1251,871.0 1253,872.6 1255,872.9 1257,872.1 1259,870.7 1261,869.3 1263,868.2 1265,865.7 1267,862.4 1269,858.3 1271,854.1 1273,850.2 1275,844.6 1277,839.6 1279,837.7 1281,835.6 1283,833.4 1285,834.0 1287,834.5 1289,836.4 1291,839.9 1293,844.1 1295,845.4 1297,848.5 1299,852.4 1301,854.7 1303,857.6 1305,861.4 1307,863.6 1309,866.4 1311,868.8 1313,870.1 1315,873.0 1317,874.1 1319,875.3 1321,876.8 1323,877.2 1325,876.9 1327,877.0 1329,876.8 1331,875.9 1333,873.1 1335,870.2 1337,866.6 1339,864.6 1341,863.5 1343,862.4 1345,861.7 1347,861.8 1349,862.2 1351,863.4 1353,862.6 1355,862.6 1357,861.3 1359,858.9 1361,856.5 1363,855.0 1365,854.6 1367,854.7 1369,853.5 1371,852.6 1373,849.6 1375,846.8 1377,841.9 1379,838.0 1381,832.9 1383,827.2 1385,821.2 1387,819.5 1389,818.2 1391,817.5 1393,818.7 1395,818.8 1397,818.7 1399,821.4 1401,822.1 1403,822.9 1405,824.4 1407,826.6 1409,829.8 1411,833.0 1413,836.3 1415,839.2 1417,839.5 1419,840.5 1421,841.7 1423,842.2 1425,841.4 1427,841.0 1429,838.1 1431,834.7 1433,830.1 1435,825.7 1437,821.1 1439,816.0 1441,811.2 1443,808.8 1445,806.5 1447,804.6 1449,803.1 1451,801.1 1453,798.9 1455,797.5 1457,798.0 1459,798.8 1461,800.2 1463,801.2 1465,802.1 1467,802.8 1469,805.1 1471,806.9 1473,807.5 1475,808.3 1477,809.1 1479,810.2 1481,812.0 1483,813.5 1485,814.9 1487,816.2 1489,819.9 1491,824.1 1493,828.9 1495,833.9 1497,835.0 1499,836.6 1501,838.7 1503,838.6 1505,839.4 1507,841.3 1509,842.6 1511,843.7 1513,846.0 1515,847.7 1517,849.4 1519,850.3 1521,852.0 1523,853.6 1525,855.4 1527,857.3 1529,859.3 1531,859.4 1533,859.6 1535,858.4 1537,858.1 1539,858.6 1541,858.6 1543,858.6 1545,859.2 1547,859.2 1549,860.4 1551,861.6 1553,861.4 1555,861.8 1557,862.7 1559,863.3 1561,863.7 1563,863.2 1565,859.5 1567,854.7 1569,850.0 1571,845.7 1573,842.8 1575,840.3 1577,838.0 1579,834.2 1581,832.1 1583,830.3 1585,829.9 1587,828.1 1589,824.3 1591,820.7 1593,817.1 1595,812.6 1597,807.9 1599,805.2 1601,804.0 1603,802.1 1605,802.0 1607,801.4 1609,799.8 1611,798.2 1613,794.9 1615,791.2 1617,791.6 1619,792.0 1621,789.7 1623,787.2 1625,784.3 1627,780.1 1629,776.1 1631,772.3 1633,770.8 1635,767.7 1637,767.2 1639,766.6 1641,762.8 1643,758.4 1645,754.8 1647,752.9 1649,751.9 1651,751.9 1653,751.3 1655,751.5 1657,750.7 1659,749.9 1661,751.0 1663,752.3 1665,752.9 1667,753.6 1669,756.2 1671,757.7 1673,758.3 1675,757.7 1677,758.3 1679,756.8 1681,755.1 1683,752.5 1685,750.3 1687,748.2 1689,746.5 1691,745.7 1693,745.8 1695,745.4 1697,744.9 1699,744.8 1701,744.3 1703,745.2 1705,744.9 1707,745.8 1709,746.7 1711,743.3 1713,739.6 1715,734.8 1717,728.8 1719,720.5 1721,710.9 1723,700.7 1725,689.7 1727,681.7 1729,675.3 1731,670.5 1733,672.6 1735,674.9 1737,677.7 1739,679.8 1741,683.3 1743,685.8 1745,688.3 1747,692.8 1749,698.7 1751,704.2 1753,708.6 1755,715.6 1757,721.3 1759,724.7 1761,727.1 1763,728.4 1765,729.6 1767,731.7 1769,734.2 1771,736.9 1773,740.2 1775,743.0 1777,746.9 1779,751.6 1781,754.0 1783,755.0 1785,755.8 1787,756.1 1789,756.2 1791,757.4 1793,757.4 1795,757.7 1797,759.2 1799,760.7 1801,762.2 1803,761.3 1805,760.0 1807,756.2 1809,754.6 1811,752.1 1813,750.4 1815,748.7 1817,748.0 1819,746.2 1821,745.4 1823,744.2 1825,740.3 1827,735.5 1829,729.8 1831,722.7"/><polyline stroke="#ff0000" points="65,292.2 67,293.2 69,295.7 71,299.1 73,303.0 75,306.5 77,310.3 79,314.9 81,319.6 83,319.8 85,320.5 87,322.8 89,325.9 91,328.2 93,332.0 95,335.1 97,338.7 99,336.4 101,333.1 103,328.0 105,321.6 107,314.3 109,310.7 111,308.4 113,306.2 115,304.4 117,303.9 119,304.2 121,300.9 123,296.0 125,288.8 127,281.9 129,274.6 131,265.9 133,256.3 135,246.5 137,242.4 139,240.9 141,240.9 143,239.3 145,237.2 147,238.2 149,241.4 151,245.9 153,250.6 155,256.4 157,262.2 159,270.3 161,278.4 163,286.2 165,294.8 167,304.6 169,305.6 171,302.8 173,297.3 175,288.4 177,285.8 179,285.5 181,286.0 183,287.2 185,289.8 187,289.6 189,289.3 191,289.6 193,290.8 195,291.1 197,292.3 199,296.2 201,302.2 203,309.2 205,316.7 207,321.0 209,324.5 211,326.4 213,327.6 215,328.8 217,328.0 219,329.8 221,332.9 223,336.4 225,341.8 227,347.1 229,352.2 231,357.9 233,365.6 235,371.7 237,378.1 239,385.2 241,388.5 243,390.2 245,390.1 247,391.9 249,394.9 251,397.7 253,400.0 255,403.8 257,401.8 259,397.2 261,395.2 263,393.6 265,391.5 267,389.3 269,386.9 271,383.2 273,380.2 275,375.9 277,372.2 279,363.0 281,360.3 283,357.0 285,352.8 287,349.2 289,347.9 291,348.0 293,349.4 295,351.8 297,356.9 299,361.9 301,360.4 303,355.8 305,356.6 307,357.7 309,361.1 311,365.6 313,369.7 315,372.5 317,374.5 319,375.7 321,379.8 323,384.7 325,389.2 327,394.6 329,400.8 331,404.8 333,408.7 335,412.4 337,416.1 339,418.9 341,422.9 343,425.7 345,429.3 347,433.6 349,437.4 351,440.7 353,444.2 355,447.4 357,449.5 359,451.4 361,460.3 363,471.0 365,476.8 367,481.4 369,484.3 371,487.6 373,492.1 375,496.5 377,501.1 379,502.7 381,503.3 383,503.3 385,504.9 387,507.3 389,509.6 391,513.7 393,517.6 395,522.0 397,522.9 399,522.2 401,519.8 403,516.7 405,515.2 407,515.4 409,516.0 411,516.1 413,518.3 415,519.6 417,522.0 419,524.1 421,527.2 423,530.5 425,530.8 427,530.2 429,529.9 431,529.6 433,529.4 435,529.2 437,529.6 439,528.5 441,529.1 443,529.4 445,530.9 447,531.9 449,532.9 451,531.9 453,529.6 455,527.3 457,527.3 459,528.2 461,529.5 463,530.6 465,530.8 467,531.2 469,534.3 471,537.7 473,538.1 475,537.4 477,538.5 479,539.7 481,543.6 483,549.4 485,558.1 487,566.6 489,577.0 491,595.8 493,612.1 495,628.9 497,641.8 499,651.5 501,661.4 503,670.2 505,675.0 507,677.4 509,680.8 511,684.4 513,688.0 515,691.7 517,697.6 519,704.4 521,711.6 523,717.9 525,723.7 527,729.7 529,736.6 531,743.5 533,746.4 535,747.4 537,747.8 539,747.1 541,745.8 543,743.5 545,740.1 547,736.6 549,734.5 551,734.1 553,734.3 555,733.7 557,734.3 559,734.7 561,736.5 563,738.5 565,740.2 567,742.7 569,744.6 571,746.7 573,749.0 575,750.4 577,751.3 579,752.2 581,752.5 583,755.0 585,758.1 587,760.8 589,763.5 591,764.3 593,764.3 595,762.8 597,760.0 599,757.5 601,755.3 603,751.0 605,747.8 607,743.8 609,742.2 611,742.1 613,740.3 615,739.4 617,739.1 619,738.2 621,736.9 623,735.1 625,733.8 627,732.3 629,732.6 631,732.2 633,731.6 635,731.0 637,730.7 639,730.9 641,730.9 643,732.5 645,735.0 647,738.4 649,740.2 651,742.0 653,743.2 655,743.2 657,744.9 659,747.0 661,749.7 663,752.5 665,754.9 667,757.5 669,761.1 671,764.1 673,768.7 675,772.6 677,776.1 679,778.1 681,779.4 683,780.2 685,781.1 687,780.6 689,779.7 691,779.9 693,779.5 695,779.1 697,778.6 699,778.8 701,779.7 703,780.0 705,781.1 707,780.4 709,779.2 711,778.6 713,777.4 715,774.6 717,771.9 719,769.7 721,766.9 723,762.5 725,758.0 727,752.5 729,748.7 731,743.4 733,741.8 735,741.1 737,739.2 739,737.0 741,734.3 743,732.2 745,729.7 747,729.1 749,727.8 751,727.1 753,723.1 755,718.1 757,711.3 759,702.4 761,692.8 763,687.6 765,684.9 767,682.7 769,681.6 771,680.9 773,679.3 775,679.0 777,671.7 779,661.2 781,656.9 783,654.5 785,652.4 787,652.5 789,652.9 791,654.1 793,657.1 795,660.6 797,665.6 799,669.9 801,674.8 803,673.0 805,668.8 807,662.9 809,658.8 811,653.4 813,648.7 815,643.5 817,638.7 819,635.0 821,630.8 823,628.2 825,625.4 827,623.7 829,621.4 831,620.3 833,616.1 835,615.3 837,615.7 839,616.5 841,617.8 843,619.8 845,622.3 847,623.9 849,626.6 851,629.4 853,631.6 855,634.5 857,634.9 859,636.1 861,635.9 863,636.1 865,636.8 867,636.7 869,636.8 871,636.1 873,635.6 875,634.9 877,635.0 879,635.8 881,636.1 883,636.8 885,636.5 887,636.4 889,636.7 891,637.6 893,638.3 895,638.8 897,643.7 899,649.6 901,651.8 903,654.0 905,654.4 907,654.7 909,660.7 911,665.7 913,671.7 915,677.7 917,685.6 919,693.0 921,702.0 923,711.9 925,718.8 927,723.7 929,727.1 931,729.0 933,734.1 935,739.5 937,744.8 939,750.1 941,755.9 943,760.1 945,763.5 947,766.1 949,767.9 951,768.4 953,770.7 955,772.4 957,774.8 959,777.4 961,779.4 963,781.2 965,784.1 967,786.5 969,788.4 971,789.1 973,791.4 975,794.1 977,796.9 979,798.7 981,800.5 983,802.5 985,805.1 987,806.6 989,809.9 991,813.2 993,817.5 995,821.2 997,827.7 999,834.4 1001,842.0 1003,847.0 1005,851.5 1007,853.8 1009,856.9 1011,859.2 1013,860.6 1015,862.0 1017,862.2 1019,862.5 1021,862.0 1023,861.2 1025,861.3 1027,861.8 1029,861.2 1031,860.7 1033,859.4 1035,857.6 1037,853.5 1039,849.2 1041,842.1 1043,835.7 1045,828.1 1047,821.1 1049,814.1 1051,809.3 1053,806.0 1055,804.6 1057,803.1 1059,800.9 1061,799.0 1063,797.1 1065,796.8 1067,795.7 1069,795.6 1071,795.4 1073,794.4 1075,794.8 1077,796.3 1079,797.8 1081,799.8 1083,801.1 1085,804.1 1087,806.3 1089,808.1 1091,811.1 1093,812.9 1095,815.0 1097,815.2 1099,814.5 1101,816.1 1103,816.5 1105,816.7 1107,816.4 1109,816.7 1111,818.3 1113,819.1 1115,817.8 1117,815.8 1119,814.2 1121,810.0 1123,805.6 1125,800.3 1127,794.3 1129,787.2 1131,780.4 1133,773.8 1135,765.9 1137,757.2 1139,748.3 1141,739.9 1143,733.3 1145,727.4 1147,722.2 1149,717.5 1151,714.8 1153,710.6 1155,706.2 1157,702.0 1159,697.9 1161,694.9 1163,692.0 1165,691.8 1167,691.5 1169,691.8 1171,692.3 1173,694.3 1175,695.2 1177,696.5 1179,698.3 1181,699.8 1183,701.8 1185,703.5 1187,705.3 1189,707.5 1191,709.8 1193,712.9 1195,715.8 1197,718.6 1199,722.9 1201,727.1 1203,731.4 1205,735.5 1207,740.9 1209,744.8 1211,748.3 1213,752.6 1215,757.0 1217,762.0 1219,767.3 1221,772.7 1223,778.1 1225,784.3 1227,791.3 1229,798.5 1231,805.5 1233,813.6 1235,821.9 1237,830.3 1239,838.4 1241,844.3 1243,849.1 1245,854.3 1247,857.4 1249,861.1 1251,863.5 1253,865.7 1255,866.9 1257,867.0 1259,866.4 1261,865.9 1263,865.4 1265,863.7 1267,861.3 1269,858.1 1271,854.7 1273,851.5 1275,846.8 1277,842.4 1279,840.5 1281,838.5 1283,836.3 1285,836.4 1287,836.6 1289,837.8 1291,840.5 1293,843.8 1295,844.9 1297,847.5 1299,850.8 1301,852.9 1303,855.5 1305,858.8 1307,860.9 1309,863.5 1311,865.9 1313,867.3 1315,870.0 1317,871.2 1319,872.6 1321,874.1 1323,874.8 1325,874.8 1327,875.2 1329,875.2 1331,874.7 1333,872.6 1335,870.3 1337,867.4 1339,865.6 1341,864.6 1343,863.6 1345,862.8 1347,862.8 1349,863.0 1351,863.8 1353,863.2 1355,863.1 1357,862.0 1359,860.0 1361,857.9 1363,856.5 1365,856.0 1367,855.9 1369,854.8 1371,853.9 1373,851.2 1375,848.8 1377,844.6 1379,841.0 1381,836.5 1383,831.5 1385,826.0 1387,824.1 1389,822.4 1391,821.4 1393,821.9 1395,821.5 1397,821.1 1399,823.0 1401,823.3 1403,823.8 1405,824.9 1407,826.7 1409,829.2 1411,831.9 1413,834.7 1415,837.3 1417,837.8 1419,838.8 1421,840.0 1423,840.6 1425,840.1 1427,840.0 1429,837.7 1431,835.1 1433,831.3 1435,827.5 1437,823.6 1439,819.1 1441,814.8 1443,812.5 1445,810.1 1447,808.1 1449,806.5 1451,804.4 1453,802.2 1455,800.7 1457,800.7 1459,801.0 1461,801.8 1463,802.4 1465,803.0 1467,803.5 1469,805.3 1471,806.7 1473,807.2 1475,807.9 1477,808.6 1479,809.6 1481,811.1 1483,812.4 1485,813.7 1487,814.9 1489,818.1 1491,821.8 1493,825.9 1495,830.4 1497,831.7 1499,833.4 1501,835.5 1503,835.8 1505,836.8 1507,838.7 1509,840.1 1511,841.2 1513,843.5 1515,845.1 1517,846.9 1519,847.9 1521,849.6 1523,851.1 1525,852.9 1527,854.8 1529,856.7 1531,857.2 1533,857.6 1535,856.8 1537,856.8 1539,857.4 1541,857.5 1543,857.7 1545,858.3 1547,858.4 1549,859.5 1551,860.6 1553,860.6 1555,861.0 1557,861.8 1559,862.4 1561,862.8 1563,862.5 1565,859.6 1567,855.7 1569,851.8 1571,848.1 1573,845.4 1575,843.1 1577,840.9 1579,837.4 1581,835.3 1583,833.4 1585,832.7 1587,830.9 1589,827.4 1591,824.1 1593,820.8 1595,816.7 1597,812.4 1599,809.6 1601,808.1 1603,806.0 1605,805.4 1607,804.5 1609,802.8 1611,801.2 1613,798.1 1615,794.7 1617,794.6 1619,794.6 1621,792.4 1623,790.0 1625,787.3 1627,783.5 1629,779.8 1631,776.3 1633,774.6 1635,771.6 1637,770.6 1639,769.7 1641,766.3 1643,762.2 1645,758.9 1647,756.8 1649,755.5 1651,755.0 1653,754.2 1655,754.0 1657,753.0 1659,752.1 1661,752.7 1663,753.5 1665,753.9 1667,754.3 1669,756.3 1671,757.6 1673,758.1 1675,757.6 1677,758.1 1679,756.9 1681,755.5 1683,753.4 1685,751.4 1687,749.6 1689,748.0 1691,747.2 1693,747.1 1695,746.6 1697,746.1 1699,745.8 1701,745.3 1703,745.9 1705,745.6 1707,746.3 1709,746.9 1711,744.1 1713,741.0 1715,736.9 1717,731.8 1719,724.7 1721,716.3 1723,707.4 1725,697.6 1727,690.1 1729,683.9 1731,678.9 1733,679.5 1735,680.5 1737,682.1 1739,683.3 1741,685.7 1743,687.4 1745,689.2 1747,692.8 1749,697.5 1751,702.2 1753,706.0 1755,712.0 1757,717.1 1759,720.4 1761,722.9 1763,724.5 1765,725.9 1767,728.1 1769,730.6 1771,733.3 1773,736.4 1775,739.1 1777,742.8 1779,747.1 1781,749.6 1783,751.0 1785,752.1 1787,752.8 1789,753.3 1791,754.7 1793,755.0 1795,755.5 1797,757.0 1799,758.5 1801,760.0 1803,759.6 1805,758.7 1807,755.8 1809,754.6 1811,752.5 1813,751.1 1815,749.6 1817,748.9 1819,747.4 1821,746.5 1823,745.5 1825,742.1 1827,738.0 1829,733.0 1831,726.9"/></g><line x1="76.5" y1="960" x2="76.5" y2="981" stroke="#000" stroke-width="1.6"/><text x="77.5" y="977" class="ml">Dec</text><line x1="117.5" y1="960" x2="117.5" y2="981" stroke="#000" stroke-width="1.6"/><text x="119.0" y="977" class="ml">2018</text><line x1="159.5" y1="960" x2="159.5" y2="981" stroke="#000" stroke-width="1.6"/><line x1="198.5" y1="960" x2="198.5" y2="981" stroke="#000" stroke-width="1.6"/><text x="200.0" y="977" class="ml">Mar</text><line x1="237.5" y1="960" x2="237.5" y2="981" stroke="#000" stroke-width="1.6"/><text x="239.0" y="977" class="ml">Apr</text><line x1="281.5" y1="960" x2="281.5" y2="981" stroke="#000" stroke-width="1.6"/><text x="282.6" y="977" class="ml">May</text><line x1="326.5" y1="960" x2="326.5" y2="981" stroke="#000" stroke-width="1.6"/><text x="327.8" y="977" class="ml">Jun</text><line x1="368.5" y1="960" x2="368.5" y2="981" stroke="#000" stroke-width="1.6"/><text x="370.0" y="977" class="ml">Jul</text><line x1="413.5" y1="960" x2="413.5" y2="981" stroke="#000" stroke-width="1.6"/><text x="415.0" y="977" class="ml">Aug</text><line x1="456.5" y1="960" x2="456.5" y2="981" stroke="#000" stroke-width="1.6"/><text x="457.5" y="977" class="ml">Sep</text><line x1="493.5" y1="960" x2="493.5" y2="981" stroke="#000" stroke-width="1.6"/><text x="495.0" y="977" class="ml">Oct</text><line x1="536.5" y1="960" x2="536.5" y2="981" stroke="#000" stroke-width="1.6"/><text x="537.5" y="977" class="ml">Nov</text><line x1="577.5" y1="960" x2="577.5" y2="981" stroke="#000" stroke-width="1.6"/><text x="579.0" y="977" class="ml">Dec</text><line x1="618.5" y1="960" x2="618.5" y2="981" stroke="#000" stroke-width="1.6"/><text x="620.0" y="977" class="ml">2019</text><line x1="664.5" y1="960" x2="664.5" y2="981" stroke="#000" stroke-width="1.6"/><text x="666.4" y="977" class="ml">Feb</text><line x1="706.5" y1="960" x2="706.5" y2="981" stroke="#000" stroke-width="1.6"/><text x="707.6" y="977" class="ml">Mar</text><line x1="744.5" y1="960" x2="744.5" y2="981" stroke="#000" stroke-width="1.6"/><text x="746.4" y="977" class="ml">Apr</text><line x1="783.5" y1="960" x2="783.5" y2="981" stroke="#000" stroke-width="1.6"/><text x="785.0" y="977" class="ml">May</text><line x1="828.5" y1="960" x2="828.5" y2="981" stroke="#000" stroke-width="1.6"/><text x="830.0" y="977" class="ml">Jun</text><line x1="867.5" y1="960" x2="867.5" y2="981" stroke="#000" stroke-width="1.6"/><text x="868.8" y="977" class="ml">Jul</text><line x1="915.5" y1="960" x2="915.5" y2="981" stroke="#000" stroke-width="1.6"/><text x="916.8" y="977" class="ml">Aug</text><line x1="956.5" y1="960" x2="956.5" y2="981" stroke="#000" stroke-width="1.6"/><text x="957.7" y="977" class="ml">Sep</text><line x1="994.5" y1="960" x2="994.5" y2="981" stroke="#000" stroke-width="1.6"/><text x="996.2" y="977" class="ml">Oct</text><line x1="1036.5" y1="960" x2="1036.5" y2="981" stroke="#000" stroke-width="1.6"/><text x="1037.8" y="977" class="ml">Nov</text><line x1="1076.5" y1="960" x2="1076.5" y2="981" stroke="#000" stroke-width="1.6"/><text x="1077.5" y="977" class="ml">Dec</text><line x1="1120.5" y1="960" x2="1120.5" y2="981" stroke="#000" stroke-width="1.6"/><text x="1121.5" y="977" class="ml">2020</text><line x1="1165.5" y1="960" x2="1165.5" y2="981" stroke="#000" stroke-width="1.6"/><text x="1167.0" y="977" class="ml">Feb</text><line x1="1207.5" y1="960" x2="1207.5" y2="981" stroke="#000" stroke-width="1.6"/><text x="1209.0" y="977" class="ml">Mar</text><line x1="1249.5" y1="960" x2="1249.5" y2="981" stroke="#000" stroke-width="1.6"/><text x="1251.0" y="977" class="ml">Apr</text><line x1="1287.5" y1="960" x2="1287.5" y2="981" stroke="#000" stroke-width="1.6"/><text x="1289.0" y="977" class="ml">May</text><line x1="1325.5" y1="960" x2="1325.5" y2="981" stroke="#000" stroke-width="1.6"/><text x="1327.0" y="977" class="ml">Jun</text><line x1="1371.5" y1="960" x2="1371.5" y2="981" stroke="#000" stroke-width="1.6"/><text x="1372.6" y="977" class="ml">Jul</text><line x1="1417.5" y1="960" x2="1417.5" y2="981" stroke="#000" stroke-width="1.6"/><text x="1418.8" y="977" class="ml">Aug</text><line x1="1461.5" y1="960" x2="1461.5" y2="981" stroke="#000" stroke-width="1.6"/><text x="1462.6" y="977" class="ml">Sep</text><line x1="1505.5" y1="960" x2="1505.5" y2="981" stroke="#000" stroke-width="1.6"/><text x="1507.4" y="977" class="ml">Oct</text><line x1="1548.5" y1="960" x2="1548.5" y2="981" stroke="#000" stroke-width="1.6"/><text x="1550.0" y="977" class="ml">Nov</text><line x1="1589.5" y1="960" x2="1589.5" y2="981" stroke="#000" stroke-width="1.6"/><text x="1591.3" y="977" class="ml">Dec</text><line x1="1634.5" y1="960" x2="1634.5" y2="981" stroke="#000" stroke-width="1.6"/><text x="1636.4" y="977" class="ml">2021</text><line x1="1676.5" y1="960" x2="1676.5" y2="981" stroke="#000" stroke-width="1.6"/><line x1="1716.5" y1="960" x2="1716.5" y2="981" stroke="#000" stroke-width="1.6"/><text x="1717.6" y="977" class="ml">Mar</text><line x1="1760.5" y1="960" x2="1760.5" y2="981" stroke="#000" stroke-width="1.6"/><text x="1761.6" y="977" class="ml">Apr</text><line x1="1798.5" y1="960" x2="1798.5" y2="981" stroke="#000" stroke-width="1.6"/><text x="1800.2" y="977" class="ml">May</text><line x1="1839.5" y1="960" x2="1839.5" y2="981" stroke="#000" stroke-width="1.6"/><text x="1841.3" y="977" class="ml">Ju</text>
<path d="M5.5 60 V86.5 H2" stroke="#b4b4b4" stroke-width="1.2" fill="none"/><line x1="4.3" y1="60" x2="4.3" y2="86" stroke="#fff" stroke-width="1"/><path d="M25.5 65.5 H33.5 L37.5 69.5 V81.5 H25.5 Z" fill="#fff" stroke="#000" stroke-width="1.3"/><path d="M33.5 65.5 V69.5 H37.5" fill="none" stroke="#000" stroke-width="1"/><path d="M51.5 69 H57 L59 71 H66 V74" fill="#ffff80" stroke="#000" stroke-width="1.2"/><path d="M51.5 69 V81 L56 74 H70 L65.5 81 H51.5 Z" fill="#808000" stroke="#000" stroke-width="1.2"/><path d="M51.5 70 V80 L55 74 H57 L52 81Z" fill="#ffff60"/><path d="M62 68 Q65 63 69 67" fill="none" stroke="#000" stroke-width="1.3"/><path d="M67 65.5 L70.5 68.5 L67 70Z" fill="#000"/><rect x="83" y="64.5" width="17" height="17" fill="#808000" stroke="#000" stroke-width="1.3"/><rect x="86" y="65.5" width="11" height="7" fill="#e8e8e8"/><rect x="86" y="76" width="11" height="5.5" fill="#000"/><rect x="93" y="77" width="2.5" height="4" fill="#fff"/><line x1="109.5" y1="63" x2="109.5" y2="85" stroke="#a0a0a0" stroke-width="1.3"/><path d="M123 65.5 H135 L136 70 H122 Z" fill="#fff" stroke="#000" stroke-width="1.2"/><path d="M119.5 72 Q120 69.5 123 69.5 H136 Q139 70 139 73 V80.5 H119.5 Z" fill="#e0e0e0" stroke="#000" stroke-width="1.4"/><rect x="121" y="76" width="16" height="2" fill="#c8c8c8" stroke="#000" stroke-width="0.8"/><rect x="127" y="76.5" width="4" height="1.5" fill="#ff0"/><rect x="121" y="80.5" width="16" height="1.5" fill="#888"/><path d="M149.5 64.5 H158 L162.5 69 V81.5 H149.5 Z" fill="#fff" stroke="#000" stroke-width="1.3"/><circle cx="163" cy="74" r="4.2" fill="#5ad8f0" stroke="#000" stroke-width="1.5"/><circle cx="162" cy="73" r="1.5" fill="#fff"/><line x1="166" y1="77" x2="169.5" y2="81" stroke="#000" stroke-width="2.2"/><line x1="177.5" y1="63" x2="177.5" y2="85" stroke="#a0a0a0" stroke-width="1.3"/><path d="M194 65 L198 76 M201 65 L196 76" stroke="#a8a8a8" stroke-width="1.2" fill="none"/><circle cx="194" cy="79" r="2.6" fill="none" stroke="#a8a8a8" stroke-width="1.2"/><circle cx="200" cy="79" r="2.6" fill="none" stroke="#a8a8a8" stroke-width="1.2"/><path d="M217.5 65.5 H224 L226 67.5 V77.5 H217.5 Z" fill="#fff" stroke="#000" stroke-width="1.2"/><path d="M219 69h5M219 71h5M219 73h5" stroke="#000" stroke-width="0.9"/><path d="M225.5 69.5 H232 L235.5 73 V81.5 H225.5 Z" fill="#fff" stroke="#000080" stroke-width="1.4"/><path d="M227 74h6M227 76.5h6M227 79h6" stroke="#000" stroke-width="1"/><rect x="246.5" y="66.5" width="17" height="14" rx="2" fill="#b0b0b0"/><rect x="252" y="65" width="6" height="3" fill="#c8c8c8"/><rect x="255" y="74" width="11" height="8" fill="#c9c9c9" stroke="#a9a9a9" stroke-width="1"/><line x1="274.5" y1="63" x2="274.5" y2="85" stroke="#a0a0a0" stroke-width="1.3"/><path d="M289.5 73 Q295 67.5 299 70 Q302 72 300 77" fill="none" stroke="#000080" stroke-width="1.7"/><path d="M286.5 70 L287 77 L293 76.5 Z" fill="#000080"/><line x1="312" y1="63" x2="312" y2="85" stroke="#a0a0a0" stroke-width="1.3"/><circle cx="330.5" cy="73" r="6.3" fill="none" stroke="#000" stroke-width="1.3"/><path d="M321 73.2h19M330.5 64v18" stroke="#0000c8" stroke-width="1.5"/><rect x="351.5" y="70.5" width="10" height="11" fill="#fff" stroke="#000" stroke-width="1.3"/><circle cx="361" cy="70.5" r="5" fill="#fff" fill-opacity="0.4" stroke="#000" stroke-width="1.4"/><rect x="356.5" y="69" width="6" height="3" fill="#5ad8f0"/><line x1="364.5" y1="74.5" x2="370" y2="81" stroke="#000" stroke-width="2"/><line x1="379.5" y1="63" x2="379.5" y2="85" stroke="#a0a0a0" stroke-width="1.3"/><rect x="384.5" y="59.5" width="218" height="27" fill="#fff" stroke="#adadad" stroke-width="1"/><rect x="390.5" y="65.5" width="14" height="14" fill="#a0a0a0" stroke="#404040" stroke-width="1"/><path d="M392 76 L395 72 L397 75 L400 70 L403 73" fill="none" stroke="#000" stroke-width="1"/><path d="M587 70.5 L591.5 75 L596 70.5" fill="none" stroke="#333" stroke-width="1.3"/><text x="410" y="78" class="rsi">Relative Strength Index</text><line x1="607.5" y1="62" x2="607.5" y2="85" stroke="#a0a0a0" stroke-width="1.3"/><rect x="618" y="64.5" width="13" height="16" rx="5" fill="#fff" stroke="#000" stroke-width="1.5"/><circle cx="625" cy="70" r="2" fill="#e0c000" stroke="#000" stroke-width="0.6"/><path d="M621 78 Q625 71 629 78Z" fill="#e0c000" stroke="#000" stroke-width="0.6"/><path d="M624 76h7v6h-7z" fill="#000"/><path d="M631 78h3v3h-3z" fill="#666"/><path d="M650 68 Q656 62 662 68Z" fill="#000"/><rect x="648" y="67.5" width="16" height="1.5" fill="#000"/><circle cx="655.5" cy="66" r="1" fill="#36f"/><path d="M651 69 h10 v6 q-5 4 -10 0z" fill="#eee" stroke="#777" stroke-width="0.9"/><path d="M648 82 q1-6 7.5-6 q6.5 0 7.5 6" fill="none" stroke="#999" stroke-width="1.2" stroke-dasharray="1.2 0.8"/><text x="677" y="79" font-family="Liberation Serif" font-style="italic" font-size="19" fill="#000">f</text><text x="686" y="81.5" font-family="Liberation Sans" font-size="9" fill="#000">(x)</text><path d="M717 64 v3 M714.5 67.5 h5 l-1 8 h-3z M719 71 l3 3 -2 2" fill="#000" stroke="#000" stroke-width="1.3"/><path d="M711 78 q-1 -4 4 -6" fill="none" stroke="#000" stroke-width="1.5"/><path d="M709 82.5 L712 79 H726 V82.5Z" fill="#000"/><rect x="717" y="80" width="3" height="1.3" fill="#ee0"/><text x="739.5" y="81" font-family="Liberation Sans" font-weight="bold" font-size="17" fill="#008c00">$</text><path d="M769 67.5h5v3h1v10.5h-7v-10.5h1z M779 67.5h5v3h1v10.5h-7v-10.5h1z M774 73h5v4h-5z" fill="#000"/><rect x="770" y="77" width="2" height="2.5" fill="#fff"/><rect x="780" y="77" width="2" height="2.5" fill="#fff"/><path d="M796 64 L796 78 L799 75 L802 81.5 L804 80.5 L801 74 L805 74 Z" fill="#000"/><text x="804.5" y="79" font-family="Liberation Sans" font-weight="bold" font-size="19" fill="#1010a0">?</text><line x1="830.5" y1="56" x2="830.5" y2="89" stroke="#b9b9b9" stroke-width="1.5"/><path d="M835.5 60 V86.5 H832" stroke="#b4b4b4" stroke-width="1.2" fill="none"/><line x1="834.3" y1="60" x2="834.3" y2="86" stroke="#fff" stroke-width="1"/><rect x="853" y="67" width="9" height="7" fill="#fff" stroke="#000080" stroke-width="1.5"/><rect x="857" y="71" width="9" height="7" fill="#fff" stroke="#000080" stroke-width="1.5"/><rect x="862" y="74.5" width="10" height="8" fill="#fff" stroke="#000080" stroke-width="1.5"/><path d="M853 68h9M857 72h9M862 75.5h10" stroke="#000080" stroke-width="2"/><rect x="884.25" y="64.75" width="18.5" height="17.5" fill="#fff" stroke="#000080" stroke-width="1.5"/><rect x="883.5" y="64" width="20" height="2.5" fill="#000080"/><rect x="892.5" y="64" width="2" height="18" fill="#000080"/><rect x="913.25" y="64.75" width="18.5" height="17.5" fill="#fff" stroke="#000080" stroke-width="1.5"/><rect x="912.5" y="64" width="20" height="2.5" fill="#000080"/><rect x="912.5" y="72" width="20" height="3" fill="#000080"/><rect x="944.25" y="64.75" width="18.5" height="17.5" fill="#fff" stroke="#000080" stroke-width="1.5"/><rect x="943.5" y="64" width="20" height="2.5" fill="#000080"/><rect x="952.5" y="64" width="2" height="18" fill="#000080"/><rect x="943.5" y="72" width="20" height="2.5" fill="#000080"/><rect x="973.75" y="64.75" width="18.5" height="17.5" fill="#fff" stroke="#000080" stroke-width="1.5"/><rect x="973" y="64" width="20" height="2.5" fill="#000080"/><rect x="982" y="64" width="1.5" height="18" fill="#000080"/><rect x="973" y="72" width="20" height="2" fill="#000080"/><circle cx="983" cy="73" r="4.5" fill="#f0e000" stroke="#505000" stroke-width="2" stroke-dasharray="2 1.2"/><circle cx="983" cy="73" r="1.5" fill="#555"/><path d="M986 69 l3 1.5 -3 1.5z" fill="#e00"/><line x1="1005.5" y1="56" x2="1005.5" y2="89" stroke="#b9b9b9" stroke-width="1.5"/><path d="M1013.5 60 V86.5 H1010" stroke="#b4b4b4" stroke-width="1.2" fill="none"/><line x1="1012.3" y1="60" x2="1012.3" y2="86" stroke="#fff" stroke-width="1"/><rect x="1025.5" y="62.5" width="26" height="23" fill="#e8e8e8" stroke="#b8b8b8" stroke-width="1"/><line x1="1026" y1="74" x2="1051" y2="74" stroke="#c8c8c8" stroke-width="1.5"/><path d="M1035 69.5 L1038.5 66 L1042 69.5Z M1035 77.5 L1038.5 81 L1042 77.5Z" fill="#000"/><line x1="1057" y1="62" x2="1057" y2="85" stroke="#a0a0a0" stroke-width="1.3"/><path d="M1067 68.5h19" stroke="#00a000" stroke-width="1.2"/><path d="M1067 72.5h19" stroke="#0000ff" stroke-width="2.5"/><path d="M1067 77.5h19" stroke="#ff0000" stroke-width="2.5"/><path d="M1069 80 L1083 66" stroke="#0000ff" stroke-width="1.2"/><line x1="1094" y1="62" x2="1094" y2="85" stroke="#a0a0a0" stroke-width="1.3"/><path d="M1104.5 79 A10 10 0 0 1 1123.5 79 M1108 79 A6.5 6.5 0 0 1 1120 79 M1111.5 79 A2.8 2.8 0 0 1 1116.5 79" fill="none" stroke="#000" stroke-width="1.2"/><path d="M1135 82 L1151 65.5 M1135 82 L1152 73 M1135 82 L1152 77" stroke="#000" stroke-width="1.2"/><path d="M1165 65.5h19" stroke="#000" stroke-width="1.5"/><path d="M1165 69.5h19M1165 74h9M1165 79h9" stroke="#000" stroke-width="1" stroke-dasharray="1.3 0.9"/><text x="1175" y="82" font-family="Liberation Sans" font-weight="bold" font-size="12" fill="#000">P</text><path d="M1195 65.5h19" stroke="#000" stroke-width="1.5"/><path d="M1195 69.5h19M1195 74h9M1195 79h9" stroke="#000" stroke-width="1" stroke-dasharray="1.3 0.9"/><text x="1205" y="82" font-family="Liberation Sans" font-weight="bold" font-size="12" fill="#000">R</text><path d="M1225.5 64v19" stroke="#000" stroke-width="1" stroke-dasharray="1.3 0.9"/><path d="M1229.5 64v19M1235 64v19M1239.5 64v19M1244 64v19" stroke="#000" stroke-width="1.2"/><line x1="1252" y1="62" x2="1252" y2="85" stroke="#a0a0a0" stroke-width="1.3"/><path d="M1263.5 81.5 L1280 65.5" stroke="#000" stroke-width="1.2"/><path d="M1291 82 L1301 64 M1291 82 L1310 65 M1291 82 L1311 72 M1291 82 L1311 77 M1292 82H1311" stroke="#000" stroke-width="1.2"/><path d="M1291 82 L1296 76 L1300 82Z" fill="#000"/><path d="M1322 64 L1342 83 M1322 70 L1336 83 M1322 77 L1328 83 M1329 64 L1342 77 M1336 64 L1342 70 M1342 64 L1322 83 M1342 70 L1328 83 M1342 77 L1336 83 M1335 64 L1322 77 M1328 64 L1322 70" stroke="#000" stroke-width="1" stroke-dasharray="1.4 0.9"/><line x1="1354" y1="56" x2="1354" y2="89" stroke="#b9b9b9" stroke-width="1.5"/><path d="M1361.5 60 V86.5 H1358" stroke="#b4b4b4" stroke-width="1.2" fill="none"/><line x1="1360.3" y1="60" x2="1360.3" y2="86" stroke="#fff" stroke-width="1"/><rect x="1372.5" y="60.5" width="30" height="25.5" fill="#c9e0f7" stroke="#99c9f2" stroke-width="1"/><path d="M1384 64 V78.5 L1387.3 75.5 L1390 81.5 L1392 80.5 L1389.5 74.7 L1394 74.5 Z" fill="#fff" stroke="#000" stroke-width="1.1"/><path d="M1408.5 73.5h17M1416.7 65.5v16" stroke="#000" stroke-width="1.4"/><line x1="1435.5" y1="63" x2="1435.5" y2="85" stroke="#a0a0a0" stroke-width="1.3"/><path d="M1448.5 66.5 L1462.5 80" stroke="#000" stroke-width="1.2"/><path d="M1476 73.5h19" stroke="#000" stroke-width="1.6"/><path d="M1515.5 64v17.5" stroke="#000" stroke-width="1.6"/><path d="M1536 65 L1553 82" stroke="#000" stroke-width="1.2"/><text x="1536" y="81" font-family="Liberation Serif" font-weight="bold" font-size="9" fill="#000">S</text><text x="1546" y="72" font-family="Liberation Serif" font-weight="bold" font-size="9" fill="#000">L</text><line x1="1567.5" y1="56" x2="1567.5" y2="89" stroke="#b9b9b9" stroke-width="1.5"/>
<text x="2" y="15" font-family="Liberation Serif" font-weight="bold" font-size="12" fill="#ff0000" textLength="20" lengthAdjust="spacingAndGlyphs">MS</text><path d="M2.5 18.5 Q3.5 12 10 10.5 Q17 9.5 20.5 13.5 L21 17 Q19 19 17 18 L15.5 21.5 L13.5 18.5 Q9 18 7 21.5 L5 19 Z" fill="#000"/><path d="M5 17 q2 1 4 0 M13 16 q2 1 4 0" fill="none" stroke="#0aa" stroke-width="0.8"/><path d="M1765 13.5h12" stroke="#000" stroke-width="1"/><rect x="1823.5" y="9.5" width="10" height="10" fill="none" stroke="#000" stroke-width="1"/><path d="M1825.5 9.5 V7.5 H1835.5 V17.5 H1833.5" fill="none" stroke="#000" stroke-width="1"/><path d="M1882 8 L1894 20 M1894 8 L1882 20" stroke="#000" stroke-width="1.1"/><rect x="9.5" y="31" width="17.5" height="18.5" rx="1.5" fill="#fff" stroke="#000" stroke-width="1.3"/><rect x="9" y="30.2" width="18.5" height="2.8" fill="#000080"/><rect x="11.5" y="35" width="13" height="5" rx="1" fill="#222" /><rect x="12" y="35.6" width="6.5" height="3.8" fill="#ff0090"/><rect x="18.5" y="35.6" width="5.5" height="3.8" fill="#00a8ff"/><rect x="11.5" y="41.5" width="13" height="5" rx="1" fill="#222" /><rect x="12" y="42.1" width="6.5" height="3.8" fill="#f0f000"/><rect x="18.5" y="42.1" width="5.5" height="3.8" fill="#00d000"/><rect x="1849.5" y="31.5" width="20" height="20" fill="#fff" stroke="#ececec" stroke-width="1"/><rect x="1873.5" y="31.5" width="20" height="20" fill="#fff" stroke="#ececec" stroke-width="1"/><rect x="1897.5" y="31.5" width="20" height="20" fill="#fff" stroke="#ececec" stroke-width="1"/><rect x="1855" y="43.5" width="7.5" height="2.5" fill="#6b7a8a"/><rect x="1879.5" y="40" width="8" height="5" fill="none" stroke="#6b7a8a" stroke-width="1.6"/><path d="M1882 40 V37.5 H1889.5 V42.5 H1887.5" fill="none" stroke="#6b7a8a" stroke-width="1.6"/><path d="M1904 39 L1911 46 M1911 39 L1904 46" stroke="#6b7a8a" stroke-width="2.2"/><rect x="5" y="97" width="24" height="17" fill="#fff" stroke="#000" stroke-width="1.6"/><rect x="5" y="97" width="24" height="3" fill="#333"/><rect x="1861" y="94" width="25" height="23" fill="#f0f0f0"/><path d="M1861.5 116.5 V94.5 H1885.5" fill="none" stroke="#fff" stroke-width="1"/><path d="M1861 116 H1885 V94" fill="none" stroke="#808080" stroke-width="2"/><rect x="1889" y="94" width="25" height="23" fill="#f0f0f0"/><path d="M1889.5 116.5 V94.5 H1913.5" fill="none" stroke="#fff" stroke-width="1"/><path d="M1889 116 H1913 V94" fill="none" stroke="#808080" stroke-width="2"/><rect x="1866.5" y="104.5" width="8" height="6.5" fill="none" stroke="#000" stroke-width="1.8"/><path d="M1869.5 104 V100.5 H1878.5 V107.5 H1875" fill="none" stroke="#000" stroke-width="1.8"/><path d="M1896.5 100 L1905.5 110 M1905.5 100 L1896.5 110" stroke="#000" stroke-width="2.6" stroke-linecap="round"/>
<path d="M13.5 989.5 L9 993.5 L13.5 997.5" fill="none" stroke="#505050" stroke-width="2.2"/><path d="M1700.5 989.5 L1705 993.5 L1700.5 997.5" fill="none" stroke="#505050" stroke-width="2.2"/><line x1="1717" y1="986" x2="1717" y2="1001" stroke="#909090" stroke-width="1.3"/><line x1="1767" y1="986" x2="1767" y2="1001" stroke="#909090" stroke-width="1.3"/><line x1="1860" y1="986" x2="1860" y2="1001" stroke="#909090" stroke-width="1.3"/><path d="M1727 993 V989 Q1727 986.5 1730 986.5 H1731.5 M1733 994 V998 Q1733 1000.5 1730 1000.5 H1728.5" fill="none" stroke="#000" stroke-width="1.8"/><path d="M1730.5 984.5 L1734 986.7 L1730.5 989Z M1729.5 998.2 L1726 1000.5 L1729.5 1002.7Z" fill="#000"/><text x="1746" y="999.5" font-family="Liberation Serif" font-weight="bold" font-size="15" fill="#000">D</text><path d="M1781 985 L1784.5 990 H1777.5Z M1781 1001.5 L1784.5 996.5 H1777.5Z" fill="#000"/><rect x="1780" y="989" width="2" height="9" fill="#000"/><path d="M1803 986 V1001 M1795.5 993.5 H1810.5" stroke="#000" stroke-width="1.6"/><path d="M1803 985 l2.5 3h-5z M1803 1002 l2.5 -3h-5z M1795 993.5 l3 -2.5v5z M1811 993.5 l-3 -2.5v5z" fill="#000"/><circle cx="1824.5" cy="993.5" r="5.2" fill="none" stroke="#000" stroke-width="1.4"/><path d="M1821.5 993.5h6" stroke="#000" stroke-width="1.6"/><circle cx="1846" cy="993.5" r="5.2" fill="none" stroke="#000" stroke-width="1.4"/><path d="M1843 993.5h6M1846 990.5v6" stroke="#000" stroke-width="1.6"/><path d="M1877 987.5 V999.5 L1870.5 993.5Z" fill="#000"/><path d="M1892 987.5 V999.5 L1898.5 993.5Z" fill="#000"/><rect x="1911.5" y="988.5" width="10" height="10" fill="#f8f8f8" stroke="#333" stroke-width="1"/><path d="M1913 991h8M1913 994h8M1913 996.5h8" stroke="#999" stroke-width="0.8"/><line x1="1634.5" y1="1010" x2="1634.5" y2="1029" stroke="#d8d8d8" stroke-width="1"/><line x1="1704.5" y1="1010" x2="1704.5" y2="1029" stroke="#d8d8d8" stroke-width="1"/><line x1="1793.5" y1="1010" x2="1793.5" y2="1029" stroke="#d8d8d8" stroke-width="1"/><line x1="1844.5" y1="1010" x2="1844.5" y2="1029" stroke="#d8d8d8" stroke-width="1"/><line x1="1874.5" y1="1010" x2="1874.5" y2="1029" stroke="#d8d8d8" stroke-width="1"/>
<path d="M20 1047.3 L27.9 1046.2 V1054.3 H20Z M29.2 1046 L40 1044.5 V1054.3 H29.2Z M20 1055.6 H27.9 V1063.7 L20 1062.6Z M29.2 1055.6 H40 V1065.5 L29.2 1064Z" fill="#fff"/><circle cx="89" cy="1051" r="5.6" fill="none" stroke="#000" stroke-width="1.4"/><path d="M85 1055 L75.5 1064.5" stroke="#000" stroke-width="1.5"/><path d="M515.5 1043.5 L537 1049 V1062 L515.5 1057Z" fill="#3fb6ff" stroke="#9fd8ff" stroke-width="0.7"/><path d="M510 1062 L527 1065 L521 1068 L510 1065Z" fill="#d8d8d8"/><path d="M525 1060 l9 1.5 -4 2 -8 -1.5z" fill="#e8e8e8"/><circle cx="586" cy="1055" r="15" fill="#1a8ad6"/><path d="M572 1052 Q576 1040 588 1040 Q600 1040 601 1052 Q601 1058 594 1058 H580 Q581 1051 587 1051" fill="#39c36f"/><path d="M574 1050 Q570 1066 588 1070 Q596 1071 600 1064 Q588 1068 582 1060 Q578 1052 586 1049" fill="#0c5fa8"/><circle cx="587" cy="1055" r="4" fill="#3a3d42"/><rect x="633" y="1047" width="29" height="23" rx="1" fill="#f2f2f2"/><path d="M639.5 1047 V1042 Q639.5 1040 641.5 1040 H653.5 Q655.5 1040 655.5 1042 V1047" fill="none" stroke="#dedede" stroke-width="2"/><rect x="642" y="1054" width="5" height="5" fill="#f25022"/><rect x="648" y="1054" width="5" height="5" fill="#7fba00"/><rect x="642" y="1060" width="5" height="5" fill="#00a4ef"/><rect x="648" y="1060" width="5" height="5" fill="#ffb900"/><path d="M695 1049 L710 1041 L725 1049 V1069 H695Z" fill="#0f6cbd"/><path d="M698 1050 H722 L710 1057Z" fill="#fff"/><path d="M695 1050 L710 1059 L725 1050 V1069 H695Z" fill="#28a8ea"/><path d="M695 1069 L710 1059 L725 1069Z" fill="#1490df"/><path d="M758 1045 H767 L769 1047 H785 V1066 H758Z" fill="#f8d775"/><rect x="758" y="1044" width="10" height="3" fill="#e8a800"/><path d="M762 1066 V1058 H781 V1066 H777 V1062 H766 V1066Z" fill="#3d8fe0"/><rect x="747" y="1077" width="51" height="3" fill="#76b9ed"/><circle cx="834" cy="1055" r="14" fill="#db4437"/><path d="M834 1055 L846.1 1062 A14 14 0 0 1 821.9 1062Z" fill="#0f9d58"/><path d="M834 1055 L846.1 1062 A14 14 0 0 0 834 1041 Z" fill="#f4b400"/><path d="M834 1055 L834 1041 A14 14 0 0 0 821.9 1048 V1062Z" fill="#db4437"/><circle cx="834" cy="1055" r="6.2" fill="#fff"/><circle cx="834" cy="1055" r="4.8" fill="#4285f4"/><rect x="809" y="1077" width="51" height="3" fill="#76b9ed"/><path d="M882 1042 H905 V1066 H882Z" fill="#d7ecd0" stroke="#6fb35e" stroke-width="1"/><path d="M886 1046 H909 L908 1068 H885Z" fill="#eef6ea"/><path d="M898 1049h9v4h-9zM898 1055h9v4h-9zM888 1061h19v4h-19z" fill="#6ab04c"/><text x="886" y="1059" font-family="Liberation Sans" font-weight="bold" font-size="14" fill="#1d6f2a">X</text><rect x="871" y="1077" width="40" height="3" fill="#76b9ed"/><rect x="912" y="1077" width="10" height="3" fill="#5f8fb7"/><path d="M944 1043 H966 V1065 H944Z" fill="#f7c3a8"/><path d="M946 1047 H970 L969 1068 H945Z" fill="#f26b2c"/><path d="M949 1051h6v2h-6zM949 1055h6v2h-6zM949 1059h6v2h-6z" fill="#fff"/><circle cx="962" cy="1056" r="4.5" fill="#fff"/><path d="M962 1056 V1051.5 A4.5 4.5 0 0 1 966.5 1056Z" fill="#f26b2c"/><rect x="990" y="1030" width="61" height="50" fill="#65686c"/><text x="1004.5" y="1055" font-family="Liberation Serif" font-weight="bold" font-size="17" fill="#ff0000" textLength="30" lengthAdjust="spacingAndGlyphs">MS</text><path d="M1006 1059 Q1011 1049 1022 1048 Q1031 1048 1035 1056 L1034 1061 Q1031 1064 1028 1062 L1026 1066 L1022 1063 Q1015 1063 1012 1067 L1009 1064 Q1005 1064 1006 1059Z" fill="#000"/><path d="M1008 1064 Q1018 1068 1024 1063 Q1030 1066 1035 1059 L1034 1062 Q1026 1068 1020 1066Z" fill="#c8c8c8"/><path d="M1009 1056 q3 4 6 2 M1019 1055 q3 3 5 1" fill="none" stroke="#0aa" stroke-width="1"/><rect x="990" y="1077" width="61" height="3" fill="#76b9ed"/><rect x="1067" y="1040" width="30" height="30" fill="#fff"/><path d="M1068 1052 Q1069 1049 1070.5 1047 Q1070 1052 1074 1055 H1090 Q1094 1052 1093.5 1047 Q1095.5 1049 1096.5 1052 V1057 Q1094 1060 1091 1060 L1088 1066 H1076 L1073 1060 Q1070 1060 1068 1057Z" fill="#000"/><path d="M1072.5 1055 Q1072 1044 1082 1043 Q1092 1044 1091.5 1055Z" fill="#fff" stroke="#000" stroke-width="1"/><path d="M1082 1043.5 V1055 M1075 1050 l4 -4 M1085 1046 l4 4" stroke="#000" stroke-width="0.9"/><path d="M1077 1059 l3 2 M1087 1059 l-3 2" stroke="#ddd" stroke-width="1"/><rect x="1076" y="1066" width="12" height="2.5" rx="1" fill="#000"/><circle cx="1577" cy="1056" r="12.5" fill="#fff"/><circle cx="1577" cy="1056" r="11" fill="#1e8fd6"/><text x="1570" y="1064" font-family="Liberation Sans" font-weight="bold" font-size="19" fill="#fff">?</text><circle cx="1587" cy="1062" r="6" fill="#e81123"/><rect x="1586" y="1057.5" width="2" height="5.5" fill="#fff"/><rect x="1586" y="1064" width="2" height="2" fill="#fff"/><path d="M1604 1059.5 L1612 1052 L1620 1059.5" fill="none" stroke="#fff" stroke-width="1.3"/><rect x="1636.5" y="1050.5" width="9" height="10" rx="1" fill="none" stroke="#fff" stroke-width="1.1"/><path d="M1645.5 1053.5 L1650 1051 V1060 L1645.5 1057.5" fill="none" stroke="#fff" stroke-width="1.1"/><path d="M1637 1047 Q1643 1044 1649 1047 M1637 1064 Q1643 1067 1649 1064" fill="none" stroke="#fff" stroke-width="0.9"/><rect x="1664.5" y="1050.5" width="17" height="10" fill="none" stroke="#fff" stroke-width="1.2"/><rect x="1666" y="1052" width="14" height="7" fill="#fff"/><rect x="1682" y="1053" width="1.8" height="5" fill="#fff"/><path d="M1662 1047 v4 h4 v-4 M1663 1046 v2 M1665 1046 v2" fill="none" stroke="#fff" stroke-width="1"/><path d="M1692.5 1052.5 H1696 L1700.5 1048.5 V1063 L1696 1059 H1692.5Z" fill="none" stroke="#fff" stroke-width="1.1"/><path d="M1703 1053 Q1705 1055.7 1703 1058.5 M1706 1050.5 Q1709.5 1055.7 1706 1061 M1709 1048 Q1714 1055.7 1709 1063.5" fill="none" stroke="#fff" stroke-width="1.1"/><path d="M1869.5 1045.5 H1889.5 V1061.5 H1883 L1879.5 1064.5 L1876 1061.5 H1869.5Z" fill="none" stroke="#fff" stroke-width="1.2"/><rect x="1914" y="1030" width="1.5" height="50" fill="#8a8c90"/>
</svg>
</body></html>
